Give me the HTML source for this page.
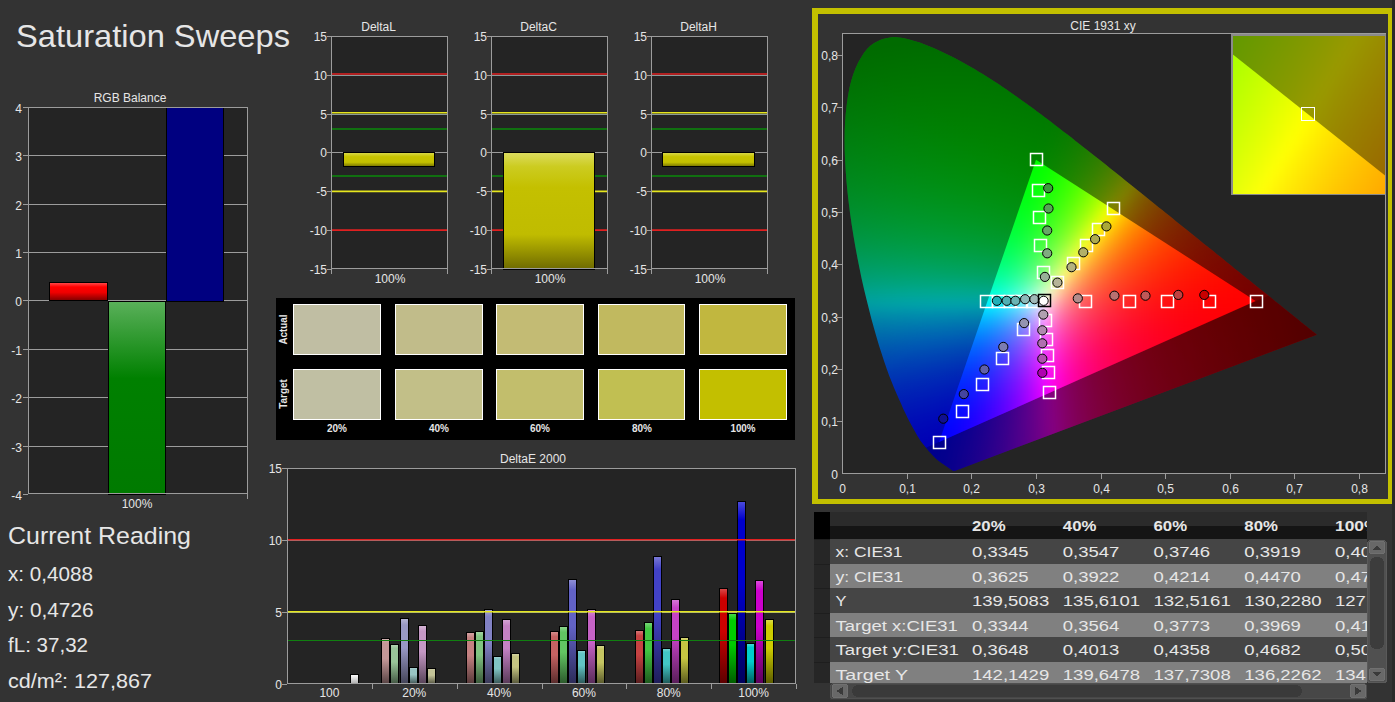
<!DOCTYPE html><html><head><meta charset="utf-8"><style>
html,body{margin:0;padding:0;background:#333333;overflow:hidden}
svg{display:block}
text{font-family:"Liberation Sans", sans-serif;fill:#e6e6e6}
</style></head><body>
<svg width="1395" height="702" viewBox="0 0 1395 702" shape-rendering="crispEdges">
<rect x="0" y="0" width="1395" height="702" fill="#333333"/>

<defs>
<linearGradient id="gRed" x1="0" y1="0" x2="0" y2="1">
<stop offset="0" stop-color="#ff5050"/><stop offset="0.25" stop-color="#ff0000"/><stop offset="0.55" stop-color="#f00000"/><stop offset="1" stop-color="#800000"/></linearGradient>
<linearGradient id="gGreen" x1="0" y1="0" x2="0" y2="1">
<stop offset="0" stop-color="#5ab05a"/><stop offset="0.4" stop-color="#008000"/><stop offset="1" stop-color="#007a00"/></linearGradient>
<linearGradient id="gYel" x1="0" y1="0" x2="0" y2="1">
<stop offset="0" stop-color="#dada50"/><stop offset="0.3" stop-color="#c8c400"/><stop offset="0.7" stop-color="#c4c000"/><stop offset="1" stop-color="#787400"/></linearGradient>
<linearGradient id="gYel2" x1="0" y1="0" x2="0" y2="1">
<stop offset="0" stop-color="#dcdc60"/><stop offset="0.12" stop-color="#cccc20"/><stop offset="0.3" stop-color="#c4c000"/><stop offset="0.7" stop-color="#c0bc00"/><stop offset="1" stop-color="#6e6a00"/></linearGradient>
</defs>
<text x="16" y="46.5" font-size="31.5" text-anchor="start" textLength="274" lengthAdjust="spacingAndGlyphs" fill="#f0f0f0">Saturation Sweeps</text>
<rect x="28" y="107" width="220" height="387" fill="#242424" />
<text x="130" y="102" font-size="12" text-anchor="middle" >RGB Balance</text>
<line x1="23" y1="107.5" x2="28" y2="107.5" stroke="#9c9c9c" stroke-width="1"/>
<text x="22" y="112.5" font-size="12" text-anchor="end" >4</text>
<line x1="28" y1="155.5" x2="248" y2="155.5" stroke="#9c9c9c" stroke-width="1"/>
<line x1="23" y1="155.5" x2="28" y2="155.5" stroke="#9c9c9c" stroke-width="1"/>
<text x="22" y="160.5" font-size="12" text-anchor="end" >3</text>
<line x1="28" y1="204.5" x2="248" y2="204.5" stroke="#9c9c9c" stroke-width="1"/>
<line x1="23" y1="204.5" x2="28" y2="204.5" stroke="#9c9c9c" stroke-width="1"/>
<text x="22" y="209.5" font-size="12" text-anchor="end" >2</text>
<line x1="28" y1="252.5" x2="248" y2="252.5" stroke="#9c9c9c" stroke-width="1"/>
<line x1="23" y1="252.5" x2="28" y2="252.5" stroke="#9c9c9c" stroke-width="1"/>
<text x="22" y="257.5" font-size="12" text-anchor="end" >1</text>
<line x1="28" y1="300.5" x2="248" y2="300.5" stroke="#9c9c9c" stroke-width="1"/>
<line x1="23" y1="300.5" x2="28" y2="300.5" stroke="#9c9c9c" stroke-width="1"/>
<text x="22" y="305.5" font-size="12" text-anchor="end" >0</text>
<line x1="28" y1="349.5" x2="248" y2="349.5" stroke="#9c9c9c" stroke-width="1"/>
<line x1="23" y1="349.5" x2="28" y2="349.5" stroke="#9c9c9c" stroke-width="1"/>
<text x="22" y="354.5" font-size="12" text-anchor="end" >-1</text>
<line x1="28" y1="397.5" x2="248" y2="397.5" stroke="#9c9c9c" stroke-width="1"/>
<line x1="23" y1="397.5" x2="28" y2="397.5" stroke="#9c9c9c" stroke-width="1"/>
<text x="22" y="402.5" font-size="12" text-anchor="end" >-2</text>
<line x1="28" y1="446.5" x2="248" y2="446.5" stroke="#9c9c9c" stroke-width="1"/>
<line x1="23" y1="446.5" x2="28" y2="446.5" stroke="#9c9c9c" stroke-width="1"/>
<text x="22" y="451.5" font-size="12" text-anchor="end" >-3</text>
<line x1="23" y1="494.5" x2="28" y2="494.5" stroke="#9c9c9c" stroke-width="1"/>
<text x="22" y="499.5" font-size="12" text-anchor="end" >-4</text>
<rect x="49.5" y="282.5" width="58" height="18" fill="url(#gRed)" stroke="#000" stroke-width="1" />
<rect x="108.5" y="301.5" width="57" height="192.5" fill="url(#gGreen)" stroke="#000" stroke-width="1" />
<rect x="166.5" y="107.5" width="57" height="194.0" fill="#000080" stroke="#000" stroke-width="1" />
<rect x="28.5" y="107.5" width="219" height="386" fill="none" stroke="#9c9c9c"/>
<line x1="247.5" y1="494" x2="247.5" y2="499" stroke="#9c9c9c" stroke-width="1"/>
<text x="137" y="508" font-size="12" text-anchor="middle" >100%</text>
<text x="8" y="543.5" font-size="24.5" text-anchor="start" textLength="183" lengthAdjust="spacingAndGlyphs" fill="#f0f0f0">Current Reading</text>
<text x="8" y="581" font-size="20" text-anchor="start" textLength="85" lengthAdjust="spacingAndGlyphs" fill="#f0f0f0">x: 0,4088</text>
<text x="8" y="617" font-size="20" text-anchor="start" textLength="85.5" lengthAdjust="spacingAndGlyphs" fill="#f0f0f0">y: 0,4726</text>
<text x="8" y="652.2" font-size="20" text-anchor="start" textLength="80" lengthAdjust="spacingAndGlyphs" fill="#f0f0f0">fL: 37,32</text>
<text x="8" y="688.4" font-size="20" text-anchor="start" textLength="144" lengthAdjust="spacingAndGlyphs" fill="#f0f0f0">cd/m²: 127,867</text>
<rect x="331" y="36" width="117" height="233" fill="#242424" />
<line x1="327" y1="36.5" x2="331" y2="36.5" stroke="#9c9c9c" stroke-width="1"/>
<text x="327" y="41.0" font-size="12" text-anchor="end" >15</text>
<line x1="331" y1="75.5" x2="448" y2="75.5" stroke="#9c9c9c" stroke-width="1"/>
<line x1="327" y1="75.5" x2="331" y2="75.5" stroke="#9c9c9c" stroke-width="1"/>
<text x="327" y="80.0" font-size="12" text-anchor="end" >10</text>
<line x1="331" y1="114.5" x2="448" y2="114.5" stroke="#9c9c9c" stroke-width="1"/>
<line x1="327" y1="114.5" x2="331" y2="114.5" stroke="#9c9c9c" stroke-width="1"/>
<text x="327" y="119.0" font-size="12" text-anchor="end" >5</text>
<line x1="331" y1="152.5" x2="448" y2="152.5" stroke="#9c9c9c" stroke-width="1"/>
<line x1="327" y1="152.5" x2="331" y2="152.5" stroke="#9c9c9c" stroke-width="1"/>
<text x="327" y="157.0" font-size="12" text-anchor="end" >0</text>
<line x1="331" y1="191.5" x2="448" y2="191.5" stroke="#9c9c9c" stroke-width="1"/>
<line x1="327" y1="191.5" x2="331" y2="191.5" stroke="#9c9c9c" stroke-width="1"/>
<text x="327" y="196.0" font-size="12" text-anchor="end" >-5</text>
<line x1="331" y1="230.5" x2="448" y2="230.5" stroke="#9c9c9c" stroke-width="1"/>
<line x1="327" y1="230.5" x2="331" y2="230.5" stroke="#9c9c9c" stroke-width="1"/>
<text x="327" y="235.0" font-size="12" text-anchor="end" >-10</text>
<line x1="327" y1="269.5" x2="331" y2="269.5" stroke="#9c9c9c" stroke-width="1"/>
<text x="327" y="274.0" font-size="12" text-anchor="end" >-15</text>
<line x1="331" y1="75.5" x2="448" y2="75.5" stroke="#8a9a9a" stroke-width="1"/>
<line x1="331" y1="73.93" x2="448" y2="73.93" stroke="#e02020" stroke-width="1.6" shape-rendering="geometricPrecision"/>
<line x1="331" y1="230.17" x2="448" y2="230.17" stroke="#e02020" stroke-width="1.6" shape-rendering="geometricPrecision"/>
<line x1="331" y1="114.5" x2="448" y2="114.5" stroke="#8a9a9a" stroke-width="1"/>
<line x1="331" y1="112.77" x2="448" y2="112.77" stroke="#e6e61e" stroke-width="1.6" shape-rendering="geometricPrecision"/>
<line x1="331" y1="191.33" x2="448" y2="191.33" stroke="#e6e61e" stroke-width="1.6" shape-rendering="geometricPrecision"/>
<line x1="331" y1="128.5" x2="448" y2="128.5" stroke="#107010" stroke-width="2"/>
<line x1="331" y1="175.5" x2="448" y2="175.5" stroke="#107010" stroke-width="2"/>
<rect x="343.5" y="152.5" width="91" height="14" fill="url(#gYel)" stroke="#000" stroke-width="1" />
<rect x="331.5" y="36.5" width="116" height="232" fill="none" stroke="#9c9c9c"/>
<line x1="331.5" y1="269" x2="331.5" y2="274" stroke="#9c9c9c" stroke-width="1"/>
<line x1="447.5" y1="269" x2="447.5" y2="274" stroke="#9c9c9c" stroke-width="1"/>
<text x="378.6" y="30.5" font-size="12" text-anchor="middle" >DeltaL</text>
<text x="390" y="283" font-size="12" text-anchor="middle" >100%</text>
<rect x="491" y="36" width="117" height="233" fill="#242424" />
<line x1="487" y1="36.5" x2="491" y2="36.5" stroke="#9c9c9c" stroke-width="1"/>
<text x="487" y="41.0" font-size="12" text-anchor="end" >15</text>
<line x1="491" y1="75.5" x2="608" y2="75.5" stroke="#9c9c9c" stroke-width="1"/>
<line x1="487" y1="75.5" x2="491" y2="75.5" stroke="#9c9c9c" stroke-width="1"/>
<text x="487" y="80.0" font-size="12" text-anchor="end" >10</text>
<line x1="491" y1="114.5" x2="608" y2="114.5" stroke="#9c9c9c" stroke-width="1"/>
<line x1="487" y1="114.5" x2="491" y2="114.5" stroke="#9c9c9c" stroke-width="1"/>
<text x="487" y="119.0" font-size="12" text-anchor="end" >5</text>
<line x1="491" y1="152.5" x2="608" y2="152.5" stroke="#9c9c9c" stroke-width="1"/>
<line x1="487" y1="152.5" x2="491" y2="152.5" stroke="#9c9c9c" stroke-width="1"/>
<text x="487" y="157.0" font-size="12" text-anchor="end" >0</text>
<line x1="491" y1="191.5" x2="608" y2="191.5" stroke="#9c9c9c" stroke-width="1"/>
<line x1="487" y1="191.5" x2="491" y2="191.5" stroke="#9c9c9c" stroke-width="1"/>
<text x="487" y="196.0" font-size="12" text-anchor="end" >-5</text>
<line x1="491" y1="230.5" x2="608" y2="230.5" stroke="#9c9c9c" stroke-width="1"/>
<line x1="487" y1="230.5" x2="491" y2="230.5" stroke="#9c9c9c" stroke-width="1"/>
<text x="487" y="235.0" font-size="12" text-anchor="end" >-10</text>
<line x1="487" y1="269.5" x2="491" y2="269.5" stroke="#9c9c9c" stroke-width="1"/>
<text x="487" y="274.0" font-size="12" text-anchor="end" >-15</text>
<line x1="491" y1="75.5" x2="608" y2="75.5" stroke="#8a9a9a" stroke-width="1"/>
<line x1="491" y1="73.93" x2="608" y2="73.93" stroke="#e02020" stroke-width="1.6" shape-rendering="geometricPrecision"/>
<line x1="491" y1="230.17" x2="608" y2="230.17" stroke="#e02020" stroke-width="1.6" shape-rendering="geometricPrecision"/>
<line x1="491" y1="114.5" x2="608" y2="114.5" stroke="#8a9a9a" stroke-width="1"/>
<line x1="491" y1="112.77" x2="608" y2="112.77" stroke="#e6e61e" stroke-width="1.6" shape-rendering="geometricPrecision"/>
<line x1="491" y1="191.33" x2="608" y2="191.33" stroke="#e6e61e" stroke-width="1.6" shape-rendering="geometricPrecision"/>
<line x1="491" y1="128.5" x2="608" y2="128.5" stroke="#107010" stroke-width="2"/>
<line x1="491" y1="175.5" x2="608" y2="175.5" stroke="#107010" stroke-width="2"/>
<rect x="503.5" y="152.5" width="91" height="117" fill="url(#gYel2)" stroke="#000" stroke-width="1" />
<rect x="491.5" y="36.5" width="116" height="232" fill="none" stroke="#9c9c9c"/>
<line x1="491.5" y1="269" x2="491.5" y2="274" stroke="#9c9c9c" stroke-width="1"/>
<line x1="607.5" y1="269" x2="607.5" y2="274" stroke="#9c9c9c" stroke-width="1"/>
<text x="538.6" y="30.5" font-size="12" text-anchor="middle" >DeltaC</text>
<text x="550" y="283" font-size="12" text-anchor="middle" >100%</text>
<rect x="651" y="36" width="117" height="233" fill="#242424" />
<line x1="647" y1="36.5" x2="651" y2="36.5" stroke="#9c9c9c" stroke-width="1"/>
<text x="647" y="41.0" font-size="12" text-anchor="end" >15</text>
<line x1="651" y1="75.5" x2="768" y2="75.5" stroke="#9c9c9c" stroke-width="1"/>
<line x1="647" y1="75.5" x2="651" y2="75.5" stroke="#9c9c9c" stroke-width="1"/>
<text x="647" y="80.0" font-size="12" text-anchor="end" >10</text>
<line x1="651" y1="114.5" x2="768" y2="114.5" stroke="#9c9c9c" stroke-width="1"/>
<line x1="647" y1="114.5" x2="651" y2="114.5" stroke="#9c9c9c" stroke-width="1"/>
<text x="647" y="119.0" font-size="12" text-anchor="end" >5</text>
<line x1="651" y1="152.5" x2="768" y2="152.5" stroke="#9c9c9c" stroke-width="1"/>
<line x1="647" y1="152.5" x2="651" y2="152.5" stroke="#9c9c9c" stroke-width="1"/>
<text x="647" y="157.0" font-size="12" text-anchor="end" >0</text>
<line x1="651" y1="191.5" x2="768" y2="191.5" stroke="#9c9c9c" stroke-width="1"/>
<line x1="647" y1="191.5" x2="651" y2="191.5" stroke="#9c9c9c" stroke-width="1"/>
<text x="647" y="196.0" font-size="12" text-anchor="end" >-5</text>
<line x1="651" y1="230.5" x2="768" y2="230.5" stroke="#9c9c9c" stroke-width="1"/>
<line x1="647" y1="230.5" x2="651" y2="230.5" stroke="#9c9c9c" stroke-width="1"/>
<text x="647" y="235.0" font-size="12" text-anchor="end" >-10</text>
<line x1="647" y1="269.5" x2="651" y2="269.5" stroke="#9c9c9c" stroke-width="1"/>
<text x="647" y="274.0" font-size="12" text-anchor="end" >-15</text>
<line x1="651" y1="75.5" x2="768" y2="75.5" stroke="#8a9a9a" stroke-width="1"/>
<line x1="651" y1="73.93" x2="768" y2="73.93" stroke="#e02020" stroke-width="1.6" shape-rendering="geometricPrecision"/>
<line x1="651" y1="230.17" x2="768" y2="230.17" stroke="#e02020" stroke-width="1.6" shape-rendering="geometricPrecision"/>
<line x1="651" y1="114.5" x2="768" y2="114.5" stroke="#8a9a9a" stroke-width="1"/>
<line x1="651" y1="112.77" x2="768" y2="112.77" stroke="#e6e61e" stroke-width="1.6" shape-rendering="geometricPrecision"/>
<line x1="651" y1="191.33" x2="768" y2="191.33" stroke="#e6e61e" stroke-width="1.6" shape-rendering="geometricPrecision"/>
<line x1="651" y1="128.5" x2="768" y2="128.5" stroke="#107010" stroke-width="2"/>
<line x1="651" y1="175.5" x2="768" y2="175.5" stroke="#107010" stroke-width="2"/>
<rect x="662.5" y="152.5" width="92" height="14" fill="url(#gYel)" stroke="#000" stroke-width="1" />
<rect x="651.5" y="36.5" width="116" height="232" fill="none" stroke="#9c9c9c"/>
<line x1="651.5" y1="269" x2="651.5" y2="274" stroke="#9c9c9c" stroke-width="1"/>
<line x1="767.5" y1="269" x2="767.5" y2="274" stroke="#9c9c9c" stroke-width="1"/>
<text x="698.6" y="30.5" font-size="12" text-anchor="middle" >DeltaH</text>
<text x="710" y="283" font-size="12" text-anchor="middle" >100%</text>
<rect x="276" y="298" width="519" height="142" fill="#000000" />
<rect x="293.5" y="304.5" width="87" height="50" fill="#c0bea3" stroke="#ffffff" stroke-width="1.2" />
<rect x="293.5" y="369.5" width="87" height="50" fill="#c0bfa3" stroke="#ffffff" stroke-width="1.2" />
<text x="337" y="431.8" font-size="11" text-anchor="middle" fill="#ffffff" font-weight="bold" textLength="20" lengthAdjust="spacingAndGlyphs">20%</text>
<rect x="395.5" y="304.5" width="87" height="50" fill="#c1bc8a" stroke="#ffffff" stroke-width="1.2" />
<rect x="395.5" y="369.5" width="87" height="50" fill="#c2bf88" stroke="#ffffff" stroke-width="1.2" />
<text x="439" y="431.8" font-size="11" text-anchor="middle" fill="#ffffff" font-weight="bold" textLength="20" lengthAdjust="spacingAndGlyphs">40%</text>
<rect x="496.5" y="304.5" width="87" height="50" fill="#c3bb74" stroke="#ffffff" stroke-width="1.2" />
<rect x="496.5" y="369.5" width="87" height="50" fill="#c2be6c" stroke="#ffffff" stroke-width="1.2" />
<text x="540" y="431.8" font-size="11" text-anchor="middle" fill="#ffffff" font-weight="bold" textLength="20" lengthAdjust="spacingAndGlyphs">60%</text>
<rect x="598.5" y="304.5" width="86" height="50" fill="#c1b95f" stroke="#ffffff" stroke-width="1.2" />
<rect x="598.5" y="369.5" width="86" height="50" fill="#c1bf52" stroke="#ffffff" stroke-width="1.2" />
<text x="642" y="431.8" font-size="11" text-anchor="middle" fill="#ffffff" font-weight="bold" textLength="20" lengthAdjust="spacingAndGlyphs">80%</text>
<rect x="699.5" y="304.5" width="87" height="50" fill="#c1b73f" stroke="#ffffff" stroke-width="1.2" />
<rect x="699.5" y="369.5" width="87" height="50" fill="#c3bf00" stroke="#ffffff" stroke-width="1.2" />
<text x="743" y="431.8" font-size="11" text-anchor="middle" fill="#ffffff" font-weight="bold" textLength="25" lengthAdjust="spacingAndGlyphs">100%</text>
<text x="0" y="0" font-size="10.5" text-anchor="middle" fill="#ffffff" font-weight="bold" textLength="30" lengthAdjust="spacingAndGlyphs" transform="translate(287.3,329.5) rotate(-90)">Actual</text>
<text x="0" y="0" font-size="10.5" text-anchor="middle" fill="#ffffff" font-weight="bold" textLength="29.5" lengthAdjust="spacingAndGlyphs" transform="translate(287.3,394) rotate(-90)">Target</text>
<rect x="287" y="468" width="509" height="216" fill="#242424" />
<text x="533" y="463" font-size="12" text-anchor="middle" >DeltaE 2000</text>
<line x1="282" y1="468.5" x2="287" y2="468.5" stroke="#9c9c9c" stroke-width="1"/>
<text x="282" y="473.0" font-size="12" text-anchor="end" >15</text>
<line x1="282" y1="540.5" x2="287" y2="540.5" stroke="#9c9c9c" stroke-width="1"/>
<text x="282" y="545.0" font-size="12" text-anchor="end" >10</text>
<line x1="282" y1="612.5" x2="287" y2="612.5" stroke="#9c9c9c" stroke-width="1"/>
<text x="282" y="617.0" font-size="12" text-anchor="end" >5</text>
<line x1="282" y1="684.5" x2="287" y2="684.5" stroke="#9c9c9c" stroke-width="1"/>
<text x="282" y="689.0" font-size="12" text-anchor="end" >0</text>
<line x1="287" y1="540.5" x2="796" y2="540.5" stroke="#8a9a9a" stroke-width="1"/>
<line x1="287" y1="612.5" x2="796" y2="612.5" stroke="#8a9a9a" stroke-width="1"/>
<line x1="372.5" y1="684" x2="372.5" y2="689" stroke="#9c9c9c" stroke-width="1"/>
<line x1="457.5" y1="684" x2="457.5" y2="689" stroke="#9c9c9c" stroke-width="1"/>
<line x1="542.5" y1="684" x2="542.5" y2="689" stroke="#9c9c9c" stroke-width="1"/>
<line x1="626.5" y1="684" x2="626.5" y2="689" stroke="#9c9c9c" stroke-width="1"/>
<line x1="711.5" y1="684" x2="711.5" y2="689" stroke="#9c9c9c" stroke-width="1"/>
<line x1="796.5" y1="684" x2="796.5" y2="689" stroke="#9c9c9c" stroke-width="1"/>
<text x="329.4166666666667" y="697" font-size="12" text-anchor="middle" >100</text>
<text x="414.25" y="697" font-size="12" text-anchor="middle" >20%</text>
<text x="499.0833333333333" y="697" font-size="12" text-anchor="middle" >40%</text>
<text x="583.9166666666666" y="697" font-size="12" text-anchor="middle" >60%</text>
<text x="668.75" y="697" font-size="12" text-anchor="middle" >80%</text>
<text x="753.5833333333333" y="697" font-size="12" text-anchor="middle" >100%</text>
<rect x="381.5" y="638.5" width="8" height="45.0" fill="url(#de1)" stroke="#000" stroke-width="1" />
<rect x="390.5" y="644.5" width="8" height="39.0" fill="url(#de2)" stroke="#000" stroke-width="1" />
<rect x="400.5" y="618.5" width="8" height="65.0" fill="url(#de3)" stroke="#000" stroke-width="1" />
<rect x="409.5" y="667.5" width="8" height="16.0" fill="url(#de4)" stroke="#000" stroke-width="1" />
<rect x="418.5" y="625.5" width="8" height="58.0" fill="url(#de5)" stroke="#000" stroke-width="1" />
<rect x="427.5" y="668.5" width="8" height="15.0" fill="url(#de6)" stroke="#000" stroke-width="1" />
<rect x="466.5" y="632.5" width="8" height="51.0" fill="url(#de7)" stroke="#000" stroke-width="1" />
<rect x="475.5" y="631.5" width="8" height="52.0" fill="url(#de8)" stroke="#000" stroke-width="1" />
<rect x="484.5" y="609.5" width="8" height="74.0" fill="url(#de9)" stroke="#000" stroke-width="1" />
<rect x="493.5" y="656.5" width="8" height="27.0" fill="url(#de10)" stroke="#000" stroke-width="1" />
<rect x="502.5" y="619.5" width="8" height="64.0" fill="url(#de11)" stroke="#000" stroke-width="1" />
<rect x="511.5" y="653.5" width="8" height="30.0" fill="url(#de12)" stroke="#000" stroke-width="1" />
<rect x="550.5" y="631.5" width="8" height="52.0" fill="url(#de13)" stroke="#000" stroke-width="1" />
<rect x="559.5" y="626.5" width="8" height="57.0" fill="url(#de14)" stroke="#000" stroke-width="1" />
<rect x="568.5" y="579.5" width="8" height="104.0" fill="url(#de15)" stroke="#000" stroke-width="1" />
<rect x="577.5" y="650.5" width="8" height="33.0" fill="url(#de16)" stroke="#000" stroke-width="1" />
<rect x="587.5" y="609.5" width="8" height="74.0" fill="url(#de17)" stroke="#000" stroke-width="1" />
<rect x="596.5" y="645.5" width="8" height="38.0" fill="url(#de18)" stroke="#000" stroke-width="1" />
<rect x="635.5" y="630.5" width="8" height="53.0" fill="url(#de19)" stroke="#000" stroke-width="1" />
<rect x="644.5" y="622.5" width="8" height="61.0" fill="url(#de20)" stroke="#000" stroke-width="1" />
<rect x="653.5" y="556.5" width="8" height="127.0" fill="url(#de21)" stroke="#000" stroke-width="1" />
<rect x="662.5" y="648.5" width="8" height="35.0" fill="url(#de22)" stroke="#000" stroke-width="1" />
<rect x="671.5" y="599.5" width="8" height="84.0" fill="url(#de23)" stroke="#000" stroke-width="1" />
<rect x="680.5" y="637.5" width="8" height="46.0" fill="url(#de24)" stroke="#000" stroke-width="1" />
<rect x="719.5" y="588.5" width="8" height="95.0" fill="url(#de25)" stroke="#000" stroke-width="1" />
<rect x="728.5" y="613.5" width="8" height="70.0" fill="url(#de26)" stroke="#000" stroke-width="1" />
<rect x="737.5" y="501.5" width="8" height="182.0" fill="url(#de27)" stroke="#000" stroke-width="1" />
<rect x="746.5" y="643.5" width="8" height="40.0" fill="url(#de28)" stroke="#000" stroke-width="1" />
<rect x="755.5" y="580.5" width="8" height="103.0" fill="url(#de29)" stroke="#000" stroke-width="1" />
<rect x="765.5" y="619.5" width="8" height="64.0" fill="url(#de30)" stroke="#000" stroke-width="1" />
<rect x="350.5" y="674.5" width="8" height="9" fill="url(#deW)" stroke="#000" stroke-width="1" />
<defs><linearGradient id="de1" x1="0" y1="0" x2="0" y2="1"><stop offset="0" stop-color="#d6b7b7"/><stop offset="0.1" stop-color="#c49898"/><stop offset="0.45" stop-color="#c49898"/><stop offset="1" stop-color="#584444"/></linearGradient><linearGradient id="de2" x1="0" y1="0" x2="0" y2="1"><stop offset="0" stop-color="#b7d6b7"/><stop offset="0.1" stop-color="#98c498"/><stop offset="0.45" stop-color="#98c498"/><stop offset="1" stop-color="#445844"/></linearGradient><linearGradient id="de3" x1="0" y1="0" x2="0" y2="1"><stop offset="0" stop-color="#b7b7d6"/><stop offset="0.1" stop-color="#9898c4"/><stop offset="0.45" stop-color="#9898c4"/><stop offset="1" stop-color="#444458"/></linearGradient><linearGradient id="de4" x1="0" y1="0" x2="0" y2="1"><stop offset="0" stop-color="#b7d6d6"/><stop offset="0.1" stop-color="#98c4c4"/><stop offset="0.45" stop-color="#98c4c4"/><stop offset="1" stop-color="#445858"/></linearGradient><linearGradient id="de5" x1="0" y1="0" x2="0" y2="1"><stop offset="0" stop-color="#d6b7d6"/><stop offset="0.1" stop-color="#c498c4"/><stop offset="0.45" stop-color="#c498c4"/><stop offset="1" stop-color="#584458"/></linearGradient><linearGradient id="de6" x1="0" y1="0" x2="0" y2="1"><stop offset="0" stop-color="#d6d6b7"/><stop offset="0.1" stop-color="#c4c498"/><stop offset="0.45" stop-color="#c4c498"/><stop offset="1" stop-color="#585844"/></linearGradient><linearGradient id="de7" x1="0" y1="0" x2="0" y2="1"><stop offset="0" stop-color="#d6a7a7"/><stop offset="0.1" stop-color="#c48181"/><stop offset="0.45" stop-color="#c48181"/><stop offset="1" stop-color="#583a3a"/></linearGradient><linearGradient id="de8" x1="0" y1="0" x2="0" y2="1"><stop offset="0" stop-color="#a7d6a7"/><stop offset="0.1" stop-color="#81c481"/><stop offset="0.45" stop-color="#81c481"/><stop offset="1" stop-color="#3a583a"/></linearGradient><linearGradient id="de9" x1="0" y1="0" x2="0" y2="1"><stop offset="0" stop-color="#a7a7d6"/><stop offset="0.1" stop-color="#8181c4"/><stop offset="0.45" stop-color="#8181c4"/><stop offset="1" stop-color="#3a3a58"/></linearGradient><linearGradient id="de10" x1="0" y1="0" x2="0" y2="1"><stop offset="0" stop-color="#a7d6d6"/><stop offset="0.1" stop-color="#81c4c4"/><stop offset="0.45" stop-color="#81c4c4"/><stop offset="1" stop-color="#3a5858"/></linearGradient><linearGradient id="de11" x1="0" y1="0" x2="0" y2="1"><stop offset="0" stop-color="#d6a7d6"/><stop offset="0.1" stop-color="#c481c4"/><stop offset="0.45" stop-color="#c481c4"/><stop offset="1" stop-color="#583a58"/></linearGradient><linearGradient id="de12" x1="0" y1="0" x2="0" y2="1"><stop offset="0" stop-color="#d6d6a7"/><stop offset="0.1" stop-color="#c4c481"/><stop offset="0.45" stop-color="#c4c481"/><stop offset="1" stop-color="#58583a"/></linearGradient><linearGradient id="de13" x1="0" y1="0" x2="0" y2="1"><stop offset="0" stop-color="#d69191"/><stop offset="0.1" stop-color="#c56262"/><stop offset="0.45" stop-color="#c56262"/><stop offset="1" stop-color="#592c2c"/></linearGradient><linearGradient id="de14" x1="0" y1="0" x2="0" y2="1"><stop offset="0" stop-color="#91d691"/><stop offset="0.1" stop-color="#62c562"/><stop offset="0.45" stop-color="#62c562"/><stop offset="1" stop-color="#2c592c"/></linearGradient><linearGradient id="de15" x1="0" y1="0" x2="0" y2="1"><stop offset="0" stop-color="#9191d6"/><stop offset="0.1" stop-color="#6262c5"/><stop offset="0.45" stop-color="#6262c5"/><stop offset="1" stop-color="#2c2c59"/></linearGradient><linearGradient id="de16" x1="0" y1="0" x2="0" y2="1"><stop offset="0" stop-color="#91d6d6"/><stop offset="0.1" stop-color="#62c5c5"/><stop offset="0.45" stop-color="#62c5c5"/><stop offset="1" stop-color="#2c5959"/></linearGradient><linearGradient id="de17" x1="0" y1="0" x2="0" y2="1"><stop offset="0" stop-color="#d691d6"/><stop offset="0.1" stop-color="#c562c5"/><stop offset="0.45" stop-color="#c562c5"/><stop offset="1" stop-color="#592c59"/></linearGradient><linearGradient id="de18" x1="0" y1="0" x2="0" y2="1"><stop offset="0" stop-color="#d6d691"/><stop offset="0.1" stop-color="#c5c562"/><stop offset="0.45" stop-color="#c5c562"/><stop offset="1" stop-color="#59592c"/></linearGradient><linearGradient id="de19" x1="0" y1="0" x2="0" y2="1"><stop offset="0" stop-color="#d77b7b"/><stop offset="0.1" stop-color="#c64242"/><stop offset="0.45" stop-color="#c64242"/><stop offset="1" stop-color="#591e1e"/></linearGradient><linearGradient id="de20" x1="0" y1="0" x2="0" y2="1"><stop offset="0" stop-color="#7bd77b"/><stop offset="0.1" stop-color="#42c642"/><stop offset="0.45" stop-color="#42c642"/><stop offset="1" stop-color="#1e591e"/></linearGradient><linearGradient id="de21" x1="0" y1="0" x2="0" y2="1"><stop offset="0" stop-color="#7b7bd7"/><stop offset="0.1" stop-color="#4242c6"/><stop offset="0.45" stop-color="#4242c6"/><stop offset="1" stop-color="#1e1e59"/></linearGradient><linearGradient id="de22" x1="0" y1="0" x2="0" y2="1"><stop offset="0" stop-color="#7bd7d7"/><stop offset="0.1" stop-color="#42c6c6"/><stop offset="0.45" stop-color="#42c6c6"/><stop offset="1" stop-color="#1e5959"/></linearGradient><linearGradient id="de23" x1="0" y1="0" x2="0" y2="1"><stop offset="0" stop-color="#d77bd7"/><stop offset="0.1" stop-color="#c642c6"/><stop offset="0.45" stop-color="#c642c6"/><stop offset="1" stop-color="#591e59"/></linearGradient><linearGradient id="de24" x1="0" y1="0" x2="0" y2="1"><stop offset="0" stop-color="#d7d77b"/><stop offset="0.1" stop-color="#c6c642"/><stop offset="0.45" stop-color="#c6c642"/><stop offset="1" stop-color="#59591e"/></linearGradient><linearGradient id="de25" x1="0" y1="0" x2="0" y2="1"><stop offset="0" stop-color="#db4c4c"/><stop offset="0.1" stop-color="#cc0000"/><stop offset="0.45" stop-color="#cc0000"/><stop offset="1" stop-color="#5c0000"/></linearGradient><linearGradient id="de26" x1="0" y1="0" x2="0" y2="1"><stop offset="0" stop-color="#4cdb4c"/><stop offset="0.1" stop-color="#00cc00"/><stop offset="0.45" stop-color="#00cc00"/><stop offset="1" stop-color="#005c00"/></linearGradient><linearGradient id="de27" x1="0" y1="0" x2="0" y2="1"><stop offset="0" stop-color="#4c4cdb"/><stop offset="0.1" stop-color="#0000cc"/><stop offset="0.45" stop-color="#0000cc"/><stop offset="1" stop-color="#00005c"/></linearGradient><linearGradient id="de28" x1="0" y1="0" x2="0" y2="1"><stop offset="0" stop-color="#4cdbdb"/><stop offset="0.1" stop-color="#00cccc"/><stop offset="0.45" stop-color="#00cccc"/><stop offset="1" stop-color="#005c5c"/></linearGradient><linearGradient id="de29" x1="0" y1="0" x2="0" y2="1"><stop offset="0" stop-color="#db4cdb"/><stop offset="0.1" stop-color="#cc00cc"/><stop offset="0.45" stop-color="#cc00cc"/><stop offset="1" stop-color="#5c005c"/></linearGradient><linearGradient id="de30" x1="0" y1="0" x2="0" y2="1"><stop offset="0" stop-color="#dbdb4c"/><stop offset="0.1" stop-color="#cccc00"/><stop offset="0.45" stop-color="#cccc00"/><stop offset="1" stop-color="#5c5c00"/></linearGradient><linearGradient id="deW" x1="0" y1="0" x2="0" y2="1"><stop offset="0" stop-color="#ffffff"/><stop offset="1" stop-color="#b0b0b0"/></linearGradient></defs>
<line x1="287" y1="539.70" x2="796" y2="539.70" stroke="#e02020" stroke-width="1.5" shape-rendering="geometricPrecision"/>
<line x1="287" y1="611.70" x2="796" y2="611.70" stroke="#e6e61e" stroke-width="1.5" shape-rendering="geometricPrecision"/>
<line x1="287" y1="640.5" x2="796" y2="640.5" stroke="#108010" stroke-width="1.3"/>
<rect x="287.5" y="468.5" width="508" height="215" fill="none" stroke="#9c9c9c"/>
<rect x="812" y="8" width="580" height="496" fill="#c3c000" />
<rect x="818" y="14" width="570" height="484.5" fill="#333333" />
<rect x="842" y="33" width="544" height="441" fill="#242424" />
<text x="1103" y="30" font-size="12" text-anchor="middle" >CIE 1931 xy</text>
<defs>
<clipPath id="clLocus"><path d="M954.7,470.9 L954.6,470.9 L954.6,470.9 L954.6,470.9 L954.6,470.9 L954.5,470.9 L954.5,470.9 L954.4,470.9 L954.4,471.0 L954.3,471.0 L954.3,471.0 L954.2,471.0 L954.2,471.0 L954.1,471.0 L954.0,471.0 L954.0,471.0 L953.9,471.0 L953.8,471.0 L953.7,471.0 L953.6,471.0 L953.5,471.0 L953.4,471.0 L953.3,470.9 L953.1,470.9 L952.9,470.8 L952.7,470.7 L952.5,470.6 L952.3,470.5 L952.0,470.3 L951.7,470.1 L951.3,469.9 L950.9,469.6 L950.5,469.3 L950.1,469.0 L949.6,468.6 L949.0,468.2 L948.4,467.8 L947.7,467.3 L947.0,466.8 L946.2,466.3 L945.4,465.7 L944.4,465.0 L943.4,464.2 L942.2,463.5 L941.1,462.7 L939.8,461.8 L938.4,460.8 L936.9,459.5 L935.2,458.0 L933.3,456.0 L931.2,453.7 L928.9,451.2 L926.6,448.5 L924.4,445.8 L922.4,443.3 L920.6,440.9 L919.1,438.6 L917.6,436.3 L916.2,433.8 L914.7,431.1 L913.0,428.1 L911.2,424.7 L909.3,421.2 L907.4,417.4 L905.4,413.3 L903.3,408.9 L901.2,404.1 L898.9,399.0 L896.5,393.6 L894.1,387.9 L891.6,381.8 L889.1,375.4 L886.6,368.5 L884.1,361.3 L881.6,353.6 L879.0,345.5 L876.5,337.1 L874.0,328.3 L871.5,319.2 L869.1,309.7 L866.6,299.8 L864.1,289.5 L861.7,278.9 L859.5,268.3 L857.4,257.7 L855.4,246.9 L853.5,235.9 L851.7,224.7 L850.1,213.6 L848.7,202.6 L847.5,191.9 L846.5,181.4 L845.7,170.9 L845.1,160.5 L844.7,150.3 L844.6,140.5 L844.7,131.0 L845.1,121.9 L845.8,112.9 L846.8,104.3 L848.0,96.1 L849.4,88.3 L851.2,81.1 L853.2,74.5 L855.6,68.3 L858.2,62.6 L861.1,57.4 L864.1,52.8 L867.3,48.8 L870.7,45.5 L874.3,42.9 L878.2,40.9 L882.1,39.3 L886.1,38.2 L890.2,37.4 L894.3,37.1 L898.6,37.4 L902.9,38.0 L907.2,39.0 L911.6,40.2 L916.0,41.4 L920.3,42.8 L924.7,44.4 L929.1,46.2 L933.5,48.1 L937.9,50.0 L942.1,52.0 L946.3,54.0 L950.5,56.0 L954.6,58.1 L958.7,60.3 L962.8,62.5 L966.8,64.7 L970.8,67.0 L974.8,69.3 L978.7,71.7 L982.7,74.1 L986.6,76.5 L990.5,79.0 L994.4,81.5 L998.4,84.1 L1002.3,86.7 L1006.1,89.3 L1010.0,92.0 L1013.9,94.7 L1017.8,97.4 L1021.6,100.2 L1025.5,102.9 L1029.3,105.8 L1033.2,108.6 L1037.0,111.4 L1040.9,114.3 L1044.7,117.2 L1048.6,120.1 L1052.4,123.0 L1056.2,125.9 L1060.1,128.9 L1063.9,131.9 L1067.8,134.8 L1071.7,137.8 L1075.5,140.9 L1079.4,143.9 L1083.2,146.9 L1087.1,149.9 L1090.9,153.0 L1094.7,156.0 L1098.6,159.0 L1102.4,162.1 L1106.2,165.1 L1110.0,168.2 L1113.9,171.2 L1117.7,174.3 L1121.5,177.3 L1125.3,180.4 L1129.1,183.4 L1132.9,186.4 L1136.6,189.4 L1140.4,192.5 L1144.1,195.5 L1147.8,198.5 L1151.5,201.4 L1155.2,204.4 L1158.8,207.4 L1162.5,210.3 L1166.1,213.2 L1169.7,216.1 L1173.3,219.0 L1176.8,221.9 L1180.3,224.7 L1183.8,227.5 L1187.3,230.3 L1190.7,233.1 L1194.1,235.8 L1197.5,238.6 L1200.8,241.2 L1204.1,243.9 L1207.4,246.5 L1210.6,249.1 L1213.8,251.6 L1216.9,254.2 L1220.0,256.6 L1223.0,259.1 L1225.9,261.5 L1228.8,263.8 L1231.7,266.1 L1234.4,268.4 L1237.1,270.5 L1239.7,272.6 L1242.3,274.7 L1244.8,276.7 L1247.2,278.7 L1249.7,280.6 L1252.0,282.5 L1254.4,284.4 L1256.6,286.2 L1258.8,288.0 L1260.9,289.7 L1262.9,291.3 L1264.7,292.7 L1266.4,294.1 L1268.2,295.5 L1270.1,297.1 L1272.3,298.8 L1274.8,300.9 L1277.7,303.2 L1280.7,305.6 L1283.6,308.0 L1286.4,310.3 L1288.9,312.3 L1291.1,314.0 L1293.0,315.6 L1294.8,317.0 L1296.4,318.3 L1298.0,319.6 L1299.5,320.8 L1300.9,321.9 L1302.2,323.0 L1303.5,324.0 L1304.6,324.9 L1305.7,325.8 L1306.7,326.6 L1307.6,327.3 L1308.4,328.0 L1309.2,328.6 L1309.9,329.2 L1310.6,329.7 L1311.2,330.2 L1311.7,330.6 L1312.2,331.0 L1312.6,331.4 L1313.0,331.7 L1313.4,332.0 L1313.8,332.3 L1314.2,332.6 L1314.6,332.9 L1315.0,333.3 L1315.4,333.6 L1315.7,333.8 L1316.0,334.1 L1316.2,334.3 L1316.4,334.4 L1316.5,334.5 L1316.6,334.6 L1316.7,334.7 L1316.8,334.7 Z"/></clipPath>
<clipPath id="clTri"><path d="M1255.6,300.9 L1036.0,159.7 L939.1,442.1 Z"/></clipPath>
<filter id="fBlur" x="-5%" y="-5%" width="110%" height="110%" color-interpolation-filters="sRGB"><feGaussianBlur stdDeviation="5"/></filter>
<filter id="fDim" x="-5%" y="-5%" width="110%" height="110%" color-interpolation-filters="sRGB"><feGaussianBlur stdDeviation="5"/><feColorMatrix type="matrix" values="0.72 0 0 0 0  0 0.72 0 0 0  0 0 0.72 0 0  0 0 0 1 0"/></filter>
<g id="cieGrid" shape-rendering="crispEdges"><rect x="830" y="20" width="10" height="10" fill="#00ff00"/><rect x="840" y="20" width="10" height="10" fill="#00ff00"/><rect x="850" y="20" width="10" height="10" fill="#00ff00"/><rect x="860" y="20" width="10" height="10" fill="#00ff00"/><rect x="870" y="20" width="10" height="10" fill="#00ff00"/><rect x="880" y="20" width="10" height="10" fill="#00ff00"/><rect x="890" y="20" width="10" height="10" fill="#00ff00"/><rect x="900" y="20" width="10" height="10" fill="#00ff00"/><rect x="910" y="20" width="10" height="10" fill="#00ff00"/><rect x="920" y="20" width="10" height="10" fill="#00ff00"/><rect x="930" y="20" width="10" height="10" fill="#00ff00"/><rect x="940" y="20" width="10" height="10" fill="#00ff00"/><rect x="950" y="20" width="10" height="10" fill="#00ff00"/><rect x="960" y="20" width="10" height="10" fill="#00ff00"/><rect x="970" y="20" width="10" height="10" fill="#00ff00"/><rect x="980" y="20" width="10" height="10" fill="#00ff00"/><rect x="990" y="20" width="10" height="10" fill="#00ff00"/><rect x="1000" y="20" width="10" height="10" fill="#00ff00"/><rect x="1010" y="20" width="10" height="10" fill="#00ff00"/><rect x="1020" y="20" width="10" height="10" fill="#00ff00"/><rect x="1030" y="20" width="10" height="10" fill="#00ff00"/><rect x="1040" y="20" width="10" height="10" fill="#00ff00"/><rect x="1050" y="20" width="10" height="10" fill="#00ff00"/><rect x="1060" y="20" width="10" height="10" fill="#00ff00"/><rect x="1070" y="20" width="10" height="10" fill="#00ff00"/><rect x="1080" y="20" width="10" height="10" fill="#01ff00"/><rect x="1090" y="20" width="10" height="10" fill="#06ff00"/><rect x="1100" y="20" width="10" height="10" fill="#0dff00"/><rect x="1110" y="20" width="10" height="10" fill="#15ff00"/><rect x="1120" y="20" width="10" height="10" fill="#1fff00"/><rect x="1130" y="20" width="10" height="10" fill="#2aff00"/><rect x="1140" y="20" width="10" height="10" fill="#36ff00"/><rect x="1150" y="20" width="10" height="10" fill="#44ff00"/><rect x="1160" y="20" width="10" height="10" fill="#52ff00"/><rect x="1170" y="20" width="10" height="10" fill="#62ff00"/><rect x="1180" y="20" width="10" height="10" fill="#72ff00"/><rect x="1190" y="20" width="10" height="10" fill="#84ff00"/><rect x="1200" y="20" width="10" height="10" fill="#97ff00"/><rect x="1210" y="20" width="10" height="10" fill="#abff00"/><rect x="1220" y="20" width="10" height="10" fill="#c1ff00"/><rect x="1230" y="20" width="10" height="10" fill="#d8ff00"/><rect x="1240" y="20" width="10" height="10" fill="#f0ff00"/><rect x="1250" y="20" width="10" height="10" fill="#fff400"/><rect x="1260" y="20" width="10" height="10" fill="#ffde00"/><rect x="1270" y="20" width="10" height="10" fill="#ffca00"/><rect x="1280" y="20" width="10" height="10" fill="#ffb800"/><rect x="1290" y="20" width="10" height="10" fill="#ffa900"/><rect x="1300" y="20" width="10" height="10" fill="#ff9b00"/><rect x="1310" y="20" width="10" height="10" fill="#ff8e00"/><rect x="1320" y="20" width="10" height="10" fill="#ff8300"/><rect x="1330" y="20" width="10" height="10" fill="#ff7900"/><rect x="830" y="30" width="10" height="10" fill="#00ff00"/><rect x="840" y="30" width="10" height="10" fill="#00ff00"/><rect x="850" y="30" width="10" height="10" fill="#00ff00"/><rect x="860" y="30" width="10" height="10" fill="#00ff00"/><rect x="870" y="30" width="10" height="10" fill="#00ff00"/><rect x="880" y="30" width="10" height="10" fill="#00ff00"/><rect x="890" y="30" width="10" height="10" fill="#00ff00"/><rect x="900" y="30" width="10" height="10" fill="#00ff00"/><rect x="910" y="30" width="10" height="10" fill="#00ff00"/><rect x="920" y="30" width="10" height="10" fill="#00ff00"/><rect x="930" y="30" width="10" height="10" fill="#00ff00"/><rect x="940" y="30" width="10" height="10" fill="#00ff00"/><rect x="950" y="30" width="10" height="10" fill="#00ff00"/><rect x="960" y="30" width="10" height="10" fill="#00ff00"/><rect x="970" y="30" width="10" height="10" fill="#00ff00"/><rect x="980" y="30" width="10" height="10" fill="#00ff00"/><rect x="990" y="30" width="10" height="10" fill="#00ff00"/><rect x="1000" y="30" width="10" height="10" fill="#00ff00"/><rect x="1010" y="30" width="10" height="10" fill="#00ff00"/><rect x="1020" y="30" width="10" height="10" fill="#00ff00"/><rect x="1030" y="30" width="10" height="10" fill="#00ff00"/><rect x="1040" y="30" width="10" height="10" fill="#00ff00"/><rect x="1050" y="30" width="10" height="10" fill="#00ff00"/><rect x="1060" y="30" width="10" height="10" fill="#00ff00"/><rect x="1070" y="30" width="10" height="10" fill="#00ff00"/><rect x="1080" y="30" width="10" height="10" fill="#02ff00"/><rect x="1090" y="30" width="10" height="10" fill="#08ff00"/><rect x="1100" y="30" width="10" height="10" fill="#10ff00"/><rect x="1110" y="30" width="10" height="10" fill="#1aff00"/><rect x="1120" y="30" width="10" height="10" fill="#24ff00"/><rect x="1130" y="30" width="10" height="10" fill="#30ff00"/><rect x="1140" y="30" width="10" height="10" fill="#3dff00"/><rect x="1150" y="30" width="10" height="10" fill="#4bff00"/><rect x="1160" y="30" width="10" height="10" fill="#5bff00"/><rect x="1170" y="30" width="10" height="10" fill="#6bff00"/><rect x="1180" y="30" width="10" height="10" fill="#7dff00"/><rect x="1190" y="30" width="10" height="10" fill="#90ff00"/><rect x="1200" y="30" width="10" height="10" fill="#a4ff00"/><rect x="1210" y="30" width="10" height="10" fill="#baff00"/><rect x="1220" y="30" width="10" height="10" fill="#d1ff00"/><rect x="1230" y="30" width="10" height="10" fill="#eaff00"/><rect x="1240" y="30" width="10" height="10" fill="#fffa00"/><rect x="1250" y="30" width="10" height="10" fill="#ffe200"/><rect x="1260" y="30" width="10" height="10" fill="#ffcd00"/><rect x="1270" y="30" width="10" height="10" fill="#ffbb00"/><rect x="1280" y="30" width="10" height="10" fill="#ffab00"/><rect x="1290" y="30" width="10" height="10" fill="#ff9c00"/><rect x="1300" y="30" width="10" height="10" fill="#ff9000"/><rect x="1310" y="30" width="10" height="10" fill="#ff8400"/><rect x="1320" y="30" width="10" height="10" fill="#ff7a00"/><rect x="1330" y="30" width="10" height="10" fill="#ff7000"/><rect x="830" y="40" width="10" height="10" fill="#00ff02"/><rect x="840" y="40" width="10" height="10" fill="#00ff01"/><rect x="850" y="40" width="10" height="10" fill="#00ff00"/><rect x="860" y="40" width="10" height="10" fill="#00ff00"/><rect x="870" y="40" width="10" height="10" fill="#00ff00"/><rect x="880" y="40" width="10" height="10" fill="#00ff00"/><rect x="890" y="40" width="10" height="10" fill="#00ff00"/><rect x="900" y="40" width="10" height="10" fill="#00ff00"/><rect x="910" y="40" width="10" height="10" fill="#00ff00"/><rect x="920" y="40" width="10" height="10" fill="#00ff00"/><rect x="930" y="40" width="10" height="10" fill="#00ff00"/><rect x="940" y="40" width="10" height="10" fill="#00ff00"/><rect x="950" y="40" width="10" height="10" fill="#00ff00"/><rect x="960" y="40" width="10" height="10" fill="#00ff00"/><rect x="970" y="40" width="10" height="10" fill="#00ff00"/><rect x="980" y="40" width="10" height="10" fill="#00ff00"/><rect x="990" y="40" width="10" height="10" fill="#00ff00"/><rect x="1000" y="40" width="10" height="10" fill="#00ff00"/><rect x="1010" y="40" width="10" height="10" fill="#00ff00"/><rect x="1020" y="40" width="10" height="10" fill="#00ff00"/><rect x="1030" y="40" width="10" height="10" fill="#00ff00"/><rect x="1040" y="40" width="10" height="10" fill="#00ff00"/><rect x="1050" y="40" width="10" height="10" fill="#00ff00"/><rect x="1060" y="40" width="10" height="10" fill="#00ff00"/><rect x="1070" y="40" width="10" height="10" fill="#00ff00"/><rect x="1080" y="40" width="10" height="10" fill="#04ff00"/><rect x="1090" y="40" width="10" height="10" fill="#0bff00"/><rect x="1100" y="40" width="10" height="10" fill="#14ff00"/><rect x="1110" y="40" width="10" height="10" fill="#1eff00"/><rect x="1120" y="40" width="10" height="10" fill="#2aff00"/><rect x="1130" y="40" width="10" height="10" fill="#36ff00"/><rect x="1140" y="40" width="10" height="10" fill="#44ff00"/><rect x="1150" y="40" width="10" height="10" fill="#53ff00"/><rect x="1160" y="40" width="10" height="10" fill="#64ff00"/><rect x="1170" y="40" width="10" height="10" fill="#76ff00"/><rect x="1180" y="40" width="10" height="10" fill="#89ff00"/><rect x="1190" y="40" width="10" height="10" fill="#9dff00"/><rect x="1200" y="40" width="10" height="10" fill="#b3ff00"/><rect x="1210" y="40" width="10" height="10" fill="#caff00"/><rect x="1220" y="40" width="10" height="10" fill="#e3ff00"/><rect x="1230" y="40" width="10" height="10" fill="#fdff00"/><rect x="1240" y="40" width="10" height="10" fill="#ffe800"/><rect x="1250" y="40" width="10" height="10" fill="#ffd100"/><rect x="1260" y="40" width="10" height="10" fill="#ffbe00"/><rect x="1270" y="40" width="10" height="10" fill="#ffad00"/><rect x="1280" y="40" width="10" height="10" fill="#ff9e00"/><rect x="1290" y="40" width="10" height="10" fill="#ff9100"/><rect x="1300" y="40" width="10" height="10" fill="#ff8500"/><rect x="1310" y="40" width="10" height="10" fill="#ff7a00"/><rect x="1320" y="40" width="10" height="10" fill="#ff7100"/><rect x="1330" y="40" width="10" height="10" fill="#ff6800"/><rect x="830" y="50" width="10" height="10" fill="#00ff03"/><rect x="840" y="50" width="10" height="10" fill="#00ff02"/><rect x="850" y="50" width="10" height="10" fill="#00ff01"/><rect x="860" y="50" width="10" height="10" fill="#00ff00"/><rect x="870" y="50" width="10" height="10" fill="#00ff00"/><rect x="880" y="50" width="10" height="10" fill="#00ff00"/><rect x="890" y="50" width="10" height="10" fill="#00ff00"/><rect x="900" y="50" width="10" height="10" fill="#00ff00"/><rect x="910" y="50" width="10" height="10" fill="#00ff00"/><rect x="920" y="50" width="10" height="10" fill="#00ff00"/><rect x="930" y="50" width="10" height="10" fill="#00ff00"/><rect x="940" y="50" width="10" height="10" fill="#00ff00"/><rect x="950" y="50" width="10" height="10" fill="#00ff00"/><rect x="960" y="50" width="10" height="10" fill="#00ff00"/><rect x="970" y="50" width="10" height="10" fill="#00ff00"/><rect x="980" y="50" width="10" height="10" fill="#00ff00"/><rect x="990" y="50" width="10" height="10" fill="#00ff00"/><rect x="1000" y="50" width="10" height="10" fill="#00ff00"/><rect x="1010" y="50" width="10" height="10" fill="#00ff00"/><rect x="1020" y="50" width="10" height="10" fill="#00ff00"/><rect x="1030" y="50" width="10" height="10" fill="#00ff00"/><rect x="1040" y="50" width="10" height="10" fill="#00ff00"/><rect x="1050" y="50" width="10" height="10" fill="#00ff00"/><rect x="1060" y="50" width="10" height="10" fill="#00ff00"/><rect x="1070" y="50" width="10" height="10" fill="#01ff00"/><rect x="1080" y="50" width="10" height="10" fill="#07ff00"/><rect x="1090" y="50" width="10" height="10" fill="#0fff00"/><rect x="1100" y="50" width="10" height="10" fill="#18ff00"/><rect x="1110" y="50" width="10" height="10" fill="#23ff00"/><rect x="1120" y="50" width="10" height="10" fill="#2fff00"/><rect x="1130" y="50" width="10" height="10" fill="#3dff00"/><rect x="1140" y="50" width="10" height="10" fill="#4cff00"/><rect x="1150" y="50" width="10" height="10" fill="#5cff00"/><rect x="1160" y="50" width="10" height="10" fill="#6eff00"/><rect x="1170" y="50" width="10" height="10" fill="#81ff00"/><rect x="1180" y="50" width="10" height="10" fill="#95ff00"/><rect x="1190" y="50" width="10" height="10" fill="#abff00"/><rect x="1200" y="50" width="10" height="10" fill="#c2ff00"/><rect x="1210" y="50" width="10" height="10" fill="#dbff00"/><rect x="1220" y="50" width="10" height="10" fill="#f6ff00"/><rect x="1230" y="50" width="10" height="10" fill="#ffed00"/><rect x="1240" y="50" width="10" height="10" fill="#ffd600"/><rect x="1250" y="50" width="10" height="10" fill="#ffc100"/><rect x="1260" y="50" width="10" height="10" fill="#ffb000"/><rect x="1270" y="50" width="10" height="10" fill="#ffa000"/><rect x="1280" y="50" width="10" height="10" fill="#ff9200"/><rect x="1290" y="50" width="10" height="10" fill="#ff8600"/><rect x="1300" y="50" width="10" height="10" fill="#ff7b00"/><rect x="1310" y="50" width="10" height="10" fill="#ff7100"/><rect x="1320" y="50" width="10" height="10" fill="#ff6800"/><rect x="1330" y="50" width="10" height="10" fill="#ff6000"/><rect x="830" y="60" width="10" height="10" fill="#00ff05"/><rect x="840" y="60" width="10" height="10" fill="#00ff04"/><rect x="850" y="60" width="10" height="10" fill="#00ff03"/><rect x="860" y="60" width="10" height="10" fill="#00ff02"/><rect x="870" y="60" width="10" height="10" fill="#00ff01"/><rect x="880" y="60" width="10" height="10" fill="#00ff00"/><rect x="890" y="60" width="10" height="10" fill="#00ff00"/><rect x="900" y="60" width="10" height="10" fill="#00ff00"/><rect x="910" y="60" width="10" height="10" fill="#00ff00"/><rect x="920" y="60" width="10" height="10" fill="#00ff00"/><rect x="930" y="60" width="10" height="10" fill="#00ff00"/><rect x="940" y="60" width="10" height="10" fill="#00ff00"/><rect x="950" y="60" width="10" height="10" fill="#00ff00"/><rect x="960" y="60" width="10" height="10" fill="#00ff00"/><rect x="970" y="60" width="10" height="10" fill="#00ff00"/><rect x="980" y="60" width="10" height="10" fill="#00ff00"/><rect x="990" y="60" width="10" height="10" fill="#00ff00"/><rect x="1000" y="60" width="10" height="10" fill="#00ff00"/><rect x="1010" y="60" width="10" height="10" fill="#00ff00"/><rect x="1020" y="60" width="10" height="10" fill="#00ff00"/><rect x="1030" y="60" width="10" height="10" fill="#00ff00"/><rect x="1040" y="60" width="10" height="10" fill="#00ff00"/><rect x="1050" y="60" width="10" height="10" fill="#00ff00"/><rect x="1060" y="60" width="10" height="10" fill="#00ff00"/><rect x="1070" y="60" width="10" height="10" fill="#03ff00"/><rect x="1080" y="60" width="10" height="10" fill="#09ff00"/><rect x="1090" y="60" width="10" height="10" fill="#12ff00"/><rect x="1100" y="60" width="10" height="10" fill="#1dff00"/><rect x="1110" y="60" width="10" height="10" fill="#29ff00"/><rect x="1120" y="60" width="10" height="10" fill="#36ff00"/><rect x="1130" y="60" width="10" height="10" fill="#45ff00"/><rect x="1140" y="60" width="10" height="10" fill="#55ff00"/><rect x="1150" y="60" width="10" height="10" fill="#66ff00"/><rect x="1160" y="60" width="10" height="10" fill="#79ff00"/><rect x="1170" y="60" width="10" height="10" fill="#8dff00"/><rect x="1180" y="60" width="10" height="10" fill="#a3ff00"/><rect x="1190" y="60" width="10" height="10" fill="#bbff00"/><rect x="1200" y="60" width="10" height="10" fill="#d4ff00"/><rect x="1210" y="60" width="10" height="10" fill="#eeff00"/><rect x="1220" y="60" width="10" height="10" fill="#fff400"/><rect x="1230" y="60" width="10" height="10" fill="#ffdb00"/><rect x="1240" y="60" width="10" height="10" fill="#ffc500"/><rect x="1250" y="60" width="10" height="10" fill="#ffb200"/><rect x="1260" y="60" width="10" height="10" fill="#ffa200"/><rect x="1270" y="60" width="10" height="10" fill="#ff9400"/><rect x="1280" y="60" width="10" height="10" fill="#ff8700"/><rect x="1290" y="60" width="10" height="10" fill="#ff7b00"/><rect x="1300" y="60" width="10" height="10" fill="#ff7100"/><rect x="1310" y="60" width="10" height="10" fill="#ff6800"/><rect x="1320" y="60" width="10" height="10" fill="#ff6000"/><rect x="1330" y="60" width="10" height="10" fill="#ff5800"/><rect x="830" y="70" width="10" height="10" fill="#00ff08"/><rect x="840" y="70" width="10" height="10" fill="#00ff06"/><rect x="850" y="70" width="10" height="10" fill="#00ff05"/><rect x="860" y="70" width="10" height="10" fill="#00ff04"/><rect x="870" y="70" width="10" height="10" fill="#00ff03"/><rect x="880" y="70" width="10" height="10" fill="#00ff01"/><rect x="890" y="70" width="10" height="10" fill="#00ff01"/><rect x="900" y="70" width="10" height="10" fill="#00ff00"/><rect x="910" y="70" width="10" height="10" fill="#00ff00"/><rect x="920" y="70" width="10" height="10" fill="#00ff00"/><rect x="930" y="70" width="10" height="10" fill="#00ff00"/><rect x="940" y="70" width="10" height="10" fill="#00ff00"/><rect x="950" y="70" width="10" height="10" fill="#00ff00"/><rect x="960" y="70" width="10" height="10" fill="#00ff00"/><rect x="970" y="70" width="10" height="10" fill="#00ff00"/><rect x="980" y="70" width="10" height="10" fill="#00ff00"/><rect x="990" y="70" width="10" height="10" fill="#00ff00"/><rect x="1000" y="70" width="10" height="10" fill="#00ff00"/><rect x="1010" y="70" width="10" height="10" fill="#00ff00"/><rect x="1020" y="70" width="10" height="10" fill="#00ff00"/><rect x="1030" y="70" width="10" height="10" fill="#00ff00"/><rect x="1040" y="70" width="10" height="10" fill="#00ff00"/><rect x="1050" y="70" width="10" height="10" fill="#00ff00"/><rect x="1060" y="70" width="10" height="10" fill="#00ff00"/><rect x="1070" y="70" width="10" height="10" fill="#05ff00"/><rect x="1080" y="70" width="10" height="10" fill="#0dff00"/><rect x="1090" y="70" width="10" height="10" fill="#17ff00"/><rect x="1100" y="70" width="10" height="10" fill="#22ff00"/><rect x="1110" y="70" width="10" height="10" fill="#2fff00"/><rect x="1120" y="70" width="10" height="10" fill="#3dff00"/><rect x="1130" y="70" width="10" height="10" fill="#4dff00"/><rect x="1140" y="70" width="10" height="10" fill="#5eff00"/><rect x="1150" y="70" width="10" height="10" fill="#71ff00"/><rect x="1160" y="70" width="10" height="10" fill="#86ff00"/><rect x="1170" y="70" width="10" height="10" fill="#9bff00"/><rect x="1180" y="70" width="10" height="10" fill="#b3ff00"/><rect x="1190" y="70" width="10" height="10" fill="#ccff00"/><rect x="1200" y="70" width="10" height="10" fill="#e7ff00"/><rect x="1210" y="70" width="10" height="10" fill="#fffa00"/><rect x="1220" y="70" width="10" height="10" fill="#ffe000"/><rect x="1230" y="70" width="10" height="10" fill="#ffc900"/><rect x="1240" y="70" width="10" height="10" fill="#ffb500"/><rect x="1250" y="70" width="10" height="10" fill="#ffa400"/><rect x="1260" y="70" width="10" height="10" fill="#ff9500"/><rect x="1270" y="70" width="10" height="10" fill="#ff8800"/><rect x="1280" y="70" width="10" height="10" fill="#ff7c00"/><rect x="1290" y="70" width="10" height="10" fill="#ff7200"/><rect x="1300" y="70" width="10" height="10" fill="#ff6800"/><rect x="1310" y="70" width="10" height="10" fill="#ff6000"/><rect x="1320" y="70" width="10" height="10" fill="#ff5800"/><rect x="1330" y="70" width="10" height="10" fill="#ff5100"/><rect x="830" y="80" width="10" height="10" fill="#00ff0a"/><rect x="840" y="80" width="10" height="10" fill="#00ff09"/><rect x="850" y="80" width="10" height="10" fill="#00ff07"/><rect x="860" y="80" width="10" height="10" fill="#00ff06"/><rect x="870" y="80" width="10" height="10" fill="#00ff05"/><rect x="880" y="80" width="10" height="10" fill="#00ff03"/><rect x="890" y="80" width="10" height="10" fill="#00ff02"/><rect x="900" y="80" width="10" height="10" fill="#00ff01"/><rect x="910" y="80" width="10" height="10" fill="#00ff00"/><rect x="920" y="80" width="10" height="10" fill="#00ff00"/><rect x="930" y="80" width="10" height="10" fill="#00ff00"/><rect x="940" y="80" width="10" height="10" fill="#00ff00"/><rect x="950" y="80" width="10" height="10" fill="#00ff00"/><rect x="960" y="80" width="10" height="10" fill="#00ff00"/><rect x="970" y="80" width="10" height="10" fill="#00ff00"/><rect x="980" y="80" width="10" height="10" fill="#00ff00"/><rect x="990" y="80" width="10" height="10" fill="#00ff00"/><rect x="1000" y="80" width="10" height="10" fill="#00ff00"/><rect x="1010" y="80" width="10" height="10" fill="#00ff00"/><rect x="1020" y="80" width="10" height="10" fill="#00ff00"/><rect x="1030" y="80" width="10" height="10" fill="#00ff00"/><rect x="1040" y="80" width="10" height="10" fill="#00ff00"/><rect x="1050" y="80" width="10" height="10" fill="#00ff00"/><rect x="1060" y="80" width="10" height="10" fill="#01ff00"/><rect x="1070" y="80" width="10" height="10" fill="#08ff00"/><rect x="1080" y="80" width="10" height="10" fill="#11ff00"/><rect x="1090" y="80" width="10" height="10" fill="#1bff00"/><rect x="1100" y="80" width="10" height="10" fill="#28ff00"/><rect x="1110" y="80" width="10" height="10" fill="#36ff00"/><rect x="1120" y="80" width="10" height="10" fill="#45ff00"/><rect x="1130" y="80" width="10" height="10" fill="#56ff00"/><rect x="1140" y="80" width="10" height="10" fill="#69ff00"/><rect x="1150" y="80" width="10" height="10" fill="#7dff00"/><rect x="1160" y="80" width="10" height="10" fill="#93ff00"/><rect x="1170" y="80" width="10" height="10" fill="#abff00"/><rect x="1180" y="80" width="10" height="10" fill="#c4ff00"/><rect x="1190" y="80" width="10" height="10" fill="#dfff00"/><rect x="1200" y="80" width="10" height="10" fill="#fcff00"/><rect x="1210" y="80" width="10" height="10" fill="#ffe500"/><rect x="1220" y="80" width="10" height="10" fill="#ffcd00"/><rect x="1230" y="80" width="10" height="10" fill="#ffb900"/><rect x="1240" y="80" width="10" height="10" fill="#ffa700"/><rect x="1250" y="80" width="10" height="10" fill="#ff9700"/><rect x="1260" y="80" width="10" height="10" fill="#ff8900"/><rect x="1270" y="80" width="10" height="10" fill="#ff7d00"/><rect x="1280" y="80" width="10" height="10" fill="#ff7200"/><rect x="1290" y="80" width="10" height="10" fill="#ff6800"/><rect x="1300" y="80" width="10" height="10" fill="#ff5f00"/><rect x="1310" y="80" width="10" height="10" fill="#ff5800"/><rect x="1320" y="80" width="10" height="10" fill="#ff5100"/><rect x="1330" y="80" width="10" height="10" fill="#ff4a00"/><rect x="830" y="90" width="10" height="10" fill="#00ff0d"/><rect x="840" y="90" width="10" height="10" fill="#00ff0c"/><rect x="850" y="90" width="10" height="10" fill="#00ff0a"/><rect x="860" y="90" width="10" height="10" fill="#00ff09"/><rect x="870" y="90" width="10" height="10" fill="#00ff07"/><rect x="880" y="90" width="10" height="10" fill="#00ff06"/><rect x="890" y="90" width="10" height="10" fill="#00ff04"/><rect x="900" y="90" width="10" height="10" fill="#00ff03"/><rect x="910" y="90" width="10" height="10" fill="#00ff02"/><rect x="920" y="90" width="10" height="10" fill="#00ff01"/><rect x="930" y="90" width="10" height="10" fill="#00ff00"/><rect x="940" y="90" width="10" height="10" fill="#00ff00"/><rect x="950" y="90" width="10" height="10" fill="#00ff00"/><rect x="960" y="90" width="10" height="10" fill="#00ff00"/><rect x="970" y="90" width="10" height="10" fill="#00ff00"/><rect x="980" y="90" width="10" height="10" fill="#00ff00"/><rect x="990" y="90" width="10" height="10" fill="#00ff00"/><rect x="1000" y="90" width="10" height="10" fill="#00ff00"/><rect x="1010" y="90" width="10" height="10" fill="#00ff00"/><rect x="1020" y="90" width="10" height="10" fill="#00ff00"/><rect x="1030" y="90" width="10" height="10" fill="#00ff00"/><rect x="1040" y="90" width="10" height="10" fill="#00ff00"/><rect x="1050" y="90" width="10" height="10" fill="#00ff00"/><rect x="1060" y="90" width="10" height="10" fill="#03ff00"/><rect x="1070" y="90" width="10" height="10" fill="#0bff00"/><rect x="1080" y="90" width="10" height="10" fill="#15ff00"/><rect x="1090" y="90" width="10" height="10" fill="#21ff00"/><rect x="1100" y="90" width="10" height="10" fill="#2eff00"/><rect x="1110" y="90" width="10" height="10" fill="#3eff00"/><rect x="1120" y="90" width="10" height="10" fill="#4eff00"/><rect x="1130" y="90" width="10" height="10" fill="#61ff00"/><rect x="1140" y="90" width="10" height="10" fill="#75ff00"/><rect x="1150" y="90" width="10" height="10" fill="#8bff00"/><rect x="1160" y="90" width="10" height="10" fill="#a2ff00"/><rect x="1170" y="90" width="10" height="10" fill="#bcff00"/><rect x="1180" y="90" width="10" height="10" fill="#d7ff00"/><rect x="1190" y="90" width="10" height="10" fill="#f4ff00"/><rect x="1200" y="90" width="10" height="10" fill="#ffec00"/><rect x="1210" y="90" width="10" height="10" fill="#ffd200"/><rect x="1220" y="90" width="10" height="10" fill="#ffbc00"/><rect x="1230" y="90" width="10" height="10" fill="#ffa900"/><rect x="1240" y="90" width="10" height="10" fill="#ff9900"/><rect x="1250" y="90" width="10" height="10" fill="#ff8a00"/><rect x="1260" y="90" width="10" height="10" fill="#ff7d00"/><rect x="1270" y="90" width="10" height="10" fill="#ff7200"/><rect x="1280" y="90" width="10" height="10" fill="#ff6800"/><rect x="1290" y="90" width="10" height="10" fill="#ff5f00"/><rect x="1300" y="90" width="10" height="10" fill="#ff5700"/><rect x="1310" y="90" width="10" height="10" fill="#ff5000"/><rect x="1320" y="90" width="10" height="10" fill="#ff4900"/><rect x="1330" y="90" width="10" height="10" fill="#ff4300"/><rect x="830" y="100" width="10" height="10" fill="#00ff11"/><rect x="840" y="100" width="10" height="10" fill="#00ff0f"/><rect x="850" y="100" width="10" height="10" fill="#00ff0d"/><rect x="860" y="100" width="10" height="10" fill="#00ff0c"/><rect x="870" y="100" width="10" height="10" fill="#00ff0a"/><rect x="880" y="100" width="10" height="10" fill="#00ff09"/><rect x="890" y="100" width="10" height="10" fill="#00ff07"/><rect x="900" y="100" width="10" height="10" fill="#00ff05"/><rect x="910" y="100" width="10" height="10" fill="#00ff04"/><rect x="920" y="100" width="10" height="10" fill="#00ff03"/><rect x="930" y="100" width="10" height="10" fill="#00ff01"/><rect x="940" y="100" width="10" height="10" fill="#00ff00"/><rect x="950" y="100" width="10" height="10" fill="#00ff00"/><rect x="960" y="100" width="10" height="10" fill="#00ff00"/><rect x="970" y="100" width="10" height="10" fill="#00ff00"/><rect x="980" y="100" width="10" height="10" fill="#00ff00"/><rect x="990" y="100" width="10" height="10" fill="#00ff00"/><rect x="1000" y="100" width="10" height="10" fill="#00ff00"/><rect x="1010" y="100" width="10" height="10" fill="#00ff00"/><rect x="1020" y="100" width="10" height="10" fill="#00ff00"/><rect x="1030" y="100" width="10" height="10" fill="#00ff00"/><rect x="1040" y="100" width="10" height="10" fill="#00ff00"/><rect x="1050" y="100" width="10" height="10" fill="#00ff00"/><rect x="1060" y="100" width="10" height="10" fill="#06ff00"/><rect x="1070" y="100" width="10" height="10" fill="#0fff00"/><rect x="1080" y="100" width="10" height="10" fill="#1aff00"/><rect x="1090" y="100" width="10" height="10" fill="#27ff00"/><rect x="1100" y="100" width="10" height="10" fill="#36ff00"/><rect x="1110" y="100" width="10" height="10" fill="#46ff00"/><rect x="1120" y="100" width="10" height="10" fill="#58ff00"/><rect x="1130" y="100" width="10" height="10" fill="#6cff00"/><rect x="1140" y="100" width="10" height="10" fill="#82ff00"/><rect x="1150" y="100" width="10" height="10" fill="#9aff00"/><rect x="1160" y="100" width="10" height="10" fill="#b3ff00"/><rect x="1170" y="100" width="10" height="10" fill="#cfff00"/><rect x="1180" y="100" width="10" height="10" fill="#ecff00"/><rect x="1190" y="100" width="10" height="10" fill="#fff300"/><rect x="1200" y="100" width="10" height="10" fill="#ffd700"/><rect x="1210" y="100" width="10" height="10" fill="#ffc000"/><rect x="1220" y="100" width="10" height="10" fill="#ffac00"/><rect x="1230" y="100" width="10" height="10" fill="#ff9a00"/><rect x="1240" y="100" width="10" height="10" fill="#ff8b00"/><rect x="1250" y="100" width="10" height="10" fill="#ff7e00"/><rect x="1260" y="100" width="10" height="10" fill="#ff7300"/><rect x="1270" y="100" width="10" height="10" fill="#ff6800"/><rect x="1280" y="100" width="10" height="10" fill="#ff5f00"/><rect x="1290" y="100" width="10" height="10" fill="#ff5700"/><rect x="1300" y="100" width="10" height="10" fill="#ff4f00"/><rect x="1310" y="100" width="10" height="10" fill="#ff4900"/><rect x="1320" y="100" width="10" height="10" fill="#ff4300"/><rect x="1330" y="100" width="10" height="10" fill="#ff3d00"/><rect x="830" y="110" width="10" height="10" fill="#00ff15"/><rect x="840" y="110" width="10" height="10" fill="#00ff13"/><rect x="850" y="110" width="10" height="10" fill="#00ff11"/><rect x="860" y="110" width="10" height="10" fill="#00ff0f"/><rect x="870" y="110" width="10" height="10" fill="#00ff0e"/><rect x="880" y="110" width="10" height="10" fill="#00ff0c"/><rect x="890" y="110" width="10" height="10" fill="#00ff0a"/><rect x="900" y="110" width="10" height="10" fill="#00ff08"/><rect x="910" y="110" width="10" height="10" fill="#00ff07"/><rect x="920" y="110" width="10" height="10" fill="#00ff05"/><rect x="930" y="110" width="10" height="10" fill="#00ff04"/><rect x="940" y="110" width="10" height="10" fill="#00ff02"/><rect x="950" y="110" width="10" height="10" fill="#00ff01"/><rect x="960" y="110" width="10" height="10" fill="#00ff00"/><rect x="970" y="110" width="10" height="10" fill="#00ff00"/><rect x="980" y="110" width="10" height="10" fill="#00ff00"/><rect x="990" y="110" width="10" height="10" fill="#00ff00"/><rect x="1000" y="110" width="10" height="10" fill="#00ff00"/><rect x="1010" y="110" width="10" height="10" fill="#00ff00"/><rect x="1020" y="110" width="10" height="10" fill="#00ff00"/><rect x="1030" y="110" width="10" height="10" fill="#00ff00"/><rect x="1040" y="110" width="10" height="10" fill="#00ff00"/><rect x="1050" y="110" width="10" height="10" fill="#01ff00"/><rect x="1060" y="110" width="10" height="10" fill="#09ff00"/><rect x="1070" y="110" width="10" height="10" fill="#13ff00"/><rect x="1080" y="110" width="10" height="10" fill="#1fff00"/><rect x="1090" y="110" width="10" height="10" fill="#2eff00"/><rect x="1100" y="110" width="10" height="10" fill="#3eff00"/><rect x="1110" y="110" width="10" height="10" fill="#50ff00"/><rect x="1120" y="110" width="10" height="10" fill="#63ff00"/><rect x="1130" y="110" width="10" height="10" fill="#79ff00"/><rect x="1140" y="110" width="10" height="10" fill="#91ff00"/><rect x="1150" y="110" width="10" height="10" fill="#aaff00"/><rect x="1160" y="110" width="10" height="10" fill="#c6ff00"/><rect x="1170" y="110" width="10" height="10" fill="#e4ff00"/><rect x="1180" y="110" width="10" height="10" fill="#fffa00"/><rect x="1190" y="110" width="10" height="10" fill="#ffdd00"/><rect x="1200" y="110" width="10" height="10" fill="#ffc400"/><rect x="1210" y="110" width="10" height="10" fill="#ffaf00"/><rect x="1220" y="110" width="10" height="10" fill="#ff9c00"/><rect x="1230" y="110" width="10" height="10" fill="#ff8d00"/><rect x="1240" y="110" width="10" height="10" fill="#ff7f00"/><rect x="1250" y="110" width="10" height="10" fill="#ff7300"/><rect x="1260" y="110" width="10" height="10" fill="#ff6800"/><rect x="1270" y="110" width="10" height="10" fill="#ff5f00"/><rect x="1280" y="110" width="10" height="10" fill="#ff5600"/><rect x="1290" y="110" width="10" height="10" fill="#ff4f00"/><rect x="1300" y="110" width="10" height="10" fill="#ff4800"/><rect x="1310" y="110" width="10" height="10" fill="#ff4200"/><rect x="1320" y="110" width="10" height="10" fill="#ff3c00"/><rect x="1330" y="110" width="10" height="10" fill="#ff3700"/><rect x="830" y="120" width="10" height="10" fill="#00ff19"/><rect x="840" y="120" width="10" height="10" fill="#00ff17"/><rect x="850" y="120" width="10" height="10" fill="#00ff15"/><rect x="860" y="120" width="10" height="10" fill="#00ff13"/><rect x="870" y="120" width="10" height="10" fill="#00ff11"/><rect x="880" y="120" width="10" height="10" fill="#00ff10"/><rect x="890" y="120" width="10" height="10" fill="#00ff0e"/><rect x="900" y="120" width="10" height="10" fill="#00ff0c"/><rect x="910" y="120" width="10" height="10" fill="#00ff0a"/><rect x="920" y="120" width="10" height="10" fill="#00ff08"/><rect x="930" y="120" width="10" height="10" fill="#00ff06"/><rect x="940" y="120" width="10" height="10" fill="#00ff05"/><rect x="950" y="120" width="10" height="10" fill="#00ff03"/><rect x="960" y="120" width="10" height="10" fill="#00ff02"/><rect x="970" y="120" width="10" height="10" fill="#00ff01"/><rect x="980" y="120" width="10" height="10" fill="#00ff00"/><rect x="990" y="120" width="10" height="10" fill="#00ff00"/><rect x="1000" y="120" width="10" height="10" fill="#00ff00"/><rect x="1010" y="120" width="10" height="10" fill="#00ff00"/><rect x="1020" y="120" width="10" height="10" fill="#00ff00"/><rect x="1030" y="120" width="10" height="10" fill="#00ff00"/><rect x="1040" y="120" width="10" height="10" fill="#00ff00"/><rect x="1050" y="120" width="10" height="10" fill="#04ff00"/><rect x="1060" y="120" width="10" height="10" fill="#0dff00"/><rect x="1070" y="120" width="10" height="10" fill="#18ff00"/><rect x="1080" y="120" width="10" height="10" fill="#26ff00"/><rect x="1090" y="120" width="10" height="10" fill="#35ff00"/><rect x="1100" y="120" width="10" height="10" fill="#47ff00"/><rect x="1110" y="120" width="10" height="10" fill="#5aff00"/><rect x="1120" y="120" width="10" height="10" fill="#70ff00"/><rect x="1130" y="120" width="10" height="10" fill="#87ff00"/><rect x="1140" y="120" width="10" height="10" fill="#a1ff00"/><rect x="1150" y="120" width="10" height="10" fill="#bdff00"/><rect x="1160" y="120" width="10" height="10" fill="#dbff00"/><rect x="1170" y="120" width="10" height="10" fill="#fbff00"/><rect x="1180" y="120" width="10" height="10" fill="#ffe300"/><rect x="1190" y="120" width="10" height="10" fill="#ffc800"/><rect x="1200" y="120" width="10" height="10" fill="#ffb200"/><rect x="1210" y="120" width="10" height="10" fill="#ff9f00"/><rect x="1220" y="120" width="10" height="10" fill="#ff8e00"/><rect x="1230" y="120" width="10" height="10" fill="#ff8000"/><rect x="1240" y="120" width="10" height="10" fill="#ff7300"/><rect x="1250" y="120" width="10" height="10" fill="#ff6800"/><rect x="1260" y="120" width="10" height="10" fill="#ff5f00"/><rect x="1270" y="120" width="10" height="10" fill="#ff5600"/><rect x="1280" y="120" width="10" height="10" fill="#ff4e00"/><rect x="1290" y="120" width="10" height="10" fill="#ff4700"/><rect x="1300" y="120" width="10" height="10" fill="#ff4100"/><rect x="1310" y="120" width="10" height="10" fill="#ff3b00"/><rect x="1320" y="120" width="10" height="10" fill="#ff3600"/><rect x="1330" y="120" width="10" height="10" fill="#ff3100"/><rect x="830" y="130" width="10" height="10" fill="#00ff1e"/><rect x="840" y="130" width="10" height="10" fill="#00ff1c"/><rect x="850" y="130" width="10" height="10" fill="#00ff1a"/><rect x="860" y="130" width="10" height="10" fill="#00ff18"/><rect x="870" y="130" width="10" height="10" fill="#00ff16"/><rect x="880" y="130" width="10" height="10" fill="#00ff14"/><rect x="890" y="130" width="10" height="10" fill="#00ff12"/><rect x="900" y="130" width="10" height="10" fill="#00ff10"/><rect x="910" y="130" width="10" height="10" fill="#00ff0e"/><rect x="920" y="130" width="10" height="10" fill="#00ff0c"/><rect x="930" y="130" width="10" height="10" fill="#00ff0a"/><rect x="940" y="130" width="10" height="10" fill="#00ff08"/><rect x="950" y="130" width="10" height="10" fill="#00ff06"/><rect x="960" y="130" width="10" height="10" fill="#00ff04"/><rect x="970" y="130" width="10" height="10" fill="#00ff03"/><rect x="980" y="130" width="10" height="10" fill="#00ff01"/><rect x="990" y="130" width="10" height="10" fill="#00ff00"/><rect x="1000" y="130" width="10" height="10" fill="#00ff00"/><rect x="1010" y="130" width="10" height="10" fill="#00ff00"/><rect x="1020" y="130" width="10" height="10" fill="#00ff00"/><rect x="1030" y="130" width="10" height="10" fill="#00ff00"/><rect x="1040" y="130" width="10" height="10" fill="#00ff00"/><rect x="1050" y="130" width="10" height="10" fill="#07ff00"/><rect x="1060" y="130" width="10" height="10" fill="#11ff00"/><rect x="1070" y="130" width="10" height="10" fill="#1eff00"/><rect x="1080" y="130" width="10" height="10" fill="#2dff00"/><rect x="1090" y="130" width="10" height="10" fill="#3eff00"/><rect x="1100" y="130" width="10" height="10" fill="#51ff00"/><rect x="1110" y="130" width="10" height="10" fill="#66ff00"/><rect x="1120" y="130" width="10" height="10" fill="#7eff00"/><rect x="1130" y="130" width="10" height="10" fill="#97ff00"/><rect x="1140" y="130" width="10" height="10" fill="#b3ff00"/><rect x="1150" y="130" width="10" height="10" fill="#d2ff00"/><rect x="1160" y="130" width="10" height="10" fill="#f3ff00"/><rect x="1170" y="130" width="10" height="10" fill="#ffea00"/><rect x="1180" y="130" width="10" height="10" fill="#ffcd00"/><rect x="1190" y="130" width="10" height="10" fill="#ffb500"/><rect x="1200" y="130" width="10" height="10" fill="#ffa100"/><rect x="1210" y="130" width="10" height="10" fill="#ff9000"/><rect x="1220" y="130" width="10" height="10" fill="#ff8100"/><rect x="1230" y="130" width="10" height="10" fill="#ff7400"/><rect x="1240" y="130" width="10" height="10" fill="#ff6800"/><rect x="1250" y="130" width="10" height="10" fill="#ff5e00"/><rect x="1260" y="130" width="10" height="10" fill="#ff5500"/><rect x="1270" y="130" width="10" height="10" fill="#ff4d00"/><rect x="1280" y="130" width="10" height="10" fill="#ff4600"/><rect x="1290" y="130" width="10" height="10" fill="#ff4000"/><rect x="1300" y="130" width="10" height="10" fill="#ff3a00"/><rect x="1310" y="130" width="10" height="10" fill="#ff3500"/><rect x="1320" y="130" width="10" height="10" fill="#ff3000"/><rect x="1330" y="130" width="10" height="10" fill="#ff2c00"/><rect x="830" y="140" width="10" height="10" fill="#00ff23"/><rect x="840" y="140" width="10" height="10" fill="#00ff21"/><rect x="850" y="140" width="10" height="10" fill="#00ff1f"/><rect x="860" y="140" width="10" height="10" fill="#00ff1d"/><rect x="870" y="140" width="10" height="10" fill="#00ff1b"/><rect x="880" y="140" width="10" height="10" fill="#00ff18"/><rect x="890" y="140" width="10" height="10" fill="#00ff16"/><rect x="900" y="140" width="10" height="10" fill="#00ff14"/><rect x="910" y="140" width="10" height="10" fill="#00ff12"/><rect x="920" y="140" width="10" height="10" fill="#00ff10"/><rect x="930" y="140" width="10" height="10" fill="#00ff0e"/><rect x="940" y="140" width="10" height="10" fill="#00ff0c"/><rect x="950" y="140" width="10" height="10" fill="#00ff0a"/><rect x="960" y="140" width="10" height="10" fill="#00ff08"/><rect x="970" y="140" width="10" height="10" fill="#00ff06"/><rect x="980" y="140" width="10" height="10" fill="#00ff04"/><rect x="990" y="140" width="10" height="10" fill="#00ff02"/><rect x="1000" y="140" width="10" height="10" fill="#00ff01"/><rect x="1010" y="140" width="10" height="10" fill="#00ff00"/><rect x="1020" y="140" width="10" height="10" fill="#00ff00"/><rect x="1030" y="140" width="10" height="10" fill="#00ff00"/><rect x="1040" y="140" width="10" height="10" fill="#02ff00"/><rect x="1050" y="140" width="10" height="10" fill="#0aff00"/><rect x="1060" y="140" width="10" height="10" fill="#16ff00"/><rect x="1070" y="140" width="10" height="10" fill="#25ff00"/><rect x="1080" y="140" width="10" height="10" fill="#35ff00"/><rect x="1090" y="140" width="10" height="10" fill="#48ff00"/><rect x="1100" y="140" width="10" height="10" fill="#5dff00"/><rect x="1110" y="140" width="10" height="10" fill="#74ff00"/><rect x="1120" y="140" width="10" height="10" fill="#8eff00"/><rect x="1130" y="140" width="10" height="10" fill="#aaff00"/><rect x="1140" y="140" width="10" height="10" fill="#c8ff00"/><rect x="1150" y="140" width="10" height="10" fill="#e9ff00"/><rect x="1160" y="140" width="10" height="10" fill="#fff100"/><rect x="1170" y="140" width="10" height="10" fill="#ffd300"/><rect x="1180" y="140" width="10" height="10" fill="#ffb900"/><rect x="1190" y="140" width="10" height="10" fill="#ffa400"/><rect x="1200" y="140" width="10" height="10" fill="#ff9100"/><rect x="1210" y="140" width="10" height="10" fill="#ff8200"/><rect x="1220" y="140" width="10" height="10" fill="#ff7400"/><rect x="1230" y="140" width="10" height="10" fill="#ff6800"/><rect x="1240" y="140" width="10" height="10" fill="#ff5e00"/><rect x="1250" y="140" width="10" height="10" fill="#ff5500"/><rect x="1260" y="140" width="10" height="10" fill="#ff4d00"/><rect x="1270" y="140" width="10" height="10" fill="#ff4500"/><rect x="1280" y="140" width="10" height="10" fill="#ff3f00"/><rect x="1290" y="140" width="10" height="10" fill="#ff3900"/><rect x="1300" y="140" width="10" height="10" fill="#ff3400"/><rect x="1310" y="140" width="10" height="10" fill="#ff2f00"/><rect x="1320" y="140" width="10" height="10" fill="#ff2b00"/><rect x="1330" y="140" width="10" height="10" fill="#ff2700"/><rect x="830" y="150" width="10" height="10" fill="#00ff29"/><rect x="840" y="150" width="10" height="10" fill="#00ff27"/><rect x="850" y="150" width="10" height="10" fill="#00ff24"/><rect x="860" y="150" width="10" height="10" fill="#00ff22"/><rect x="870" y="150" width="10" height="10" fill="#00ff20"/><rect x="880" y="150" width="10" height="10" fill="#00ff1e"/><rect x="890" y="150" width="10" height="10" fill="#00ff1c"/><rect x="900" y="150" width="10" height="10" fill="#00ff19"/><rect x="910" y="150" width="10" height="10" fill="#00ff17"/><rect x="920" y="150" width="10" height="10" fill="#00ff15"/><rect x="930" y="150" width="10" height="10" fill="#00ff13"/><rect x="940" y="150" width="10" height="10" fill="#00ff10"/><rect x="950" y="150" width="10" height="10" fill="#00ff0e"/><rect x="960" y="150" width="10" height="10" fill="#00ff0c"/><rect x="970" y="150" width="10" height="10" fill="#00ff0a"/><rect x="980" y="150" width="10" height="10" fill="#00ff07"/><rect x="990" y="150" width="10" height="10" fill="#00ff05"/><rect x="1000" y="150" width="10" height="10" fill="#00ff03"/><rect x="1010" y="150" width="10" height="10" fill="#00ff02"/><rect x="1020" y="150" width="10" height="10" fill="#00ff00"/><rect x="1030" y="150" width="10" height="10" fill="#00ff00"/><rect x="1040" y="150" width="10" height="10" fill="#05ff00"/><rect x="1050" y="150" width="10" height="10" fill="#0fff00"/><rect x="1060" y="150" width="10" height="10" fill="#1cff00"/><rect x="1070" y="150" width="10" height="10" fill="#2cff00"/><rect x="1080" y="150" width="10" height="10" fill="#3eff00"/><rect x="1090" y="150" width="10" height="10" fill="#53ff00"/><rect x="1100" y="150" width="10" height="10" fill="#6aff00"/><rect x="1110" y="150" width="10" height="10" fill="#83ff00"/><rect x="1120" y="150" width="10" height="10" fill="#9fff00"/><rect x="1130" y="150" width="10" height="10" fill="#beff00"/><rect x="1140" y="150" width="10" height="10" fill="#e0ff00"/><rect x="1150" y="150" width="10" height="10" fill="#fffa00"/><rect x="1160" y="150" width="10" height="10" fill="#ffd900"/><rect x="1170" y="150" width="10" height="10" fill="#ffbd00"/><rect x="1180" y="150" width="10" height="10" fill="#ffa700"/><rect x="1190" y="150" width="10" height="10" fill="#ff9300"/><rect x="1200" y="150" width="10" height="10" fill="#ff8300"/><rect x="1210" y="150" width="10" height="10" fill="#ff7500"/><rect x="1220" y="150" width="10" height="10" fill="#ff6800"/><rect x="1230" y="150" width="10" height="10" fill="#ff5e00"/><rect x="1240" y="150" width="10" height="10" fill="#ff5400"/><rect x="1250" y="150" width="10" height="10" fill="#ff4c00"/><rect x="1260" y="150" width="10" height="10" fill="#ff4500"/><rect x="1270" y="150" width="10" height="10" fill="#ff3e00"/><rect x="1280" y="150" width="10" height="10" fill="#ff3800"/><rect x="1290" y="150" width="10" height="10" fill="#ff3300"/><rect x="1300" y="150" width="10" height="10" fill="#ff2e00"/><rect x="1310" y="150" width="10" height="10" fill="#ff2a00"/><rect x="1320" y="150" width="10" height="10" fill="#ff2600"/><rect x="1330" y="150" width="10" height="10" fill="#ff2200"/><rect x="830" y="160" width="10" height="10" fill="#00ff2f"/><rect x="840" y="160" width="10" height="10" fill="#00ff2d"/><rect x="850" y="160" width="10" height="10" fill="#00ff2b"/><rect x="860" y="160" width="10" height="10" fill="#00ff28"/><rect x="870" y="160" width="10" height="10" fill="#00ff26"/><rect x="880" y="160" width="10" height="10" fill="#00ff24"/><rect x="890" y="160" width="10" height="10" fill="#00ff21"/><rect x="900" y="160" width="10" height="10" fill="#00ff1f"/><rect x="910" y="160" width="10" height="10" fill="#00ff1d"/><rect x="920" y="160" width="10" height="10" fill="#00ff1a"/><rect x="930" y="160" width="10" height="10" fill="#00ff18"/><rect x="940" y="160" width="10" height="10" fill="#00ff15"/><rect x="950" y="160" width="10" height="10" fill="#00ff13"/><rect x="960" y="160" width="10" height="10" fill="#00ff11"/><rect x="970" y="160" width="10" height="10" fill="#00ff0e"/><rect x="980" y="160" width="10" height="10" fill="#00ff0c"/><rect x="990" y="160" width="10" height="10" fill="#00ff09"/><rect x="1000" y="160" width="10" height="10" fill="#00ff07"/><rect x="1010" y="160" width="10" height="10" fill="#00ff05"/><rect x="1020" y="160" width="10" height="10" fill="#00ff03"/><rect x="1030" y="160" width="10" height="10" fill="#00ff01"/><rect x="1040" y="160" width="10" height="10" fill="#08ff00"/><rect x="1050" y="160" width="10" height="10" fill="#14ff00"/><rect x="1060" y="160" width="10" height="10" fill="#23ff00"/><rect x="1070" y="160" width="10" height="10" fill="#35ff00"/><rect x="1080" y="160" width="10" height="10" fill="#49ff00"/><rect x="1090" y="160" width="10" height="10" fill="#60ff00"/><rect x="1100" y="160" width="10" height="10" fill="#79ff00"/><rect x="1110" y="160" width="10" height="10" fill="#95ff00"/><rect x="1120" y="160" width="10" height="10" fill="#b4ff00"/><rect x="1130" y="160" width="10" height="10" fill="#d6ff00"/><rect x="1140" y="160" width="10" height="10" fill="#fbff00"/><rect x="1150" y="160" width="10" height="10" fill="#ffdf00"/><rect x="1160" y="160" width="10" height="10" fill="#ffc200"/><rect x="1170" y="160" width="10" height="10" fill="#ffaa00"/><rect x="1180" y="160" width="10" height="10" fill="#ff9500"/><rect x="1190" y="160" width="10" height="10" fill="#ff8400"/><rect x="1200" y="160" width="10" height="10" fill="#ff7500"/><rect x="1210" y="160" width="10" height="10" fill="#ff6800"/><rect x="1220" y="160" width="10" height="10" fill="#ff5d00"/><rect x="1230" y="160" width="10" height="10" fill="#ff5400"/><rect x="1240" y="160" width="10" height="10" fill="#ff4b00"/><rect x="1250" y="160" width="10" height="10" fill="#ff4400"/><rect x="1260" y="160" width="10" height="10" fill="#ff3d00"/><rect x="1270" y="160" width="10" height="10" fill="#ff3700"/><rect x="1280" y="160" width="10" height="10" fill="#ff3100"/><rect x="1290" y="160" width="10" height="10" fill="#ff2d00"/><rect x="1300" y="160" width="10" height="10" fill="#ff2800"/><rect x="1310" y="160" width="10" height="10" fill="#ff2400"/><rect x="1320" y="160" width="10" height="10" fill="#ff2100"/><rect x="1330" y="160" width="10" height="10" fill="#ff1e00"/><rect x="830" y="170" width="10" height="10" fill="#00ff36"/><rect x="840" y="170" width="10" height="10" fill="#00ff34"/><rect x="850" y="170" width="10" height="10" fill="#00ff32"/><rect x="860" y="170" width="10" height="10" fill="#00ff2f"/><rect x="870" y="170" width="10" height="10" fill="#00ff2d"/><rect x="880" y="170" width="10" height="10" fill="#00ff2b"/><rect x="890" y="170" width="10" height="10" fill="#00ff28"/><rect x="900" y="170" width="10" height="10" fill="#00ff26"/><rect x="910" y="170" width="10" height="10" fill="#00ff23"/><rect x="920" y="170" width="10" height="10" fill="#00ff21"/><rect x="930" y="170" width="10" height="10" fill="#00ff1e"/><rect x="940" y="170" width="10" height="10" fill="#00ff1b"/><rect x="950" y="170" width="10" height="10" fill="#00ff19"/><rect x="960" y="170" width="10" height="10" fill="#00ff16"/><rect x="970" y="170" width="10" height="10" fill="#00ff14"/><rect x="980" y="170" width="10" height="10" fill="#00ff11"/><rect x="990" y="170" width="10" height="10" fill="#00ff0e"/><rect x="1000" y="170" width="10" height="10" fill="#00ff0c"/><rect x="1010" y="170" width="10" height="10" fill="#00ff09"/><rect x="1020" y="170" width="10" height="10" fill="#00ff07"/><rect x="1030" y="170" width="10" height="10" fill="#02ff04"/><rect x="1040" y="170" width="10" height="10" fill="#0cff02"/><rect x="1050" y="170" width="10" height="10" fill="#1aff00"/><rect x="1060" y="170" width="10" height="10" fill="#2bff00"/><rect x="1070" y="170" width="10" height="10" fill="#3fff00"/><rect x="1080" y="170" width="10" height="10" fill="#55ff00"/><rect x="1090" y="170" width="10" height="10" fill="#6eff00"/><rect x="1100" y="170" width="10" height="10" fill="#8aff00"/><rect x="1110" y="170" width="10" height="10" fill="#a9ff00"/><rect x="1120" y="170" width="10" height="10" fill="#cbff00"/><rect x="1130" y="170" width="10" height="10" fill="#f0ff00"/><rect x="1140" y="170" width="10" height="10" fill="#ffe700"/><rect x="1150" y="170" width="10" height="10" fill="#ffc700"/><rect x="1160" y="170" width="10" height="10" fill="#ffad00"/><rect x="1170" y="170" width="10" height="10" fill="#ff9800"/><rect x="1180" y="170" width="10" height="10" fill="#ff8500"/><rect x="1190" y="170" width="10" height="10" fill="#ff7600"/><rect x="1200" y="170" width="10" height="10" fill="#ff6900"/><rect x="1210" y="170" width="10" height="10" fill="#ff5d00"/><rect x="1220" y="170" width="10" height="10" fill="#ff5300"/><rect x="1230" y="170" width="10" height="10" fill="#ff4a00"/><rect x="1240" y="170" width="10" height="10" fill="#ff4300"/><rect x="1250" y="170" width="10" height="10" fill="#ff3c00"/><rect x="1260" y="170" width="10" height="10" fill="#ff3600"/><rect x="1270" y="170" width="10" height="10" fill="#ff3000"/><rect x="1280" y="170" width="10" height="10" fill="#ff2b00"/><rect x="1290" y="170" width="10" height="10" fill="#ff2700"/><rect x="1300" y="170" width="10" height="10" fill="#ff2300"/><rect x="1310" y="170" width="10" height="10" fill="#ff1f00"/><rect x="1320" y="170" width="10" height="10" fill="#ff1c00"/><rect x="1330" y="170" width="10" height="10" fill="#ff1900"/><rect x="830" y="180" width="10" height="10" fill="#00ff3e"/><rect x="840" y="180" width="10" height="10" fill="#00ff3c"/><rect x="850" y="180" width="10" height="10" fill="#00ff39"/><rect x="860" y="180" width="10" height="10" fill="#00ff37"/><rect x="870" y="180" width="10" height="10" fill="#00ff34"/><rect x="880" y="180" width="10" height="10" fill="#00ff32"/><rect x="890" y="180" width="10" height="10" fill="#00ff2f"/><rect x="900" y="180" width="10" height="10" fill="#00ff2d"/><rect x="910" y="180" width="10" height="10" fill="#00ff2a"/><rect x="920" y="180" width="10" height="10" fill="#00ff28"/><rect x="930" y="180" width="10" height="10" fill="#00ff25"/><rect x="940" y="180" width="10" height="10" fill="#00ff22"/><rect x="950" y="180" width="10" height="10" fill="#00ff20"/><rect x="960" y="180" width="10" height="10" fill="#00ff1d"/><rect x="970" y="180" width="10" height="10" fill="#00ff1a"/><rect x="980" y="180" width="10" height="10" fill="#00ff17"/><rect x="990" y="180" width="10" height="10" fill="#00ff14"/><rect x="1000" y="180" width="10" height="10" fill="#00ff11"/><rect x="1010" y="180" width="10" height="10" fill="#00ff0e"/><rect x="1020" y="180" width="10" height="10" fill="#00ff0c"/><rect x="1030" y="180" width="10" height="10" fill="#06ff09"/><rect x="1040" y="180" width="10" height="10" fill="#12ff06"/><rect x="1050" y="180" width="10" height="10" fill="#22ff04"/><rect x="1060" y="180" width="10" height="10" fill="#34ff02"/><rect x="1070" y="180" width="10" height="10" fill="#4aff00"/><rect x="1080" y="180" width="10" height="10" fill="#63ff00"/><rect x="1090" y="180" width="10" height="10" fill="#7fff00"/><rect x="1100" y="180" width="10" height="10" fill="#9eff00"/><rect x="1110" y="180" width="10" height="10" fill="#c0ff00"/><rect x="1120" y="180" width="10" height="10" fill="#e6ff00"/><rect x="1130" y="180" width="10" height="10" fill="#fff000"/><rect x="1140" y="180" width="10" height="10" fill="#ffcd00"/><rect x="1150" y="180" width="10" height="10" fill="#ffb100"/><rect x="1160" y="180" width="10" height="10" fill="#ff9a00"/><rect x="1170" y="180" width="10" height="10" fill="#ff8700"/><rect x="1180" y="180" width="10" height="10" fill="#ff7600"/><rect x="1190" y="180" width="10" height="10" fill="#ff6900"/><rect x="1200" y="180" width="10" height="10" fill="#ff5d00"/><rect x="1210" y="180" width="10" height="10" fill="#ff5200"/><rect x="1220" y="180" width="10" height="10" fill="#ff4900"/><rect x="1230" y="180" width="10" height="10" fill="#ff4100"/><rect x="1240" y="180" width="10" height="10" fill="#ff3a00"/><rect x="1250" y="180" width="10" height="10" fill="#ff3400"/><rect x="1260" y="180" width="10" height="10" fill="#ff2f00"/><rect x="1270" y="180" width="10" height="10" fill="#ff2a00"/><rect x="1280" y="180" width="10" height="10" fill="#ff2600"/><rect x="1290" y="180" width="10" height="10" fill="#ff2200"/><rect x="1300" y="180" width="10" height="10" fill="#ff1e00"/><rect x="1310" y="180" width="10" height="10" fill="#ff1b00"/><rect x="1320" y="180" width="10" height="10" fill="#ff1800"/><rect x="1330" y="180" width="10" height="10" fill="#ff1500"/><rect x="830" y="190" width="10" height="10" fill="#00ff46"/><rect x="840" y="190" width="10" height="10" fill="#00ff44"/><rect x="850" y="190" width="10" height="10" fill="#00ff42"/><rect x="860" y="190" width="10" height="10" fill="#00ff3f"/><rect x="870" y="190" width="10" height="10" fill="#00ff3d"/><rect x="880" y="190" width="10" height="10" fill="#00ff3a"/><rect x="890" y="190" width="10" height="10" fill="#00ff38"/><rect x="900" y="190" width="10" height="10" fill="#00ff35"/><rect x="910" y="190" width="10" height="10" fill="#00ff33"/><rect x="920" y="190" width="10" height="10" fill="#00ff30"/><rect x="930" y="190" width="10" height="10" fill="#00ff2d"/><rect x="940" y="190" width="10" height="10" fill="#00ff2a"/><rect x="950" y="190" width="10" height="10" fill="#00ff27"/><rect x="960" y="190" width="10" height="10" fill="#00ff24"/><rect x="970" y="190" width="10" height="10" fill="#00ff21"/><rect x="980" y="190" width="10" height="10" fill="#00ff1e"/><rect x="990" y="190" width="10" height="10" fill="#00ff1b"/><rect x="1000" y="190" width="10" height="10" fill="#00ff18"/><rect x="1010" y="190" width="10" height="10" fill="#00ff15"/><rect x="1020" y="190" width="10" height="10" fill="#00ff12"/><rect x="1030" y="190" width="10" height="10" fill="#0aff0f"/><rect x="1040" y="190" width="10" height="10" fill="#18ff0c"/><rect x="1050" y="190" width="10" height="10" fill="#2aff09"/><rect x="1060" y="190" width="10" height="10" fill="#3fff06"/><rect x="1070" y="190" width="10" height="10" fill="#57ff03"/><rect x="1080" y="190" width="10" height="10" fill="#73ff01"/><rect x="1090" y="190" width="10" height="10" fill="#92ff00"/><rect x="1100" y="190" width="10" height="10" fill="#b4ff00"/><rect x="1110" y="190" width="10" height="10" fill="#daff00"/><rect x="1120" y="190" width="10" height="10" fill="#fffa00"/><rect x="1130" y="190" width="10" height="10" fill="#ffd400"/><rect x="1140" y="190" width="10" height="10" fill="#ffb500"/><rect x="1150" y="190" width="10" height="10" fill="#ff9d00"/><rect x="1160" y="190" width="10" height="10" fill="#ff8800"/><rect x="1170" y="190" width="10" height="10" fill="#ff7700"/><rect x="1180" y="190" width="10" height="10" fill="#ff6900"/><rect x="1190" y="190" width="10" height="10" fill="#ff5c00"/><rect x="1200" y="190" width="10" height="10" fill="#ff5200"/><rect x="1210" y="190" width="10" height="10" fill="#ff4800"/><rect x="1220" y="190" width="10" height="10" fill="#ff4000"/><rect x="1230" y="190" width="10" height="10" fill="#ff3900"/><rect x="1240" y="190" width="10" height="10" fill="#ff3300"/><rect x="1250" y="190" width="10" height="10" fill="#ff2d00"/><rect x="1260" y="190" width="10" height="10" fill="#ff2800"/><rect x="1270" y="190" width="10" height="10" fill="#ff2400"/><rect x="1280" y="190" width="10" height="10" fill="#ff2000"/><rect x="1290" y="190" width="10" height="10" fill="#ff1d00"/><rect x="1300" y="190" width="10" height="10" fill="#ff1900"/><rect x="1310" y="190" width="10" height="10" fill="#ff1600"/><rect x="1320" y="190" width="10" height="10" fill="#ff1400"/><rect x="1330" y="190" width="10" height="10" fill="#ff1100"/><rect x="830" y="200" width="10" height="10" fill="#00ff50"/><rect x="840" y="200" width="10" height="10" fill="#00ff4e"/><rect x="850" y="200" width="10" height="10" fill="#00ff4b"/><rect x="860" y="200" width="10" height="10" fill="#00ff49"/><rect x="870" y="200" width="10" height="10" fill="#00ff46"/><rect x="880" y="200" width="10" height="10" fill="#00ff44"/><rect x="890" y="200" width="10" height="10" fill="#00ff41"/><rect x="900" y="200" width="10" height="10" fill="#00ff3e"/><rect x="910" y="200" width="10" height="10" fill="#00ff3c"/><rect x="920" y="200" width="10" height="10" fill="#00ff39"/><rect x="930" y="200" width="10" height="10" fill="#00ff36"/><rect x="940" y="200" width="10" height="10" fill="#00ff33"/><rect x="950" y="200" width="10" height="10" fill="#00ff30"/><rect x="960" y="200" width="10" height="10" fill="#00ff2d"/><rect x="970" y="200" width="10" height="10" fill="#00ff2a"/><rect x="980" y="200" width="10" height="10" fill="#00ff27"/><rect x="990" y="200" width="10" height="10" fill="#00ff24"/><rect x="1000" y="200" width="10" height="10" fill="#00ff20"/><rect x="1010" y="200" width="10" height="10" fill="#00ff1d"/><rect x="1020" y="200" width="10" height="10" fill="#03ff19"/><rect x="1030" y="200" width="10" height="10" fill="#0fff16"/><rect x="1040" y="200" width="10" height="10" fill="#20ff12"/><rect x="1050" y="200" width="10" height="10" fill="#34ff0f"/><rect x="1060" y="200" width="10" height="10" fill="#4cff0c"/><rect x="1070" y="200" width="10" height="10" fill="#67ff08"/><rect x="1080" y="200" width="10" height="10" fill="#85ff05"/><rect x="1090" y="200" width="10" height="10" fill="#a8ff02"/><rect x="1100" y="200" width="10" height="10" fill="#ceff00"/><rect x="1110" y="200" width="10" height="10" fill="#f9ff00"/><rect x="1120" y="200" width="10" height="10" fill="#ffdb00"/><rect x="1130" y="200" width="10" height="10" fill="#ffba00"/><rect x="1140" y="200" width="10" height="10" fill="#ffa000"/><rect x="1150" y="200" width="10" height="10" fill="#ff8a00"/><rect x="1160" y="200" width="10" height="10" fill="#ff7800"/><rect x="1170" y="200" width="10" height="10" fill="#ff6900"/><rect x="1180" y="200" width="10" height="10" fill="#ff5c00"/><rect x="1190" y="200" width="10" height="10" fill="#ff5100"/><rect x="1200" y="200" width="10" height="10" fill="#ff4700"/><rect x="1210" y="200" width="10" height="10" fill="#ff3f00"/><rect x="1220" y="200" width="10" height="10" fill="#ff3800"/><rect x="1230" y="200" width="10" height="10" fill="#ff3200"/><rect x="1240" y="200" width="10" height="10" fill="#ff2c00"/><rect x="1250" y="200" width="10" height="10" fill="#ff2700"/><rect x="1260" y="200" width="10" height="10" fill="#ff2300"/><rect x="1270" y="200" width="10" height="10" fill="#ff1f00"/><rect x="1280" y="200" width="10" height="10" fill="#ff1b00"/><rect x="1290" y="200" width="10" height="10" fill="#ff1800"/><rect x="1300" y="200" width="10" height="10" fill="#ff1500"/><rect x="1310" y="200" width="10" height="10" fill="#ff1200"/><rect x="1320" y="200" width="10" height="10" fill="#ff1000"/><rect x="1330" y="200" width="10" height="10" fill="#ff0e00"/><rect x="830" y="210" width="10" height="10" fill="#00ff5a"/><rect x="840" y="210" width="10" height="10" fill="#00ff58"/><rect x="850" y="210" width="10" height="10" fill="#00ff56"/><rect x="860" y="210" width="10" height="10" fill="#00ff53"/><rect x="870" y="210" width="10" height="10" fill="#00ff51"/><rect x="880" y="210" width="10" height="10" fill="#00ff4e"/><rect x="890" y="210" width="10" height="10" fill="#00ff4c"/><rect x="900" y="210" width="10" height="10" fill="#00ff49"/><rect x="910" y="210" width="10" height="10" fill="#00ff46"/><rect x="920" y="210" width="10" height="10" fill="#00ff43"/><rect x="930" y="210" width="10" height="10" fill="#00ff40"/><rect x="940" y="210" width="10" height="10" fill="#00ff3d"/><rect x="950" y="210" width="10" height="10" fill="#00ff3a"/><rect x="960" y="210" width="10" height="10" fill="#00ff37"/><rect x="970" y="210" width="10" height="10" fill="#00ff34"/><rect x="980" y="210" width="10" height="10" fill="#00ff31"/><rect x="990" y="210" width="10" height="10" fill="#00ff2d"/><rect x="1000" y="210" width="10" height="10" fill="#00ff2a"/><rect x="1010" y="210" width="10" height="10" fill="#00ff26"/><rect x="1020" y="210" width="10" height="10" fill="#07ff22"/><rect x="1030" y="210" width="10" height="10" fill="#16ff1f"/><rect x="1040" y="210" width="10" height="10" fill="#29ff1b"/><rect x="1050" y="210" width="10" height="10" fill="#40ff17"/><rect x="1060" y="210" width="10" height="10" fill="#5aff13"/><rect x="1070" y="210" width="10" height="10" fill="#79ff0f"/><rect x="1080" y="210" width="10" height="10" fill="#9bff0c"/><rect x="1090" y="210" width="10" height="10" fill="#c2ff08"/><rect x="1100" y="210" width="10" height="10" fill="#edff04"/><rect x="1110" y="210" width="10" height="10" fill="#ffe401"/><rect x="1120" y="210" width="10" height="10" fill="#ffc000"/><rect x="1130" y="210" width="10" height="10" fill="#ffa300"/><rect x="1140" y="210" width="10" height="10" fill="#ff8c00"/><rect x="1150" y="210" width="10" height="10" fill="#ff7900"/><rect x="1160" y="210" width="10" height="10" fill="#ff6900"/><rect x="1170" y="210" width="10" height="10" fill="#ff5b00"/><rect x="1180" y="210" width="10" height="10" fill="#ff5000"/><rect x="1190" y="210" width="10" height="10" fill="#ff4600"/><rect x="1200" y="210" width="10" height="10" fill="#ff3e00"/><rect x="1210" y="210" width="10" height="10" fill="#ff3600"/><rect x="1220" y="210" width="10" height="10" fill="#ff3000"/><rect x="1230" y="210" width="10" height="10" fill="#ff2a00"/><rect x="1240" y="210" width="10" height="10" fill="#ff2500"/><rect x="1250" y="210" width="10" height="10" fill="#ff2100"/><rect x="1260" y="210" width="10" height="10" fill="#ff1d00"/><rect x="1270" y="210" width="10" height="10" fill="#ff1900"/><rect x="1280" y="210" width="10" height="10" fill="#ff1600"/><rect x="1290" y="210" width="10" height="10" fill="#ff1400"/><rect x="1300" y="210" width="10" height="10" fill="#ff1100"/><rect x="1310" y="210" width="10" height="10" fill="#ff0f00"/><rect x="1320" y="210" width="10" height="10" fill="#ff0d00"/><rect x="1330" y="210" width="10" height="10" fill="#ff0b00"/><rect x="830" y="220" width="10" height="10" fill="#00ff66"/><rect x="840" y="220" width="10" height="10" fill="#00ff64"/><rect x="850" y="220" width="10" height="10" fill="#00ff61"/><rect x="860" y="220" width="10" height="10" fill="#00ff5f"/><rect x="870" y="220" width="10" height="10" fill="#00ff5d"/><rect x="880" y="220" width="10" height="10" fill="#00ff5a"/><rect x="890" y="220" width="10" height="10" fill="#00ff57"/><rect x="900" y="220" width="10" height="10" fill="#00ff55"/><rect x="910" y="220" width="10" height="10" fill="#00ff52"/><rect x="920" y="220" width="10" height="10" fill="#00ff4f"/><rect x="930" y="220" width="10" height="10" fill="#00ff4c"/><rect x="940" y="220" width="10" height="10" fill="#00ff49"/><rect x="950" y="220" width="10" height="10" fill="#00ff46"/><rect x="960" y="220" width="10" height="10" fill="#00ff43"/><rect x="970" y="220" width="10" height="10" fill="#00ff40"/><rect x="980" y="220" width="10" height="10" fill="#00ff3c"/><rect x="990" y="220" width="10" height="10" fill="#00ff39"/><rect x="1000" y="220" width="10" height="10" fill="#00ff35"/><rect x="1010" y="220" width="10" height="10" fill="#01ff31"/><rect x="1020" y="220" width="10" height="10" fill="#0cff2d"/><rect x="1030" y="220" width="10" height="10" fill="#1eff29"/><rect x="1040" y="220" width="10" height="10" fill="#33ff25"/><rect x="1050" y="220" width="10" height="10" fill="#4dff21"/><rect x="1060" y="220" width="10" height="10" fill="#6bff1d"/><rect x="1070" y="220" width="10" height="10" fill="#8eff19"/><rect x="1080" y="220" width="10" height="10" fill="#b5ff14"/><rect x="1090" y="220" width="10" height="10" fill="#e1ff10"/><rect x="1100" y="220" width="10" height="10" fill="#ffee0b"/><rect x="1110" y="220" width="10" height="10" fill="#ffc606"/><rect x="1120" y="220" width="10" height="10" fill="#ffa702"/><rect x="1130" y="220" width="10" height="10" fill="#ff8e00"/><rect x="1140" y="220" width="10" height="10" fill="#ff7a00"/><rect x="1150" y="220" width="10" height="10" fill="#ff6900"/><rect x="1160" y="220" width="10" height="10" fill="#ff5b00"/><rect x="1170" y="220" width="10" height="10" fill="#ff4f00"/><rect x="1180" y="220" width="10" height="10" fill="#ff4500"/><rect x="1190" y="220" width="10" height="10" fill="#ff3c00"/><rect x="1200" y="220" width="10" height="10" fill="#ff3500"/><rect x="1210" y="220" width="10" height="10" fill="#ff2e00"/><rect x="1220" y="220" width="10" height="10" fill="#ff2900"/><rect x="1230" y="220" width="10" height="10" fill="#ff2400"/><rect x="1240" y="220" width="10" height="10" fill="#ff1f00"/><rect x="1250" y="220" width="10" height="10" fill="#ff1b00"/><rect x="1260" y="220" width="10" height="10" fill="#ff1800"/><rect x="1270" y="220" width="10" height="10" fill="#ff1500"/><rect x="1280" y="220" width="10" height="10" fill="#ff1200"/><rect x="1290" y="220" width="10" height="10" fill="#ff1000"/><rect x="1300" y="220" width="10" height="10" fill="#ff0d00"/><rect x="1310" y="220" width="10" height="10" fill="#ff0b00"/><rect x="1320" y="220" width="10" height="10" fill="#ff0a00"/><rect x="1330" y="220" width="10" height="10" fill="#ff0800"/><rect x="830" y="230" width="10" height="10" fill="#00ff73"/><rect x="840" y="230" width="10" height="10" fill="#00ff71"/><rect x="850" y="230" width="10" height="10" fill="#00ff6f"/><rect x="860" y="230" width="10" height="10" fill="#00ff6c"/><rect x="870" y="230" width="10" height="10" fill="#00ff6a"/><rect x="880" y="230" width="10" height="10" fill="#00ff67"/><rect x="890" y="230" width="10" height="10" fill="#00ff65"/><rect x="900" y="230" width="10" height="10" fill="#00ff62"/><rect x="910" y="230" width="10" height="10" fill="#00ff5f"/><rect x="920" y="230" width="10" height="10" fill="#00ff5d"/><rect x="930" y="230" width="10" height="10" fill="#00ff5a"/><rect x="940" y="230" width="10" height="10" fill="#00ff57"/><rect x="950" y="230" width="10" height="10" fill="#00ff54"/><rect x="960" y="230" width="10" height="10" fill="#00ff50"/><rect x="970" y="230" width="10" height="10" fill="#00ff4d"/><rect x="980" y="230" width="10" height="10" fill="#00ff4a"/><rect x="990" y="230" width="10" height="10" fill="#00ff46"/><rect x="1000" y="230" width="10" height="10" fill="#00ff42"/><rect x="1010" y="230" width="10" height="10" fill="#04ff3e"/><rect x="1020" y="230" width="10" height="10" fill="#13ff3a"/><rect x="1030" y="230" width="10" height="10" fill="#27ff36"/><rect x="1040" y="230" width="10" height="10" fill="#40ff32"/><rect x="1050" y="230" width="10" height="10" fill="#5eff2e"/><rect x="1060" y="230" width="10" height="10" fill="#80ff29"/><rect x="1070" y="230" width="10" height="10" fill="#a7ff24"/><rect x="1080" y="230" width="10" height="10" fill="#d3ff1f"/><rect x="1090" y="230" width="10" height="10" fill="#fff91a"/><rect x="1100" y="230" width="10" height="10" fill="#ffcd11"/><rect x="1110" y="230" width="10" height="10" fill="#ffab0b"/><rect x="1120" y="230" width="10" height="10" fill="#ff9006"/><rect x="1130" y="230" width="10" height="10" fill="#ff7b03"/><rect x="1140" y="230" width="10" height="10" fill="#ff6901"/><rect x="1150" y="230" width="10" height="10" fill="#ff5a00"/><rect x="1160" y="230" width="10" height="10" fill="#ff4e00"/><rect x="1170" y="230" width="10" height="10" fill="#ff4400"/><rect x="1180" y="230" width="10" height="10" fill="#ff3b00"/><rect x="1190" y="230" width="10" height="10" fill="#ff3300"/><rect x="1200" y="230" width="10" height="10" fill="#ff2d00"/><rect x="1210" y="230" width="10" height="10" fill="#ff2700"/><rect x="1220" y="230" width="10" height="10" fill="#ff2200"/><rect x="1230" y="230" width="10" height="10" fill="#ff1e00"/><rect x="1240" y="230" width="10" height="10" fill="#ff1a00"/><rect x="1250" y="230" width="10" height="10" fill="#ff1600"/><rect x="1260" y="230" width="10" height="10" fill="#ff1300"/><rect x="1270" y="230" width="10" height="10" fill="#ff1000"/><rect x="1280" y="230" width="10" height="10" fill="#ff0e00"/><rect x="1290" y="230" width="10" height="10" fill="#ff0c00"/><rect x="1300" y="230" width="10" height="10" fill="#ff0a00"/><rect x="1310" y="230" width="10" height="10" fill="#ff0800"/><rect x="1320" y="230" width="10" height="10" fill="#ff0700"/><rect x="1330" y="230" width="10" height="10" fill="#ff0500"/><rect x="830" y="240" width="10" height="10" fill="#00ff82"/><rect x="840" y="240" width="10" height="10" fill="#00ff7f"/><rect x="850" y="240" width="10" height="10" fill="#00ff7d"/><rect x="860" y="240" width="10" height="10" fill="#00ff7b"/><rect x="870" y="240" width="10" height="10" fill="#00ff79"/><rect x="880" y="240" width="10" height="10" fill="#00ff76"/><rect x="890" y="240" width="10" height="10" fill="#00ff74"/><rect x="900" y="240" width="10" height="10" fill="#00ff71"/><rect x="910" y="240" width="10" height="10" fill="#00ff6f"/><rect x="920" y="240" width="10" height="10" fill="#00ff6c"/><rect x="930" y="240" width="10" height="10" fill="#00ff69"/><rect x="940" y="240" width="10" height="10" fill="#00ff66"/><rect x="950" y="240" width="10" height="10" fill="#00ff63"/><rect x="960" y="240" width="10" height="10" fill="#00ff60"/><rect x="970" y="240" width="10" height="10" fill="#00ff5d"/><rect x="980" y="240" width="10" height="10" fill="#00ff59"/><rect x="990" y="240" width="10" height="10" fill="#00ff56"/><rect x="1000" y="240" width="10" height="10" fill="#00ff52"/><rect x="1010" y="240" width="10" height="10" fill="#09ff4e"/><rect x="1020" y="240" width="10" height="10" fill="#1bff4a"/><rect x="1030" y="240" width="10" height="10" fill="#33ff46"/><rect x="1040" y="240" width="10" height="10" fill="#4fff41"/><rect x="1050" y="240" width="10" height="10" fill="#71ff3d"/><rect x="1060" y="240" width="10" height="10" fill="#98ff38"/><rect x="1070" y="240" width="10" height="10" fill="#c5ff33"/><rect x="1080" y="240" width="10" height="10" fill="#f7ff2e"/><rect x="1090" y="240" width="10" height="10" fill="#ffd522"/><rect x="1100" y="240" width="10" height="10" fill="#ffb018"/><rect x="1110" y="240" width="10" height="10" fill="#ff9311"/><rect x="1120" y="240" width="10" height="10" fill="#ff7c0b"/><rect x="1130" y="240" width="10" height="10" fill="#ff6907"/><rect x="1140" y="240" width="10" height="10" fill="#ff5a04"/><rect x="1150" y="240" width="10" height="10" fill="#ff4d02"/><rect x="1160" y="240" width="10" height="10" fill="#ff4200"/><rect x="1170" y="240" width="10" height="10" fill="#ff3900"/><rect x="1180" y="240" width="10" height="10" fill="#ff3200"/><rect x="1190" y="240" width="10" height="10" fill="#ff2b00"/><rect x="1200" y="240" width="10" height="10" fill="#ff2500"/><rect x="1210" y="240" width="10" height="10" fill="#ff2000"/><rect x="1220" y="240" width="10" height="10" fill="#ff1c00"/><rect x="1230" y="240" width="10" height="10" fill="#ff1800"/><rect x="1240" y="240" width="10" height="10" fill="#ff1400"/><rect x="1250" y="240" width="10" height="10" fill="#ff1100"/><rect x="1260" y="240" width="10" height="10" fill="#ff0f00"/><rect x="1270" y="240" width="10" height="10" fill="#ff0c00"/><rect x="1280" y="240" width="10" height="10" fill="#ff0a00"/><rect x="1290" y="240" width="10" height="10" fill="#ff0900"/><rect x="1300" y="240" width="10" height="10" fill="#ff0700"/><rect x="1310" y="240" width="10" height="10" fill="#ff0500"/><rect x="1320" y="240" width="10" height="10" fill="#ff0400"/><rect x="1330" y="240" width="10" height="10" fill="#ff0300"/><rect x="830" y="250" width="10" height="10" fill="#00ff92"/><rect x="840" y="250" width="10" height="10" fill="#00ff90"/><rect x="850" y="250" width="10" height="10" fill="#00ff8e"/><rect x="860" y="250" width="10" height="10" fill="#00ff8c"/><rect x="870" y="250" width="10" height="10" fill="#00ff8a"/><rect x="880" y="250" width="10" height="10" fill="#00ff88"/><rect x="890" y="250" width="10" height="10" fill="#00ff85"/><rect x="900" y="250" width="10" height="10" fill="#00ff83"/><rect x="910" y="250" width="10" height="10" fill="#00ff80"/><rect x="920" y="250" width="10" height="10" fill="#00ff7e"/><rect x="930" y="250" width="10" height="10" fill="#00ff7b"/><rect x="940" y="250" width="10" height="10" fill="#00ff78"/><rect x="950" y="250" width="10" height="10" fill="#00ff75"/><rect x="960" y="250" width="10" height="10" fill="#00ff72"/><rect x="970" y="250" width="10" height="10" fill="#00ff6f"/><rect x="980" y="250" width="10" height="10" fill="#00ff6c"/><rect x="990" y="250" width="10" height="10" fill="#00ff68"/><rect x="1000" y="250" width="10" height="10" fill="#01ff65"/><rect x="1010" y="250" width="10" height="10" fill="#10ff61"/><rect x="1020" y="250" width="10" height="10" fill="#25ff5d"/><rect x="1030" y="250" width="10" height="10" fill="#41ff59"/><rect x="1040" y="250" width="10" height="10" fill="#62ff54"/><rect x="1050" y="250" width="10" height="10" fill="#89ff50"/><rect x="1060" y="250" width="10" height="10" fill="#b6ff4b"/><rect x="1070" y="250" width="10" height="10" fill="#e9ff45"/><rect x="1080" y="250" width="10" height="10" fill="#ffdf38"/><rect x="1090" y="250" width="10" height="10" fill="#ffb52a"/><rect x="1100" y="250" width="10" height="10" fill="#ff961f"/><rect x="1110" y="250" width="10" height="10" fill="#ff7d17"/><rect x="1120" y="250" width="10" height="10" fill="#ff6910"/><rect x="1130" y="250" width="10" height="10" fill="#ff590b"/><rect x="1140" y="250" width="10" height="10" fill="#ff4c08"/><rect x="1150" y="250" width="10" height="10" fill="#ff4105"/><rect x="1160" y="250" width="10" height="10" fill="#ff3802"/><rect x="1170" y="250" width="10" height="10" fill="#ff3001"/><rect x="1180" y="250" width="10" height="10" fill="#ff2900"/><rect x="1190" y="250" width="10" height="10" fill="#ff2300"/><rect x="1200" y="250" width="10" height="10" fill="#ff1e00"/><rect x="1210" y="250" width="10" height="10" fill="#ff1a00"/><rect x="1220" y="250" width="10" height="10" fill="#ff1600"/><rect x="1230" y="250" width="10" height="10" fill="#ff1300"/><rect x="1240" y="250" width="10" height="10" fill="#ff1000"/><rect x="1250" y="250" width="10" height="10" fill="#ff0d00"/><rect x="1260" y="250" width="10" height="10" fill="#ff0b00"/><rect x="1270" y="250" width="10" height="10" fill="#ff0900"/><rect x="1280" y="250" width="10" height="10" fill="#ff0700"/><rect x="1290" y="250" width="10" height="10" fill="#ff0600"/><rect x="1300" y="250" width="10" height="10" fill="#ff0400"/><rect x="1310" y="250" width="10" height="10" fill="#ff0300"/><rect x="1320" y="250" width="10" height="10" fill="#ff0200"/><rect x="1330" y="250" width="10" height="10" fill="#ff0100"/><rect x="830" y="260" width="10" height="10" fill="#00ffa4"/><rect x="840" y="260" width="10" height="10" fill="#00ffa2"/><rect x="850" y="260" width="10" height="10" fill="#00ffa1"/><rect x="860" y="260" width="10" height="10" fill="#00ff9f"/><rect x="870" y="260" width="10" height="10" fill="#00ff9d"/><rect x="880" y="260" width="10" height="10" fill="#00ff9b"/><rect x="890" y="260" width="10" height="10" fill="#00ff99"/><rect x="900" y="260" width="10" height="10" fill="#00ff97"/><rect x="910" y="260" width="10" height="10" fill="#00ff94"/><rect x="920" y="260" width="10" height="10" fill="#00ff92"/><rect x="930" y="260" width="10" height="10" fill="#00ff90"/><rect x="940" y="260" width="10" height="10" fill="#00ff8d"/><rect x="950" y="260" width="10" height="10" fill="#00ff8b"/><rect x="960" y="260" width="10" height="10" fill="#00ff88"/><rect x="970" y="260" width="10" height="10" fill="#00ff85"/><rect x="980" y="260" width="10" height="10" fill="#00ff82"/><rect x="990" y="260" width="10" height="10" fill="#00ff7e"/><rect x="1000" y="260" width="10" height="10" fill="#05ff7b"/><rect x="1010" y="260" width="10" height="10" fill="#18ff77"/><rect x="1020" y="260" width="10" height="10" fill="#32ff74"/><rect x="1030" y="260" width="10" height="10" fill="#52ff70"/><rect x="1040" y="260" width="10" height="10" fill="#78ff6b"/><rect x="1050" y="260" width="10" height="10" fill="#a5ff67"/><rect x="1060" y="260" width="10" height="10" fill="#d9ff62"/><rect x="1070" y="260" width="10" height="10" fill="#ffea55"/><rect x="1080" y="260" width="10" height="10" fill="#ffbc40"/><rect x="1090" y="260" width="10" height="10" fill="#ff9931"/><rect x="1100" y="260" width="10" height="10" fill="#ff7e25"/><rect x="1110" y="260" width="10" height="10" fill="#ff691c"/><rect x="1120" y="260" width="10" height="10" fill="#ff5815"/><rect x="1130" y="260" width="10" height="10" fill="#ff4b10"/><rect x="1140" y="260" width="10" height="10" fill="#ff3f0c"/><rect x="1150" y="260" width="10" height="10" fill="#ff3608"/><rect x="1160" y="260" width="10" height="10" fill="#ff2e05"/><rect x="1170" y="260" width="10" height="10" fill="#ff2703"/><rect x="1180" y="260" width="10" height="10" fill="#ff2101"/><rect x="1190" y="260" width="10" height="10" fill="#ff1c00"/><rect x="1200" y="260" width="10" height="10" fill="#ff1800"/><rect x="1210" y="260" width="10" height="10" fill="#ff1400"/><rect x="1220" y="260" width="10" height="10" fill="#ff1100"/><rect x="1230" y="260" width="10" height="10" fill="#ff0e00"/><rect x="1240" y="260" width="10" height="10" fill="#ff0b00"/><rect x="1250" y="260" width="10" height="10" fill="#ff0900"/><rect x="1260" y="260" width="10" height="10" fill="#ff0700"/><rect x="1270" y="260" width="10" height="10" fill="#ff0600"/><rect x="1280" y="260" width="10" height="10" fill="#ff0400"/><rect x="1290" y="260" width="10" height="10" fill="#ff0300"/><rect x="1300" y="260" width="10" height="10" fill="#ff0200"/><rect x="1310" y="260" width="10" height="10" fill="#ff0100"/><rect x="1320" y="260" width="10" height="10" fill="#ff0000"/><rect x="1330" y="260" width="10" height="10" fill="#ff0000"/><rect x="830" y="270" width="10" height="10" fill="#00ffb9"/><rect x="840" y="270" width="10" height="10" fill="#00ffb7"/><rect x="850" y="270" width="10" height="10" fill="#00ffb6"/><rect x="860" y="270" width="10" height="10" fill="#00ffb4"/><rect x="870" y="270" width="10" height="10" fill="#00ffb3"/><rect x="880" y="270" width="10" height="10" fill="#00ffb1"/><rect x="890" y="270" width="10" height="10" fill="#00ffaf"/><rect x="900" y="270" width="10" height="10" fill="#00ffae"/><rect x="910" y="270" width="10" height="10" fill="#00ffac"/><rect x="920" y="270" width="10" height="10" fill="#00ffaa"/><rect x="930" y="270" width="10" height="10" fill="#00ffa8"/><rect x="940" y="270" width="10" height="10" fill="#00ffa6"/><rect x="950" y="270" width="10" height="10" fill="#00ffa3"/><rect x="960" y="270" width="10" height="10" fill="#00ffa1"/><rect x="970" y="270" width="10" height="10" fill="#00ff9e"/><rect x="980" y="270" width="10" height="10" fill="#00ff9c"/><rect x="990" y="270" width="10" height="10" fill="#00ff99"/><rect x="1000" y="270" width="10" height="10" fill="#0cff96"/><rect x="1010" y="270" width="10" height="10" fill="#23ff93"/><rect x="1020" y="270" width="10" height="10" fill="#42ff8f"/><rect x="1030" y="270" width="10" height="10" fill="#67ff8c"/><rect x="1040" y="270" width="10" height="10" fill="#94ff88"/><rect x="1050" y="270" width="10" height="10" fill="#c9ff84"/><rect x="1060" y="270" width="10" height="10" fill="#fff87c"/><rect x="1070" y="270" width="10" height="10" fill="#ffc45e"/><rect x="1080" y="270" width="10" height="10" fill="#ff9d49"/><rect x="1090" y="270" width="10" height="10" fill="#ff8038"/><rect x="1100" y="270" width="10" height="10" fill="#ff692c"/><rect x="1110" y="270" width="10" height="10" fill="#ff5822"/><rect x="1120" y="270" width="10" height="10" fill="#ff491b"/><rect x="1130" y="270" width="10" height="10" fill="#ff3e15"/><rect x="1140" y="270" width="10" height="10" fill="#ff3410"/><rect x="1150" y="270" width="10" height="10" fill="#ff2c0c"/><rect x="1160" y="270" width="10" height="10" fill="#ff2508"/><rect x="1170" y="270" width="10" height="10" fill="#ff1f06"/><rect x="1180" y="270" width="10" height="10" fill="#ff1a04"/><rect x="1190" y="270" width="10" height="10" fill="#ff1602"/><rect x="1200" y="270" width="10" height="10" fill="#ff1201"/><rect x="1210" y="270" width="10" height="10" fill="#ff0f00"/><rect x="1220" y="270" width="10" height="10" fill="#ff0c00"/><rect x="1230" y="270" width="10" height="10" fill="#ff0a00"/><rect x="1240" y="270" width="10" height="10" fill="#ff0800"/><rect x="1250" y="270" width="10" height="10" fill="#ff0600"/><rect x="1260" y="270" width="10" height="10" fill="#ff0400"/><rect x="1270" y="270" width="10" height="10" fill="#ff0300"/><rect x="1280" y="270" width="10" height="10" fill="#ff0200"/><rect x="1290" y="270" width="10" height="10" fill="#ff0100"/><rect x="1300" y="270" width="10" height="10" fill="#ff0000"/><rect x="1310" y="270" width="10" height="10" fill="#ff0000"/><rect x="1320" y="270" width="10" height="10" fill="#ff0000"/><rect x="1330" y="270" width="10" height="10" fill="#ff0000"/><rect x="830" y="280" width="10" height="10" fill="#00ffd0"/><rect x="840" y="280" width="10" height="10" fill="#00ffcf"/><rect x="850" y="280" width="10" height="10" fill="#00ffce"/><rect x="860" y="280" width="10" height="10" fill="#00ffcd"/><rect x="870" y="280" width="10" height="10" fill="#00ffcc"/><rect x="880" y="280" width="10" height="10" fill="#00ffcb"/><rect x="890" y="280" width="10" height="10" fill="#00ffc9"/><rect x="900" y="280" width="10" height="10" fill="#00ffc8"/><rect x="910" y="280" width="10" height="10" fill="#00ffc7"/><rect x="920" y="280" width="10" height="10" fill="#00ffc5"/><rect x="930" y="280" width="10" height="10" fill="#00ffc4"/><rect x="940" y="280" width="10" height="10" fill="#00ffc2"/><rect x="950" y="280" width="10" height="10" fill="#00ffc1"/><rect x="960" y="280" width="10" height="10" fill="#00ffbf"/><rect x="970" y="280" width="10" height="10" fill="#00ffbd"/><rect x="980" y="280" width="10" height="10" fill="#00ffbb"/><rect x="990" y="280" width="10" height="10" fill="#02ffb9"/><rect x="1000" y="280" width="10" height="10" fill="#15ffb7"/><rect x="1010" y="280" width="10" height="10" fill="#31ffb4"/><rect x="1020" y="280" width="10" height="10" fill="#55ffb2"/><rect x="1030" y="280" width="10" height="10" fill="#82ffaf"/><rect x="1040" y="280" width="10" height="10" fill="#b7ffac"/><rect x="1050" y="280" width="10" height="10" fill="#f5ffa9"/><rect x="1060" y="280" width="10" height="10" fill="#ffcd85"/><rect x="1070" y="280" width="10" height="10" fill="#ffa267"/><rect x="1080" y="280" width="10" height="10" fill="#ff8250"/><rect x="1090" y="280" width="10" height="10" fill="#ff6a3f"/><rect x="1100" y="280" width="10" height="10" fill="#ff5732"/><rect x="1110" y="280" width="10" height="10" fill="#ff4828"/><rect x="1120" y="280" width="10" height="10" fill="#ff3c20"/><rect x="1130" y="280" width="10" height="10" fill="#ff3219"/><rect x="1140" y="280" width="10" height="10" fill="#ff2914"/><rect x="1150" y="280" width="10" height="10" fill="#ff230f"/><rect x="1160" y="280" width="10" height="10" fill="#ff1d0c"/><rect x="1170" y="280" width="10" height="10" fill="#ff1809"/><rect x="1180" y="280" width="10" height="10" fill="#ff1406"/><rect x="1190" y="280" width="10" height="10" fill="#ff1004"/><rect x="1200" y="280" width="10" height="10" fill="#ff0d03"/><rect x="1210" y="280" width="10" height="10" fill="#ff0a01"/><rect x="1220" y="280" width="10" height="10" fill="#ff0800"/><rect x="1230" y="280" width="10" height="10" fill="#ff0600"/><rect x="1240" y="280" width="10" height="10" fill="#ff0400"/><rect x="1250" y="280" width="10" height="10" fill="#ff0300"/><rect x="1260" y="280" width="10" height="10" fill="#ff0200"/><rect x="1270" y="280" width="10" height="10" fill="#ff0100"/><rect x="1280" y="280" width="10" height="10" fill="#ff0000"/><rect x="1290" y="280" width="10" height="10" fill="#ff0000"/><rect x="1300" y="280" width="10" height="10" fill="#ff0000"/><rect x="1310" y="280" width="10" height="10" fill="#ff0000"/><rect x="1320" y="280" width="10" height="10" fill="#ff0000"/><rect x="1330" y="280" width="10" height="10" fill="#ff0000"/><rect x="830" y="290" width="10" height="10" fill="#00ffea"/><rect x="840" y="290" width="10" height="10" fill="#00ffea"/><rect x="850" y="290" width="10" height="10" fill="#00ffea"/><rect x="860" y="290" width="10" height="10" fill="#00ffe9"/><rect x="870" y="290" width="10" height="10" fill="#00ffe9"/><rect x="880" y="290" width="10" height="10" fill="#00ffe8"/><rect x="890" y="290" width="10" height="10" fill="#00ffe8"/><rect x="900" y="290" width="10" height="10" fill="#00ffe7"/><rect x="910" y="290" width="10" height="10" fill="#00ffe7"/><rect x="920" y="290" width="10" height="10" fill="#00ffe6"/><rect x="930" y="290" width="10" height="10" fill="#00ffe5"/><rect x="940" y="290" width="10" height="10" fill="#00ffe5"/><rect x="950" y="290" width="10" height="10" fill="#00ffe4"/><rect x="960" y="290" width="10" height="10" fill="#00ffe3"/><rect x="970" y="290" width="10" height="10" fill="#00ffe2"/><rect x="980" y="290" width="10" height="10" fill="#00ffe1"/><rect x="990" y="290" width="10" height="10" fill="#07ffe0"/><rect x="1000" y="290" width="10" height="10" fill="#20ffdf"/><rect x="1010" y="290" width="10" height="10" fill="#43ffde"/><rect x="1020" y="290" width="10" height="10" fill="#6effdd"/><rect x="1030" y="290" width="10" height="10" fill="#a3ffdc"/><rect x="1040" y="290" width="10" height="10" fill="#e2ffda"/><rect x="1050" y="290" width="10" height="10" fill="#ffd8b8"/><rect x="1060" y="290" width="10" height="10" fill="#ffa78d"/><rect x="1070" y="290" width="10" height="10" fill="#ff846e"/><rect x="1080" y="290" width="10" height="10" fill="#ff6a58"/><rect x="1090" y="290" width="10" height="10" fill="#ff5646"/><rect x="1100" y="290" width="10" height="10" fill="#ff4639"/><rect x="1110" y="290" width="10" height="10" fill="#ff3a2e"/><rect x="1120" y="290" width="10" height="10" fill="#ff2f25"/><rect x="1130" y="290" width="10" height="10" fill="#ff271e"/><rect x="1140" y="290" width="10" height="10" fill="#ff2018"/><rect x="1150" y="290" width="10" height="10" fill="#ff1a13"/><rect x="1160" y="290" width="10" height="10" fill="#ff160f"/><rect x="1170" y="290" width="10" height="10" fill="#ff110c"/><rect x="1180" y="290" width="10" height="10" fill="#ff0e09"/><rect x="1190" y="290" width="10" height="10" fill="#ff0b07"/><rect x="1200" y="290" width="10" height="10" fill="#ff0805"/><rect x="1210" y="290" width="10" height="10" fill="#ff0603"/><rect x="1220" y="290" width="10" height="10" fill="#ff0502"/><rect x="1230" y="290" width="10" height="10" fill="#ff0301"/><rect x="1240" y="290" width="10" height="10" fill="#ff0200"/><rect x="1250" y="290" width="10" height="10" fill="#ff0100"/><rect x="1260" y="290" width="10" height="10" fill="#ff0000"/><rect x="1270" y="290" width="10" height="10" fill="#ff0000"/><rect x="1280" y="290" width="10" height="10" fill="#ff0000"/><rect x="1290" y="290" width="10" height="10" fill="#ff0000"/><rect x="1300" y="290" width="10" height="10" fill="#ff0000"/><rect x="1310" y="290" width="10" height="10" fill="#ff0000"/><rect x="1320" y="290" width="10" height="10" fill="#ff0000"/><rect x="1330" y="290" width="10" height="10" fill="#ff0000"/><rect x="830" y="300" width="10" height="10" fill="#00f6ff"/><rect x="840" y="300" width="10" height="10" fill="#00f5ff"/><rect x="850" y="300" width="10" height="10" fill="#00f5ff"/><rect x="860" y="300" width="10" height="10" fill="#00f5ff"/><rect x="870" y="300" width="10" height="10" fill="#00f4ff"/><rect x="880" y="300" width="10" height="10" fill="#00f4ff"/><rect x="890" y="300" width="10" height="10" fill="#00f4ff"/><rect x="900" y="300" width="10" height="10" fill="#00f3ff"/><rect x="910" y="300" width="10" height="10" fill="#00f3ff"/><rect x="920" y="300" width="10" height="10" fill="#00f2ff"/><rect x="930" y="300" width="10" height="10" fill="#00f2ff"/><rect x="940" y="300" width="10" height="10" fill="#00f1ff"/><rect x="950" y="300" width="10" height="10" fill="#00f1ff"/><rect x="960" y="300" width="10" height="10" fill="#00f0ff"/><rect x="970" y="300" width="10" height="10" fill="#00f0ff"/><rect x="980" y="300" width="10" height="10" fill="#00efff"/><rect x="990" y="300" width="10" height="10" fill="#0feeff"/><rect x="1000" y="300" width="10" height="10" fill="#2cedff"/><rect x="1010" y="300" width="10" height="10" fill="#53edff"/><rect x="1020" y="300" width="10" height="10" fill="#83ecff"/><rect x="1030" y="300" width="10" height="10" fill="#beebff"/><rect x="1040" y="300" width="10" height="10" fill="#ffe6fb"/><rect x="1050" y="300" width="10" height="10" fill="#ffaebe"/><rect x="1060" y="300" width="10" height="10" fill="#ff8694"/><rect x="1070" y="300" width="10" height="10" fill="#ff6a76"/><rect x="1080" y="300" width="10" height="10" fill="#ff555f"/><rect x="1090" y="300" width="10" height="10" fill="#ff444d"/><rect x="1100" y="300" width="10" height="10" fill="#ff373f"/><rect x="1110" y="300" width="10" height="10" fill="#ff2d33"/><rect x="1120" y="300" width="10" height="10" fill="#ff242a"/><rect x="1130" y="300" width="10" height="10" fill="#ff1e23"/><rect x="1140" y="300" width="10" height="10" fill="#ff181d"/><rect x="1150" y="300" width="10" height="10" fill="#ff1317"/><rect x="1160" y="300" width="10" height="10" fill="#ff0f13"/><rect x="1170" y="300" width="10" height="10" fill="#ff0c0f"/><rect x="1180" y="300" width="10" height="10" fill="#ff090c"/><rect x="1190" y="300" width="10" height="10" fill="#ff0709"/><rect x="1200" y="300" width="10" height="10" fill="#ff0507"/><rect x="1210" y="300" width="10" height="10" fill="#ff0305"/><rect x="1220" y="300" width="10" height="10" fill="#ff0203"/><rect x="1230" y="300" width="10" height="10" fill="#ff0102"/><rect x="1240" y="300" width="10" height="10" fill="#ff0001"/><rect x="1250" y="300" width="10" height="10" fill="#ff0000"/><rect x="1260" y="300" width="10" height="10" fill="#ff0000"/><rect x="1270" y="300" width="10" height="10" fill="#ff0000"/><rect x="1280" y="300" width="10" height="10" fill="#ff0000"/><rect x="1290" y="300" width="10" height="10" fill="#ff0000"/><rect x="1300" y="300" width="10" height="10" fill="#ff0000"/><rect x="1310" y="300" width="10" height="10" fill="#ff0000"/><rect x="1320" y="300" width="10" height="10" fill="#ff0000"/><rect x="1330" y="300" width="10" height="10" fill="#ff0000"/><rect x="830" y="310" width="10" height="10" fill="#00d9ff"/><rect x="840" y="310" width="10" height="10" fill="#00d8ff"/><rect x="850" y="310" width="10" height="10" fill="#00d7ff"/><rect x="860" y="310" width="10" height="10" fill="#00d6ff"/><rect x="870" y="310" width="10" height="10" fill="#00d5ff"/><rect x="880" y="310" width="10" height="10" fill="#00d4ff"/><rect x="890" y="310" width="10" height="10" fill="#00d3ff"/><rect x="900" y="310" width="10" height="10" fill="#00d1ff"/><rect x="910" y="310" width="10" height="10" fill="#00d0ff"/><rect x="920" y="310" width="10" height="10" fill="#00cfff"/><rect x="930" y="310" width="10" height="10" fill="#00cdff"/><rect x="940" y="310" width="10" height="10" fill="#00ccff"/><rect x="950" y="310" width="10" height="10" fill="#00caff"/><rect x="960" y="310" width="10" height="10" fill="#00c8ff"/><rect x="970" y="310" width="10" height="10" fill="#00c7ff"/><rect x="980" y="310" width="10" height="10" fill="#02c5ff"/><rect x="990" y="310" width="10" height="10" fill="#16c3ff"/><rect x="1000" y="310" width="10" height="10" fill="#33c0ff"/><rect x="1010" y="310" width="10" height="10" fill="#59beff"/><rect x="1020" y="310" width="10" height="10" fill="#87bbff"/><rect x="1030" y="310" width="10" height="10" fill="#beb8ff"/><rect x="1040" y="310" width="10" height="10" fill="#ffb5ff"/><rect x="1050" y="310" width="10" height="10" fill="#ff89c5"/><rect x="1060" y="310" width="10" height="10" fill="#ff6a9b"/><rect x="1070" y="310" width="10" height="10" fill="#ff537c"/><rect x="1080" y="310" width="10" height="10" fill="#ff4265"/><rect x="1090" y="310" width="10" height="10" fill="#ff3553"/><rect x="1100" y="310" width="10" height="10" fill="#ff2a45"/><rect x="1110" y="310" width="10" height="10" fill="#ff2239"/><rect x="1120" y="310" width="10" height="10" fill="#ff1b2f"/><rect x="1130" y="310" width="10" height="10" fill="#ff1527"/><rect x="1140" y="310" width="10" height="10" fill="#ff1121"/><rect x="1150" y="310" width="10" height="10" fill="#ff0d1b"/><rect x="1160" y="310" width="10" height="10" fill="#ff0a16"/><rect x="1170" y="310" width="10" height="10" fill="#ff0712"/><rect x="1180" y="310" width="10" height="10" fill="#ff050f"/><rect x="1190" y="310" width="10" height="10" fill="#ff030c"/><rect x="1200" y="310" width="10" height="10" fill="#ff020a"/><rect x="1210" y="310" width="10" height="10" fill="#ff0107"/><rect x="1220" y="310" width="10" height="10" fill="#ff0005"/><rect x="1230" y="310" width="10" height="10" fill="#ff0004"/><rect x="1240" y="310" width="10" height="10" fill="#ff0003"/><rect x="1250" y="310" width="10" height="10" fill="#ff0001"/><rect x="1260" y="310" width="10" height="10" fill="#ff0001"/><rect x="1270" y="310" width="10" height="10" fill="#ff0000"/><rect x="1280" y="310" width="10" height="10" fill="#ff0000"/><rect x="1290" y="310" width="10" height="10" fill="#ff0000"/><rect x="1300" y="310" width="10" height="10" fill="#ff0000"/><rect x="1310" y="310" width="10" height="10" fill="#ff0000"/><rect x="1320" y="310" width="10" height="10" fill="#ff0000"/><rect x="1330" y="310" width="10" height="10" fill="#ff0000"/><rect x="830" y="320" width="10" height="10" fill="#00bfff"/><rect x="840" y="320" width="10" height="10" fill="#00beff"/><rect x="850" y="320" width="10" height="10" fill="#00bcff"/><rect x="860" y="320" width="10" height="10" fill="#00bbff"/><rect x="870" y="320" width="10" height="10" fill="#00b9ff"/><rect x="880" y="320" width="10" height="10" fill="#00b7ff"/><rect x="890" y="320" width="10" height="10" fill="#00b6ff"/><rect x="900" y="320" width="10" height="10" fill="#00b4ff"/><rect x="910" y="320" width="10" height="10" fill="#00b2ff"/><rect x="920" y="320" width="10" height="10" fill="#00b0ff"/><rect x="930" y="320" width="10" height="10" fill="#00adff"/><rect x="940" y="320" width="10" height="10" fill="#00abff"/><rect x="950" y="320" width="10" height="10" fill="#00a9ff"/><rect x="960" y="320" width="10" height="10" fill="#00a6ff"/><rect x="970" y="320" width="10" height="10" fill="#00a3ff"/><rect x="980" y="320" width="10" height="10" fill="#07a1ff"/><rect x="990" y="320" width="10" height="10" fill="#1c9dff"/><rect x="1000" y="320" width="10" height="10" fill="#3a9aff"/><rect x="1010" y="320" width="10" height="10" fill="#5f97ff"/><rect x="1020" y="320" width="10" height="10" fill="#8b93ff"/><rect x="1030" y="320" width="10" height="10" fill="#bf8fff"/><rect x="1040" y="320" width="10" height="10" fill="#fb8bff"/><rect x="1050" y="320" width="10" height="10" fill="#ff6aca"/><rect x="1060" y="320" width="10" height="10" fill="#ff52a1"/><rect x="1070" y="320" width="10" height="10" fill="#ff4083"/><rect x="1080" y="320" width="10" height="10" fill="#ff326b"/><rect x="1090" y="320" width="10" height="10" fill="#ff2759"/><rect x="1100" y="320" width="10" height="10" fill="#ff1f4a"/><rect x="1110" y="320" width="10" height="10" fill="#ff183e"/><rect x="1120" y="320" width="10" height="10" fill="#ff1234"/><rect x="1130" y="320" width="10" height="10" fill="#ff0e2c"/><rect x="1140" y="320" width="10" height="10" fill="#ff0a25"/><rect x="1150" y="320" width="10" height="10" fill="#ff071f"/><rect x="1160" y="320" width="10" height="10" fill="#ff051a"/><rect x="1170" y="320" width="10" height="10" fill="#ff0316"/><rect x="1180" y="320" width="10" height="10" fill="#ff0112"/><rect x="1190" y="320" width="10" height="10" fill="#ff000f"/><rect x="1200" y="320" width="10" height="10" fill="#ff000c"/><rect x="1210" y="320" width="10" height="10" fill="#ff000a"/><rect x="1220" y="320" width="10" height="10" fill="#ff0008"/><rect x="1230" y="320" width="10" height="10" fill="#ff0006"/><rect x="1240" y="320" width="10" height="10" fill="#ff0004"/><rect x="1250" y="320" width="10" height="10" fill="#ff0003"/><rect x="1260" y="320" width="10" height="10" fill="#ff0002"/><rect x="1270" y="320" width="10" height="10" fill="#ff0001"/><rect x="1280" y="320" width="10" height="10" fill="#ff0000"/><rect x="1290" y="320" width="10" height="10" fill="#ff0000"/><rect x="1300" y="320" width="10" height="10" fill="#ff0000"/><rect x="1310" y="320" width="10" height="10" fill="#ff0000"/><rect x="1320" y="320" width="10" height="10" fill="#ff0000"/><rect x="1330" y="320" width="10" height="10" fill="#ff0000"/><rect x="830" y="330" width="10" height="10" fill="#00a8ff"/><rect x="840" y="330" width="10" height="10" fill="#00a6ff"/><rect x="850" y="330" width="10" height="10" fill="#00a4ff"/><rect x="860" y="330" width="10" height="10" fill="#00a2ff"/><rect x="870" y="330" width="10" height="10" fill="#00a0ff"/><rect x="880" y="330" width="10" height="10" fill="#009eff"/><rect x="890" y="330" width="10" height="10" fill="#009cff"/><rect x="900" y="330" width="10" height="10" fill="#0099ff"/><rect x="910" y="330" width="10" height="10" fill="#0097ff"/><rect x="920" y="330" width="10" height="10" fill="#0094ff"/><rect x="930" y="330" width="10" height="10" fill="#0091ff"/><rect x="940" y="330" width="10" height="10" fill="#008fff"/><rect x="950" y="330" width="10" height="10" fill="#008cff"/><rect x="960" y="330" width="10" height="10" fill="#0088ff"/><rect x="970" y="330" width="10" height="10" fill="#0085ff"/><rect x="980" y="330" width="10" height="10" fill="#0c82ff"/><rect x="990" y="330" width="10" height="10" fill="#237eff"/><rect x="1000" y="330" width="10" height="10" fill="#407aff"/><rect x="1010" y="330" width="10" height="10" fill="#6376ff"/><rect x="1020" y="330" width="10" height="10" fill="#8e71ff"/><rect x="1030" y="330" width="10" height="10" fill="#bf6dff"/><rect x="1040" y="330" width="10" height="10" fill="#f868ff"/><rect x="1050" y="330" width="10" height="10" fill="#ff50cf"/><rect x="1060" y="330" width="10" height="10" fill="#ff3da7"/><rect x="1070" y="330" width="10" height="10" fill="#ff2f89"/><rect x="1080" y="330" width="10" height="10" fill="#ff2471"/><rect x="1090" y="330" width="10" height="10" fill="#ff1b5f"/><rect x="1100" y="330" width="10" height="10" fill="#ff1550"/><rect x="1110" y="330" width="10" height="10" fill="#ff0f43"/><rect x="1120" y="330" width="10" height="10" fill="#ff0b39"/><rect x="1130" y="330" width="10" height="10" fill="#ff0830"/><rect x="1140" y="330" width="10" height="10" fill="#ff0529"/><rect x="1150" y="330" width="10" height="10" fill="#ff0323"/><rect x="1160" y="330" width="10" height="10" fill="#ff011e"/><rect x="1170" y="330" width="10" height="10" fill="#ff0019"/><rect x="1180" y="330" width="10" height="10" fill="#ff0015"/><rect x="1190" y="330" width="10" height="10" fill="#ff0012"/><rect x="1200" y="330" width="10" height="10" fill="#ff000f"/><rect x="1210" y="330" width="10" height="10" fill="#ff000c"/><rect x="1220" y="330" width="10" height="10" fill="#ff000a"/><rect x="1230" y="330" width="10" height="10" fill="#ff0008"/><rect x="1240" y="330" width="10" height="10" fill="#ff0006"/><rect x="1250" y="330" width="10" height="10" fill="#ff0005"/><rect x="1260" y="330" width="10" height="10" fill="#ff0003"/><rect x="1270" y="330" width="10" height="10" fill="#ff0002"/><rect x="1280" y="330" width="10" height="10" fill="#ff0001"/><rect x="1290" y="330" width="10" height="10" fill="#ff0001"/><rect x="1300" y="330" width="10" height="10" fill="#ff0000"/><rect x="1310" y="330" width="10" height="10" fill="#ff0000"/><rect x="1320" y="330" width="10" height="10" fill="#ff0000"/><rect x="1330" y="330" width="10" height="10" fill="#ff0000"/><rect x="830" y="340" width="10" height="10" fill="#0093ff"/><rect x="840" y="340" width="10" height="10" fill="#0091ff"/><rect x="850" y="340" width="10" height="10" fill="#008eff"/><rect x="860" y="340" width="10" height="10" fill="#008cff"/><rect x="870" y="340" width="10" height="10" fill="#008aff"/><rect x="880" y="340" width="10" height="10" fill="#0087ff"/><rect x="890" y="340" width="10" height="10" fill="#0084ff"/><rect x="900" y="340" width="10" height="10" fill="#0082ff"/><rect x="910" y="340" width="10" height="10" fill="#007fff"/><rect x="920" y="340" width="10" height="10" fill="#007cff"/><rect x="930" y="340" width="10" height="10" fill="#0079ff"/><rect x="940" y="340" width="10" height="10" fill="#0076ff"/><rect x="950" y="340" width="10" height="10" fill="#0072ff"/><rect x="960" y="340" width="10" height="10" fill="#006fff"/><rect x="970" y="340" width="10" height="10" fill="#026bff"/><rect x="980" y="340" width="10" height="10" fill="#1267ff"/><rect x="990" y="340" width="10" height="10" fill="#2963ff"/><rect x="1000" y="340" width="10" height="10" fill="#455fff"/><rect x="1010" y="340" width="10" height="10" fill="#685aff"/><rect x="1020" y="340" width="10" height="10" fill="#9055ff"/><rect x="1030" y="340" width="10" height="10" fill="#bf50ff"/><rect x="1040" y="340" width="10" height="10" fill="#f54bff"/><rect x="1050" y="340" width="10" height="10" fill="#ff3ad4"/><rect x="1060" y="340" width="10" height="10" fill="#ff2bad"/><rect x="1070" y="340" width="10" height="10" fill="#ff208f"/><rect x="1080" y="340" width="10" height="10" fill="#ff1877"/><rect x="1090" y="340" width="10" height="10" fill="#ff1164"/><rect x="1100" y="340" width="10" height="10" fill="#ff0c55"/><rect x="1110" y="340" width="10" height="10" fill="#ff0848"/><rect x="1120" y="340" width="10" height="10" fill="#ff053e"/><rect x="1130" y="340" width="10" height="10" fill="#ff0335"/><rect x="1140" y="340" width="10" height="10" fill="#ff012d"/><rect x="1150" y="340" width="10" height="10" fill="#ff0027"/><rect x="1160" y="340" width="10" height="10" fill="#ff0021"/><rect x="1170" y="340" width="10" height="10" fill="#ff001d"/><rect x="1180" y="340" width="10" height="10" fill="#ff0018"/><rect x="1190" y="340" width="10" height="10" fill="#ff0015"/><rect x="1200" y="340" width="10" height="10" fill="#ff0011"/><rect x="1210" y="340" width="10" height="10" fill="#ff000f"/><rect x="1220" y="340" width="10" height="10" fill="#ff000c"/><rect x="1230" y="340" width="10" height="10" fill="#ff000a"/><rect x="1240" y="340" width="10" height="10" fill="#ff0008"/><rect x="1250" y="340" width="10" height="10" fill="#ff0006"/><rect x="1260" y="340" width="10" height="10" fill="#ff0005"/><rect x="1270" y="340" width="10" height="10" fill="#ff0004"/><rect x="1280" y="340" width="10" height="10" fill="#ff0003"/><rect x="1290" y="340" width="10" height="10" fill="#ff0002"/><rect x="1300" y="340" width="10" height="10" fill="#ff0001"/><rect x="1310" y="340" width="10" height="10" fill="#ff0000"/><rect x="1320" y="340" width="10" height="10" fill="#ff0000"/><rect x="1330" y="340" width="10" height="10" fill="#ff0000"/><rect x="830" y="350" width="10" height="10" fill="#0080ff"/><rect x="840" y="350" width="10" height="10" fill="#007dff"/><rect x="850" y="350" width="10" height="10" fill="#007bff"/><rect x="860" y="350" width="10" height="10" fill="#0078ff"/><rect x="870" y="350" width="10" height="10" fill="#0075ff"/><rect x="880" y="350" width="10" height="10" fill="#0073ff"/><rect x="890" y="350" width="10" height="10" fill="#0070ff"/><rect x="900" y="350" width="10" height="10" fill="#006dff"/><rect x="910" y="350" width="10" height="10" fill="#006aff"/><rect x="920" y="350" width="10" height="10" fill="#0067ff"/><rect x="930" y="350" width="10" height="10" fill="#0063ff"/><rect x="940" y="350" width="10" height="10" fill="#0060ff"/><rect x="950" y="350" width="10" height="10" fill="#005cff"/><rect x="960" y="350" width="10" height="10" fill="#0058ff"/><rect x="970" y="350" width="10" height="10" fill="#0654ff"/><rect x="980" y="350" width="10" height="10" fill="#1750ff"/><rect x="990" y="350" width="10" height="10" fill="#2e4cff"/><rect x="1000" y="350" width="10" height="10" fill="#4a48ff"/><rect x="1010" y="350" width="10" height="10" fill="#6c43ff"/><rect x="1020" y="350" width="10" height="10" fill="#933eff"/><rect x="1030" y="350" width="10" height="10" fill="#bf39ff"/><rect x="1040" y="350" width="10" height="10" fill="#f234ff"/><rect x="1050" y="350" width="10" height="10" fill="#ff27d9"/><rect x="1060" y="350" width="10" height="10" fill="#ff1cb2"/><rect x="1070" y="350" width="10" height="10" fill="#ff1494"/><rect x="1080" y="350" width="10" height="10" fill="#ff0e7d"/><rect x="1090" y="350" width="10" height="10" fill="#ff096a"/><rect x="1100" y="350" width="10" height="10" fill="#ff065a"/><rect x="1110" y="350" width="10" height="10" fill="#ff034d"/><rect x="1120" y="350" width="10" height="10" fill="#ff0142"/><rect x="1130" y="350" width="10" height="10" fill="#ff0039"/><rect x="1140" y="350" width="10" height="10" fill="#ff0031"/><rect x="1150" y="350" width="10" height="10" fill="#ff002b"/><rect x="1160" y="350" width="10" height="10" fill="#ff0025"/><rect x="1170" y="350" width="10" height="10" fill="#ff0020"/><rect x="1180" y="350" width="10" height="10" fill="#ff001b"/><rect x="1190" y="350" width="10" height="10" fill="#ff0018"/><rect x="1200" y="350" width="10" height="10" fill="#ff0014"/><rect x="1210" y="350" width="10" height="10" fill="#ff0011"/><rect x="1220" y="350" width="10" height="10" fill="#ff000f"/><rect x="1230" y="350" width="10" height="10" fill="#ff000c"/><rect x="1240" y="350" width="10" height="10" fill="#ff000a"/><rect x="1250" y="350" width="10" height="10" fill="#ff0008"/><rect x="1260" y="350" width="10" height="10" fill="#ff0007"/><rect x="1270" y="350" width="10" height="10" fill="#ff0005"/><rect x="1280" y="350" width="10" height="10" fill="#ff0004"/><rect x="1290" y="350" width="10" height="10" fill="#ff0003"/><rect x="1300" y="350" width="10" height="10" fill="#ff0002"/><rect x="1310" y="350" width="10" height="10" fill="#ff0001"/><rect x="1320" y="350" width="10" height="10" fill="#ff0001"/><rect x="1330" y="350" width="10" height="10" fill="#ff0000"/><rect x="830" y="360" width="10" height="10" fill="#006eff"/><rect x="840" y="360" width="10" height="10" fill="#006cff"/><rect x="850" y="360" width="10" height="10" fill="#0069ff"/><rect x="860" y="360" width="10" height="10" fill="#0066ff"/><rect x="870" y="360" width="10" height="10" fill="#0063ff"/><rect x="880" y="360" width="10" height="10" fill="#0061ff"/><rect x="890" y="360" width="10" height="10" fill="#005eff"/><rect x="900" y="360" width="10" height="10" fill="#005aff"/><rect x="910" y="360" width="10" height="10" fill="#0057ff"/><rect x="920" y="360" width="10" height="10" fill="#0054ff"/><rect x="930" y="360" width="10" height="10" fill="#0050ff"/><rect x="940" y="360" width="10" height="10" fill="#004dff"/><rect x="950" y="360" width="10" height="10" fill="#0049ff"/><rect x="960" y="360" width="10" height="10" fill="#0045ff"/><rect x="970" y="360" width="10" height="10" fill="#0a41ff"/><rect x="980" y="360" width="10" height="10" fill="#1c3dff"/><rect x="990" y="360" width="10" height="10" fill="#3339ff"/><rect x="1000" y="360" width="10" height="10" fill="#4f34ff"/><rect x="1010" y="360" width="10" height="10" fill="#702fff"/><rect x="1020" y="360" width="10" height="10" fill="#952bff"/><rect x="1030" y="360" width="10" height="10" fill="#c026ff"/><rect x="1040" y="360" width="10" height="10" fill="#f021ff"/><rect x="1050" y="360" width="10" height="10" fill="#ff18dd"/><rect x="1060" y="360" width="10" height="10" fill="#ff10b7"/><rect x="1070" y="360" width="10" height="10" fill="#ff0a99"/><rect x="1080" y="360" width="10" height="10" fill="#ff0682"/><rect x="1090" y="360" width="10" height="10" fill="#ff036f"/><rect x="1100" y="360" width="10" height="10" fill="#ff015f"/><rect x="1110" y="360" width="10" height="10" fill="#ff0052"/><rect x="1120" y="360" width="10" height="10" fill="#ff0047"/><rect x="1130" y="360" width="10" height="10" fill="#ff003d"/><rect x="1140" y="360" width="10" height="10" fill="#ff0035"/><rect x="1150" y="360" width="10" height="10" fill="#ff002e"/><rect x="1160" y="360" width="10" height="10" fill="#ff0028"/><rect x="1170" y="360" width="10" height="10" fill="#ff0023"/><rect x="1180" y="360" width="10" height="10" fill="#ff001f"/><rect x="1190" y="360" width="10" height="10" fill="#ff001b"/><rect x="1200" y="360" width="10" height="10" fill="#ff0017"/><rect x="1210" y="360" width="10" height="10" fill="#ff0014"/><rect x="1220" y="360" width="10" height="10" fill="#ff0011"/><rect x="1230" y="360" width="10" height="10" fill="#ff000f"/><rect x="1240" y="360" width="10" height="10" fill="#ff000c"/><rect x="1250" y="360" width="10" height="10" fill="#ff000a"/><rect x="1260" y="360" width="10" height="10" fill="#ff0009"/><rect x="1270" y="360" width="10" height="10" fill="#ff0007"/><rect x="1280" y="360" width="10" height="10" fill="#ff0006"/><rect x="1290" y="360" width="10" height="10" fill="#ff0004"/><rect x="1300" y="360" width="10" height="10" fill="#ff0003"/><rect x="1310" y="360" width="10" height="10" fill="#ff0002"/><rect x="1320" y="360" width="10" height="10" fill="#ff0002"/><rect x="1330" y="360" width="10" height="10" fill="#ff0001"/><rect x="830" y="370" width="10" height="10" fill="#005fff"/><rect x="840" y="370" width="10" height="10" fill="#005cff"/><rect x="850" y="370" width="10" height="10" fill="#0059ff"/><rect x="860" y="370" width="10" height="10" fill="#0056ff"/><rect x="870" y="370" width="10" height="10" fill="#0053ff"/><rect x="880" y="370" width="10" height="10" fill="#0050ff"/><rect x="890" y="370" width="10" height="10" fill="#004dff"/><rect x="900" y="370" width="10" height="10" fill="#004aff"/><rect x="910" y="370" width="10" height="10" fill="#0047ff"/><rect x="920" y="370" width="10" height="10" fill="#0043ff"/><rect x="930" y="370" width="10" height="10" fill="#0040ff"/><rect x="940" y="370" width="10" height="10" fill="#003cff"/><rect x="950" y="370" width="10" height="10" fill="#0038ff"/><rect x="960" y="370" width="10" height="10" fill="#0234ff"/><rect x="970" y="370" width="10" height="10" fill="#0f30ff"/><rect x="980" y="370" width="10" height="10" fill="#212cff"/><rect x="990" y="370" width="10" height="10" fill="#3828ff"/><rect x="1000" y="370" width="10" height="10" fill="#5424ff"/><rect x="1010" y="370" width="10" height="10" fill="#731fff"/><rect x="1020" y="370" width="10" height="10" fill="#971bff"/><rect x="1030" y="370" width="10" height="10" fill="#c016ff"/><rect x="1040" y="370" width="10" height="10" fill="#ee12ff"/><rect x="1050" y="370" width="10" height="10" fill="#ff0be1"/><rect x="1060" y="370" width="10" height="10" fill="#ff06bc"/><rect x="1070" y="370" width="10" height="10" fill="#ff039e"/><rect x="1080" y="370" width="10" height="10" fill="#ff0187"/><rect x="1090" y="370" width="10" height="10" fill="#ff0073"/><rect x="1100" y="370" width="10" height="10" fill="#ff0064"/><rect x="1110" y="370" width="10" height="10" fill="#ff0056"/><rect x="1120" y="370" width="10" height="10" fill="#ff004b"/><rect x="1130" y="370" width="10" height="10" fill="#ff0042"/><rect x="1140" y="370" width="10" height="10" fill="#ff0039"/><rect x="1150" y="370" width="10" height="10" fill="#ff0032"/><rect x="1160" y="370" width="10" height="10" fill="#ff002c"/><rect x="1170" y="370" width="10" height="10" fill="#ff0026"/><rect x="1180" y="370" width="10" height="10" fill="#ff0022"/><rect x="1190" y="370" width="10" height="10" fill="#ff001d"/><rect x="1200" y="370" width="10" height="10" fill="#ff001a"/><rect x="1210" y="370" width="10" height="10" fill="#ff0016"/><rect x="1220" y="370" width="10" height="10" fill="#ff0013"/><rect x="1230" y="370" width="10" height="10" fill="#ff0011"/><rect x="1240" y="370" width="10" height="10" fill="#ff000e"/><rect x="1250" y="370" width="10" height="10" fill="#ff000c"/><rect x="1260" y="370" width="10" height="10" fill="#ff000a"/><rect x="1270" y="370" width="10" height="10" fill="#ff0009"/><rect x="1280" y="370" width="10" height="10" fill="#ff0007"/><rect x="1290" y="370" width="10" height="10" fill="#ff0006"/><rect x="1300" y="370" width="10" height="10" fill="#ff0005"/><rect x="1310" y="370" width="10" height="10" fill="#ff0004"/><rect x="1320" y="370" width="10" height="10" fill="#ff0003"/><rect x="1330" y="370" width="10" height="10" fill="#ff0002"/><rect x="830" y="380" width="10" height="10" fill="#0050ff"/><rect x="840" y="380" width="10" height="10" fill="#004eff"/><rect x="850" y="380" width="10" height="10" fill="#004bff"/><rect x="860" y="380" width="10" height="10" fill="#0048ff"/><rect x="870" y="380" width="10" height="10" fill="#0045ff"/><rect x="880" y="380" width="10" height="10" fill="#0042ff"/><rect x="890" y="380" width="10" height="10" fill="#003fff"/><rect x="900" y="380" width="10" height="10" fill="#003bff"/><rect x="910" y="380" width="10" height="10" fill="#0038ff"/><rect x="920" y="380" width="10" height="10" fill="#0035ff"/><rect x="930" y="380" width="10" height="10" fill="#0031ff"/><rect x="940" y="380" width="10" height="10" fill="#002eff"/><rect x="950" y="380" width="10" height="10" fill="#002aff"/><rect x="960" y="380" width="10" height="10" fill="#0526ff"/><rect x="970" y="380" width="10" height="10" fill="#1322ff"/><rect x="980" y="380" width="10" height="10" fill="#261eff"/><rect x="990" y="380" width="10" height="10" fill="#3d1aff"/><rect x="1000" y="380" width="10" height="10" fill="#5816ff"/><rect x="1010" y="380" width="10" height="10" fill="#7612ff"/><rect x="1020" y="380" width="10" height="10" fill="#990eff"/><rect x="1030" y="380" width="10" height="10" fill="#c00aff"/><rect x="1040" y="380" width="10" height="10" fill="#ec06ff"/><rect x="1050" y="380" width="10" height="10" fill="#ff03e4"/><rect x="1060" y="380" width="10" height="10" fill="#ff00c0"/><rect x="1070" y="380" width="10" height="10" fill="#ff00a3"/><rect x="1080" y="380" width="10" height="10" fill="#ff008b"/><rect x="1090" y="380" width="10" height="10" fill="#ff0078"/><rect x="1100" y="380" width="10" height="10" fill="#ff0068"/><rect x="1110" y="380" width="10" height="10" fill="#ff005b"/><rect x="1120" y="380" width="10" height="10" fill="#ff004f"/><rect x="1130" y="380" width="10" height="10" fill="#ff0046"/><rect x="1140" y="380" width="10" height="10" fill="#ff003d"/><rect x="1150" y="380" width="10" height="10" fill="#ff0036"/><rect x="1160" y="380" width="10" height="10" fill="#ff002f"/><rect x="1170" y="380" width="10" height="10" fill="#ff002a"/><rect x="1180" y="380" width="10" height="10" fill="#ff0025"/><rect x="1190" y="380" width="10" height="10" fill="#ff0020"/><rect x="1200" y="380" width="10" height="10" fill="#ff001d"/><rect x="1210" y="380" width="10" height="10" fill="#ff0019"/><rect x="1220" y="380" width="10" height="10" fill="#ff0016"/><rect x="1230" y="380" width="10" height="10" fill="#ff0013"/><rect x="1240" y="380" width="10" height="10" fill="#ff0011"/><rect x="1250" y="380" width="10" height="10" fill="#ff000e"/><rect x="1260" y="380" width="10" height="10" fill="#ff000c"/><rect x="1270" y="380" width="10" height="10" fill="#ff000b"/><rect x="1280" y="380" width="10" height="10" fill="#ff0009"/><rect x="1290" y="380" width="10" height="10" fill="#ff0007"/><rect x="1300" y="380" width="10" height="10" fill="#ff0006"/><rect x="1310" y="380" width="10" height="10" fill="#ff0005"/><rect x="1320" y="380" width="10" height="10" fill="#ff0004"/><rect x="1330" y="380" width="10" height="10" fill="#ff0003"/><rect x="830" y="390" width="10" height="10" fill="#0043ff"/><rect x="840" y="390" width="10" height="10" fill="#0041ff"/><rect x="850" y="390" width="10" height="10" fill="#003eff"/><rect x="860" y="390" width="10" height="10" fill="#003bff"/><rect x="870" y="390" width="10" height="10" fill="#0038ff"/><rect x="880" y="390" width="10" height="10" fill="#0035ff"/><rect x="890" y="390" width="10" height="10" fill="#0032ff"/><rect x="900" y="390" width="10" height="10" fill="#002fff"/><rect x="910" y="390" width="10" height="10" fill="#002bff"/><rect x="920" y="390" width="10" height="10" fill="#0028ff"/><rect x="930" y="390" width="10" height="10" fill="#0025ff"/><rect x="940" y="390" width="10" height="10" fill="#0021ff"/><rect x="950" y="390" width="10" height="10" fill="#001eff"/><rect x="960" y="390" width="10" height="10" fill="#091aff"/><rect x="970" y="390" width="10" height="10" fill="#1816ff"/><rect x="980" y="390" width="10" height="10" fill="#2b13ff"/><rect x="990" y="390" width="10" height="10" fill="#410fff"/><rect x="1000" y="390" width="10" height="10" fill="#5b0cff"/><rect x="1010" y="390" width="10" height="10" fill="#7908ff"/><rect x="1020" y="390" width="10" height="10" fill="#9b05ff"/><rect x="1030" y="390" width="10" height="10" fill="#c002ff"/><rect x="1040" y="390" width="10" height="10" fill="#ea00ff"/><rect x="1050" y="390" width="10" height="10" fill="#ff00e8"/><rect x="1060" y="390" width="10" height="10" fill="#ff00c4"/><rect x="1070" y="390" width="10" height="10" fill="#ff00a7"/><rect x="1080" y="390" width="10" height="10" fill="#ff0090"/><rect x="1090" y="390" width="10" height="10" fill="#ff007d"/><rect x="1100" y="390" width="10" height="10" fill="#ff006d"/><rect x="1110" y="390" width="10" height="10" fill="#ff005f"/><rect x="1120" y="390" width="10" height="10" fill="#ff0053"/><rect x="1130" y="390" width="10" height="10" fill="#ff0049"/><rect x="1140" y="390" width="10" height="10" fill="#ff0041"/><rect x="1150" y="390" width="10" height="10" fill="#ff0039"/><rect x="1160" y="390" width="10" height="10" fill="#ff0033"/><rect x="1170" y="390" width="10" height="10" fill="#ff002d"/><rect x="1180" y="390" width="10" height="10" fill="#ff0028"/><rect x="1190" y="390" width="10" height="10" fill="#ff0023"/><rect x="1200" y="390" width="10" height="10" fill="#ff001f"/><rect x="1210" y="390" width="10" height="10" fill="#ff001c"/><rect x="1220" y="390" width="10" height="10" fill="#ff0018"/><rect x="1230" y="390" width="10" height="10" fill="#ff0015"/><rect x="1240" y="390" width="10" height="10" fill="#ff0013"/><rect x="1250" y="390" width="10" height="10" fill="#ff0010"/><rect x="1260" y="390" width="10" height="10" fill="#ff000e"/><rect x="1270" y="390" width="10" height="10" fill="#ff000c"/><rect x="1280" y="390" width="10" height="10" fill="#ff000b"/><rect x="1290" y="390" width="10" height="10" fill="#ff0009"/><rect x="1300" y="390" width="10" height="10" fill="#ff0008"/><rect x="1310" y="390" width="10" height="10" fill="#ff0006"/><rect x="1320" y="390" width="10" height="10" fill="#ff0005"/><rect x="1330" y="390" width="10" height="10" fill="#ff0004"/><rect x="830" y="400" width="10" height="10" fill="#0038ff"/><rect x="840" y="400" width="10" height="10" fill="#0035ff"/><rect x="850" y="400" width="10" height="10" fill="#0032ff"/><rect x="860" y="400" width="10" height="10" fill="#002fff"/><rect x="870" y="400" width="10" height="10" fill="#002cff"/><rect x="880" y="400" width="10" height="10" fill="#0029ff"/><rect x="890" y="400" width="10" height="10" fill="#0026ff"/><rect x="900" y="400" width="10" height="10" fill="#0023ff"/><rect x="910" y="400" width="10" height="10" fill="#0020ff"/><rect x="920" y="400" width="10" height="10" fill="#001dff"/><rect x="930" y="400" width="10" height="10" fill="#001aff"/><rect x="940" y="400" width="10" height="10" fill="#0016ff"/><rect x="950" y="400" width="10" height="10" fill="#0213ff"/><rect x="960" y="400" width="10" height="10" fill="#0d10ff"/><rect x="970" y="400" width="10" height="10" fill="#1c0dff"/><rect x="980" y="400" width="10" height="10" fill="#2f09ff"/><rect x="990" y="400" width="10" height="10" fill="#4506ff"/><rect x="1000" y="400" width="10" height="10" fill="#5f04ff"/><rect x="1010" y="400" width="10" height="10" fill="#7c01ff"/><rect x="1020" y="400" width="10" height="10" fill="#9c00ff"/><rect x="1030" y="400" width="10" height="10" fill="#c000ff"/><rect x="1040" y="400" width="10" height="10" fill="#e800ff"/><rect x="1050" y="400" width="10" height="10" fill="#ff00eb"/><rect x="1060" y="400" width="10" height="10" fill="#ff00c8"/><rect x="1070" y="400" width="10" height="10" fill="#ff00ab"/><rect x="1080" y="400" width="10" height="10" fill="#ff0094"/><rect x="1090" y="400" width="10" height="10" fill="#ff0081"/><rect x="1100" y="400" width="10" height="10" fill="#ff0071"/><rect x="1110" y="400" width="10" height="10" fill="#ff0063"/><rect x="1120" y="400" width="10" height="10" fill="#ff0057"/><rect x="1130" y="400" width="10" height="10" fill="#ff004d"/><rect x="1140" y="400" width="10" height="10" fill="#ff0045"/><rect x="1150" y="400" width="10" height="10" fill="#ff003d"/><rect x="1160" y="400" width="10" height="10" fill="#ff0036"/><rect x="1170" y="400" width="10" height="10" fill="#ff0030"/><rect x="1180" y="400" width="10" height="10" fill="#ff002b"/><rect x="1190" y="400" width="10" height="10" fill="#ff0026"/><rect x="1200" y="400" width="10" height="10" fill="#ff0022"/><rect x="1210" y="400" width="10" height="10" fill="#ff001e"/><rect x="1220" y="400" width="10" height="10" fill="#ff001b"/><rect x="1230" y="400" width="10" height="10" fill="#ff0018"/><rect x="1240" y="400" width="10" height="10" fill="#ff0015"/><rect x="1250" y="400" width="10" height="10" fill="#ff0013"/><rect x="1260" y="400" width="10" height="10" fill="#ff0010"/><rect x="1270" y="400" width="10" height="10" fill="#ff000e"/><rect x="1280" y="400" width="10" height="10" fill="#ff000c"/><rect x="1290" y="400" width="10" height="10" fill="#ff000b"/><rect x="1300" y="400" width="10" height="10" fill="#ff0009"/><rect x="1310" y="400" width="10" height="10" fill="#ff0008"/><rect x="1320" y="400" width="10" height="10" fill="#ff0007"/><rect x="1330" y="400" width="10" height="10" fill="#ff0005"/><rect x="830" y="410" width="10" height="10" fill="#002dff"/><rect x="840" y="410" width="10" height="10" fill="#002bff"/><rect x="850" y="410" width="10" height="10" fill="#0028ff"/><rect x="860" y="410" width="10" height="10" fill="#0025ff"/><rect x="870" y="410" width="10" height="10" fill="#0022ff"/><rect x="880" y="410" width="10" height="10" fill="#001fff"/><rect x="890" y="410" width="10" height="10" fill="#001cff"/><rect x="900" y="410" width="10" height="10" fill="#0019ff"/><rect x="910" y="410" width="10" height="10" fill="#0016ff"/><rect x="920" y="410" width="10" height="10" fill="#0013ff"/><rect x="930" y="410" width="10" height="10" fill="#0010ff"/><rect x="940" y="410" width="10" height="10" fill="#000eff"/><rect x="950" y="410" width="10" height="10" fill="#050bff"/><rect x="960" y="410" width="10" height="10" fill="#1108ff"/><rect x="970" y="410" width="10" height="10" fill="#2005ff"/><rect x="980" y="410" width="10" height="10" fill="#3303ff"/><rect x="990" y="410" width="10" height="10" fill="#4901ff"/><rect x="1000" y="410" width="10" height="10" fill="#6200ff"/><rect x="1010" y="410" width="10" height="10" fill="#7e00ff"/><rect x="1020" y="410" width="10" height="10" fill="#9e00ff"/><rect x="1030" y="410" width="10" height="10" fill="#c100ff"/><rect x="1040" y="410" width="10" height="10" fill="#e700ff"/><rect x="1050" y="410" width="10" height="10" fill="#ff00ee"/><rect x="1060" y="410" width="10" height="10" fill="#ff00cb"/><rect x="1070" y="410" width="10" height="10" fill="#ff00af"/><rect x="1080" y="410" width="10" height="10" fill="#ff0098"/><rect x="1090" y="410" width="10" height="10" fill="#ff0085"/><rect x="1100" y="410" width="10" height="10" fill="#ff0075"/><rect x="1110" y="410" width="10" height="10" fill="#ff0067"/><rect x="1120" y="410" width="10" height="10" fill="#ff005b"/><rect x="1130" y="410" width="10" height="10" fill="#ff0051"/><rect x="1140" y="410" width="10" height="10" fill="#ff0048"/><rect x="1150" y="410" width="10" height="10" fill="#ff0040"/><rect x="1160" y="410" width="10" height="10" fill="#ff0039"/><rect x="1170" y="410" width="10" height="10" fill="#ff0033"/><rect x="1180" y="410" width="10" height="10" fill="#ff002e"/><rect x="1190" y="410" width="10" height="10" fill="#ff0029"/><rect x="1200" y="410" width="10" height="10" fill="#ff0025"/><rect x="1210" y="410" width="10" height="10" fill="#ff0021"/><rect x="1220" y="410" width="10" height="10" fill="#ff001d"/><rect x="1230" y="410" width="10" height="10" fill="#ff001a"/><rect x="1240" y="410" width="10" height="10" fill="#ff0017"/><rect x="1250" y="410" width="10" height="10" fill="#ff0015"/><rect x="1260" y="410" width="10" height="10" fill="#ff0012"/><rect x="1270" y="410" width="10" height="10" fill="#ff0010"/><rect x="1280" y="410" width="10" height="10" fill="#ff000e"/><rect x="1290" y="410" width="10" height="10" fill="#ff000c"/><rect x="1300" y="410" width="10" height="10" fill="#ff000b"/><rect x="1310" y="410" width="10" height="10" fill="#ff0009"/><rect x="1320" y="410" width="10" height="10" fill="#ff0008"/><rect x="1330" y="410" width="10" height="10" fill="#ff0007"/><rect x="830" y="420" width="10" height="10" fill="#0024ff"/><rect x="840" y="420" width="10" height="10" fill="#0021ff"/><rect x="850" y="420" width="10" height="10" fill="#001fff"/><rect x="860" y="420" width="10" height="10" fill="#001cff"/><rect x="870" y="420" width="10" height="10" fill="#0019ff"/><rect x="880" y="420" width="10" height="10" fill="#0016ff"/><rect x="890" y="420" width="10" height="10" fill="#0014ff"/><rect x="900" y="420" width="10" height="10" fill="#0011ff"/><rect x="910" y="420" width="10" height="10" fill="#000eff"/><rect x="920" y="420" width="10" height="10" fill="#000cff"/><rect x="930" y="420" width="10" height="10" fill="#0009ff"/><rect x="940" y="420" width="10" height="10" fill="#0006ff"/><rect x="950" y="420" width="10" height="10" fill="#0804ff"/><rect x="960" y="420" width="10" height="10" fill="#1502ff"/><rect x="970" y="420" width="10" height="10" fill="#2400ff"/><rect x="980" y="420" width="10" height="10" fill="#3700ff"/><rect x="990" y="420" width="10" height="10" fill="#4d00ff"/><rect x="1000" y="420" width="10" height="10" fill="#6500ff"/><rect x="1010" y="420" width="10" height="10" fill="#8100ff"/><rect x="1020" y="420" width="10" height="10" fill="#9f00ff"/><rect x="1030" y="420" width="10" height="10" fill="#c100ff"/><rect x="1040" y="420" width="10" height="10" fill="#e600ff"/><rect x="1050" y="420" width="10" height="10" fill="#ff00f1"/><rect x="1060" y="420" width="10" height="10" fill="#ff00cf"/><rect x="1070" y="420" width="10" height="10" fill="#ff00b3"/><rect x="1080" y="420" width="10" height="10" fill="#ff009c"/><rect x="1090" y="420" width="10" height="10" fill="#ff0089"/><rect x="1100" y="420" width="10" height="10" fill="#ff0079"/><rect x="1110" y="420" width="10" height="10" fill="#ff006b"/><rect x="1120" y="420" width="10" height="10" fill="#ff005f"/><rect x="1130" y="420" width="10" height="10" fill="#ff0055"/><rect x="1140" y="420" width="10" height="10" fill="#ff004c"/><rect x="1150" y="420" width="10" height="10" fill="#ff0044"/><rect x="1160" y="420" width="10" height="10" fill="#ff003d"/><rect x="1170" y="420" width="10" height="10" fill="#ff0036"/><rect x="1180" y="420" width="10" height="10" fill="#ff0031"/><rect x="1190" y="420" width="10" height="10" fill="#ff002c"/><rect x="1200" y="420" width="10" height="10" fill="#ff0027"/><rect x="1210" y="420" width="10" height="10" fill="#ff0023"/><rect x="1220" y="420" width="10" height="10" fill="#ff0020"/><rect x="1230" y="420" width="10" height="10" fill="#ff001d"/><rect x="1240" y="420" width="10" height="10" fill="#ff001a"/><rect x="1250" y="420" width="10" height="10" fill="#ff0017"/><rect x="1260" y="420" width="10" height="10" fill="#ff0014"/><rect x="1270" y="420" width="10" height="10" fill="#ff0012"/><rect x="1280" y="420" width="10" height="10" fill="#ff0010"/><rect x="1290" y="420" width="10" height="10" fill="#ff000e"/><rect x="1300" y="420" width="10" height="10" fill="#ff000c"/><rect x="1310" y="420" width="10" height="10" fill="#ff000b"/><rect x="1320" y="420" width="10" height="10" fill="#ff0009"/><rect x="1330" y="420" width="10" height="10" fill="#ff0008"/><rect x="830" y="430" width="10" height="10" fill="#001cff"/><rect x="840" y="430" width="10" height="10" fill="#0019ff"/><rect x="850" y="430" width="10" height="10" fill="#0017ff"/><rect x="860" y="430" width="10" height="10" fill="#0014ff"/><rect x="870" y="430" width="10" height="10" fill="#0011ff"/><rect x="880" y="430" width="10" height="10" fill="#000fff"/><rect x="890" y="430" width="10" height="10" fill="#000cff"/><rect x="900" y="430" width="10" height="10" fill="#000aff"/><rect x="910" y="430" width="10" height="10" fill="#0008ff"/><rect x="920" y="430" width="10" height="10" fill="#0005ff"/><rect x="930" y="430" width="10" height="10" fill="#0003ff"/><rect x="940" y="430" width="10" height="10" fill="#0201ff"/><rect x="950" y="430" width="10" height="10" fill="#0b00ff"/><rect x="960" y="430" width="10" height="10" fill="#1800ff"/><rect x="970" y="430" width="10" height="10" fill="#2800ff"/><rect x="980" y="430" width="10" height="10" fill="#3b00ff"/><rect x="990" y="430" width="10" height="10" fill="#5000ff"/><rect x="1000" y="430" width="10" height="10" fill="#6800ff"/><rect x="1010" y="430" width="10" height="10" fill="#8300ff"/><rect x="1020" y="430" width="10" height="10" fill="#a000ff"/><rect x="1030" y="430" width="10" height="10" fill="#c100ff"/><rect x="1040" y="430" width="10" height="10" fill="#e400ff"/><rect x="1050" y="430" width="10" height="10" fill="#ff00f3"/><rect x="1060" y="430" width="10" height="10" fill="#ff00d2"/><rect x="1070" y="430" width="10" height="10" fill="#ff00b7"/><rect x="1080" y="430" width="10" height="10" fill="#ff00a0"/><rect x="1090" y="430" width="10" height="10" fill="#ff008d"/><rect x="1100" y="430" width="10" height="10" fill="#ff007d"/><rect x="1110" y="430" width="10" height="10" fill="#ff006f"/><rect x="1120" y="430" width="10" height="10" fill="#ff0063"/><rect x="1130" y="430" width="10" height="10" fill="#ff0058"/><rect x="1140" y="430" width="10" height="10" fill="#ff004f"/><rect x="1150" y="430" width="10" height="10" fill="#ff0047"/><rect x="1160" y="430" width="10" height="10" fill="#ff0040"/><rect x="1170" y="430" width="10" height="10" fill="#ff003a"/><rect x="1180" y="430" width="10" height="10" fill="#ff0034"/><rect x="1190" y="430" width="10" height="10" fill="#ff002f"/><rect x="1200" y="430" width="10" height="10" fill="#ff002a"/><rect x="1210" y="430" width="10" height="10" fill="#ff0026"/><rect x="1220" y="430" width="10" height="10" fill="#ff0022"/><rect x="1230" y="430" width="10" height="10" fill="#ff001f"/><rect x="1240" y="430" width="10" height="10" fill="#ff001c"/><rect x="1250" y="430" width="10" height="10" fill="#ff0019"/><rect x="1260" y="430" width="10" height="10" fill="#ff0016"/><rect x="1270" y="430" width="10" height="10" fill="#ff0014"/><rect x="1280" y="430" width="10" height="10" fill="#ff0012"/><rect x="1290" y="430" width="10" height="10" fill="#ff0010"/><rect x="1300" y="430" width="10" height="10" fill="#ff000e"/><rect x="1310" y="430" width="10" height="10" fill="#ff000c"/><rect x="1320" y="430" width="10" height="10" fill="#ff000b"/><rect x="1330" y="430" width="10" height="10" fill="#ff000a"/><rect x="830" y="440" width="10" height="10" fill="#0014ff"/><rect x="840" y="440" width="10" height="10" fill="#0012ff"/><rect x="850" y="440" width="10" height="10" fill="#000fff"/><rect x="860" y="440" width="10" height="10" fill="#000dff"/><rect x="870" y="440" width="10" height="10" fill="#000bff"/><rect x="880" y="440" width="10" height="10" fill="#0009ff"/><rect x="890" y="440" width="10" height="10" fill="#0006ff"/><rect x="900" y="440" width="10" height="10" fill="#0004ff"/><rect x="910" y="440" width="10" height="10" fill="#0002ff"/><rect x="920" y="440" width="10" height="10" fill="#0001ff"/><rect x="930" y="440" width="10" height="10" fill="#0000ff"/><rect x="940" y="440" width="10" height="10" fill="#0400ff"/><rect x="950" y="440" width="10" height="10" fill="#0f00ff"/><rect x="960" y="440" width="10" height="10" fill="#1c00ff"/><rect x="970" y="440" width="10" height="10" fill="#2c00ff"/><rect x="980" y="440" width="10" height="10" fill="#3f00ff"/><rect x="990" y="440" width="10" height="10" fill="#5400ff"/><rect x="1000" y="440" width="10" height="10" fill="#6b00ff"/><rect x="1010" y="440" width="10" height="10" fill="#8500ff"/><rect x="1020" y="440" width="10" height="10" fill="#a200ff"/><rect x="1030" y="440" width="10" height="10" fill="#c100ff"/><rect x="1040" y="440" width="10" height="10" fill="#e300ff"/><rect x="1050" y="440" width="10" height="10" fill="#ff00f6"/><rect x="1060" y="440" width="10" height="10" fill="#ff00d5"/><rect x="1070" y="440" width="10" height="10" fill="#ff00ba"/><rect x="1080" y="440" width="10" height="10" fill="#ff00a4"/><rect x="1090" y="440" width="10" height="10" fill="#ff0091"/><rect x="1100" y="440" width="10" height="10" fill="#ff0080"/><rect x="1110" y="440" width="10" height="10" fill="#ff0072"/><rect x="1120" y="440" width="10" height="10" fill="#ff0066"/><rect x="1130" y="440" width="10" height="10" fill="#ff005c"/><rect x="1140" y="440" width="10" height="10" fill="#ff0052"/><rect x="1150" y="440" width="10" height="10" fill="#ff004a"/><rect x="1160" y="440" width="10" height="10" fill="#ff0043"/><rect x="1170" y="440" width="10" height="10" fill="#ff003d"/><rect x="1180" y="440" width="10" height="10" fill="#ff0037"/><rect x="1190" y="440" width="10" height="10" fill="#ff0031"/><rect x="1200" y="440" width="10" height="10" fill="#ff002d"/><rect x="1210" y="440" width="10" height="10" fill="#ff0029"/><rect x="1220" y="440" width="10" height="10" fill="#ff0025"/><rect x="1230" y="440" width="10" height="10" fill="#ff0021"/><rect x="1240" y="440" width="10" height="10" fill="#ff001e"/><rect x="1250" y="440" width="10" height="10" fill="#ff001b"/><rect x="1260" y="440" width="10" height="10" fill="#ff0018"/><rect x="1270" y="440" width="10" height="10" fill="#ff0016"/><rect x="1280" y="440" width="10" height="10" fill="#ff0014"/><rect x="1290" y="440" width="10" height="10" fill="#ff0012"/><rect x="1300" y="440" width="10" height="10" fill="#ff0010"/><rect x="1310" y="440" width="10" height="10" fill="#ff000e"/><rect x="1320" y="440" width="10" height="10" fill="#ff000d"/><rect x="1330" y="440" width="10" height="10" fill="#ff000b"/><rect x="830" y="450" width="10" height="10" fill="#000eff"/><rect x="840" y="450" width="10" height="10" fill="#000cff"/><rect x="850" y="450" width="10" height="10" fill="#0009ff"/><rect x="860" y="450" width="10" height="10" fill="#0007ff"/><rect x="870" y="450" width="10" height="10" fill="#0005ff"/><rect x="880" y="450" width="10" height="10" fill="#0003ff"/><rect x="890" y="450" width="10" height="10" fill="#0002ff"/><rect x="900" y="450" width="10" height="10" fill="#0000ff"/><rect x="910" y="450" width="10" height="10" fill="#0000ff"/><rect x="920" y="450" width="10" height="10" fill="#0000ff"/><rect x="930" y="450" width="10" height="10" fill="#0000ff"/><rect x="940" y="450" width="10" height="10" fill="#0700ff"/><rect x="950" y="450" width="10" height="10" fill="#1200ff"/><rect x="960" y="450" width="10" height="10" fill="#2000ff"/><rect x="970" y="450" width="10" height="10" fill="#3000ff"/><rect x="980" y="450" width="10" height="10" fill="#4200ff"/><rect x="990" y="450" width="10" height="10" fill="#5700ff"/><rect x="1000" y="450" width="10" height="10" fill="#6e00ff"/><rect x="1010" y="450" width="10" height="10" fill="#8700ff"/><rect x="1020" y="450" width="10" height="10" fill="#a300ff"/><rect x="1030" y="450" width="10" height="10" fill="#c100ff"/><rect x="1040" y="450" width="10" height="10" fill="#e200ff"/><rect x="1050" y="450" width="10" height="10" fill="#ff00f8"/><rect x="1060" y="450" width="10" height="10" fill="#ff00d8"/><rect x="1070" y="450" width="10" height="10" fill="#ff00bd"/><rect x="1080" y="450" width="10" height="10" fill="#ff00a7"/><rect x="1090" y="450" width="10" height="10" fill="#ff0094"/><rect x="1100" y="450" width="10" height="10" fill="#ff0084"/><rect x="1110" y="450" width="10" height="10" fill="#ff0076"/><rect x="1120" y="450" width="10" height="10" fill="#ff006a"/><rect x="1130" y="450" width="10" height="10" fill="#ff005f"/><rect x="1140" y="450" width="10" height="10" fill="#ff0056"/><rect x="1150" y="450" width="10" height="10" fill="#ff004d"/><rect x="1160" y="450" width="10" height="10" fill="#ff0046"/><rect x="1170" y="450" width="10" height="10" fill="#ff003f"/><rect x="1180" y="450" width="10" height="10" fill="#ff003a"/><rect x="1190" y="450" width="10" height="10" fill="#ff0034"/><rect x="1200" y="450" width="10" height="10" fill="#ff002f"/><rect x="1210" y="450" width="10" height="10" fill="#ff002b"/><rect x="1220" y="450" width="10" height="10" fill="#ff0027"/><rect x="1230" y="450" width="10" height="10" fill="#ff0024"/><rect x="1240" y="450" width="10" height="10" fill="#ff0020"/><rect x="1250" y="450" width="10" height="10" fill="#ff001d"/><rect x="1260" y="450" width="10" height="10" fill="#ff001a"/><rect x="1270" y="450" width="10" height="10" fill="#ff0018"/><rect x="1280" y="450" width="10" height="10" fill="#ff0016"/><rect x="1290" y="450" width="10" height="10" fill="#ff0013"/><rect x="1300" y="450" width="10" height="10" fill="#ff0012"/><rect x="1310" y="450" width="10" height="10" fill="#ff0010"/><rect x="1320" y="450" width="10" height="10" fill="#ff000e"/><rect x="1330" y="450" width="10" height="10" fill="#ff000d"/><rect x="830" y="460" width="10" height="10" fill="#0008ff"/><rect x="840" y="460" width="10" height="10" fill="#0006ff"/><rect x="850" y="460" width="10" height="10" fill="#0005ff"/><rect x="860" y="460" width="10" height="10" fill="#0003ff"/><rect x="870" y="460" width="10" height="10" fill="#0001ff"/><rect x="880" y="460" width="10" height="10" fill="#0000ff"/><rect x="890" y="460" width="10" height="10" fill="#0000ff"/><rect x="900" y="460" width="10" height="10" fill="#0000ff"/><rect x="910" y="460" width="10" height="10" fill="#0000ff"/><rect x="920" y="460" width="10" height="10" fill="#0000ff"/><rect x="930" y="460" width="10" height="10" fill="#0200ff"/><rect x="940" y="460" width="10" height="10" fill="#0a00ff"/><rect x="950" y="460" width="10" height="10" fill="#1500ff"/><rect x="960" y="460" width="10" height="10" fill="#2300ff"/><rect x="970" y="460" width="10" height="10" fill="#3300ff"/><rect x="980" y="460" width="10" height="10" fill="#4500ff"/><rect x="990" y="460" width="10" height="10" fill="#5a00ff"/><rect x="1000" y="460" width="10" height="10" fill="#7000ff"/><rect x="1010" y="460" width="10" height="10" fill="#8900ff"/><rect x="1020" y="460" width="10" height="10" fill="#a400ff"/><rect x="1030" y="460" width="10" height="10" fill="#c100ff"/><rect x="1040" y="460" width="10" height="10" fill="#e100ff"/><rect x="1050" y="460" width="10" height="10" fill="#ff00fa"/><rect x="1060" y="460" width="10" height="10" fill="#ff00db"/><rect x="1070" y="460" width="10" height="10" fill="#ff00c1"/><rect x="1080" y="460" width="10" height="10" fill="#ff00aa"/><rect x="1090" y="460" width="10" height="10" fill="#ff0098"/><rect x="1100" y="460" width="10" height="10" fill="#ff0087"/><rect x="1110" y="460" width="10" height="10" fill="#ff0079"/><rect x="1120" y="460" width="10" height="10" fill="#ff006d"/><rect x="1130" y="460" width="10" height="10" fill="#ff0062"/><rect x="1140" y="460" width="10" height="10" fill="#ff0059"/><rect x="1150" y="460" width="10" height="10" fill="#ff0051"/><rect x="1160" y="460" width="10" height="10" fill="#ff0049"/><rect x="1170" y="460" width="10" height="10" fill="#ff0042"/><rect x="1180" y="460" width="10" height="10" fill="#ff003c"/><rect x="1190" y="460" width="10" height="10" fill="#ff0037"/><rect x="1200" y="460" width="10" height="10" fill="#ff0032"/><rect x="1210" y="460" width="10" height="10" fill="#ff002e"/><rect x="1220" y="460" width="10" height="10" fill="#ff002a"/><rect x="1230" y="460" width="10" height="10" fill="#ff0026"/><rect x="1240" y="460" width="10" height="10" fill="#ff0022"/><rect x="1250" y="460" width="10" height="10" fill="#ff001f"/><rect x="1260" y="460" width="10" height="10" fill="#ff001d"/><rect x="1270" y="460" width="10" height="10" fill="#ff001a"/><rect x="1280" y="460" width="10" height="10" fill="#ff0018"/><rect x="1290" y="460" width="10" height="10" fill="#ff0015"/><rect x="1300" y="460" width="10" height="10" fill="#ff0013"/><rect x="1310" y="460" width="10" height="10" fill="#ff0011"/><rect x="1320" y="460" width="10" height="10" fill="#ff0010"/><rect x="1330" y="460" width="10" height="10" fill="#ff000e"/><rect x="830" y="470" width="10" height="10" fill="#0007ff"/><rect x="840" y="470" width="10" height="10" fill="#0005ff"/><rect x="850" y="470" width="10" height="10" fill="#0003ff"/><rect x="860" y="470" width="10" height="10" fill="#0002ff"/><rect x="870" y="470" width="10" height="10" fill="#0000ff"/><rect x="880" y="470" width="10" height="10" fill="#0000ff"/><rect x="890" y="470" width="10" height="10" fill="#0000ff"/><rect x="900" y="470" width="10" height="10" fill="#0000ff"/><rect x="910" y="470" width="10" height="10" fill="#0000ff"/><rect x="920" y="470" width="10" height="10" fill="#0000ff"/><rect x="930" y="470" width="10" height="10" fill="#0200ff"/><rect x="940" y="470" width="10" height="10" fill="#0b00ff"/><rect x="950" y="470" width="10" height="10" fill="#1600ff"/><rect x="960" y="470" width="10" height="10" fill="#2400ff"/><rect x="970" y="470" width="10" height="10" fill="#3400ff"/><rect x="980" y="470" width="10" height="10" fill="#4700ff"/><rect x="990" y="470" width="10" height="10" fill="#5b00ff"/><rect x="1000" y="470" width="10" height="10" fill="#7100ff"/><rect x="1010" y="470" width="10" height="10" fill="#8900ff"/><rect x="1020" y="470" width="10" height="10" fill="#a400ff"/><rect x="1030" y="470" width="10" height="10" fill="#c100ff"/><rect x="1040" y="470" width="10" height="10" fill="#e100ff"/><rect x="1050" y="470" width="10" height="10" fill="#ff00fb"/><rect x="1060" y="470" width="10" height="10" fill="#ff00dc"/><rect x="1070" y="470" width="10" height="10" fill="#ff00c2"/><rect x="1080" y="470" width="10" height="10" fill="#ff00ab"/><rect x="1090" y="470" width="10" height="10" fill="#ff0099"/><rect x="1100" y="470" width="10" height="10" fill="#ff0088"/><rect x="1110" y="470" width="10" height="10" fill="#ff007a"/><rect x="1120" y="470" width="10" height="10" fill="#ff006e"/><rect x="1130" y="470" width="10" height="10" fill="#ff0063"/><rect x="1140" y="470" width="10" height="10" fill="#ff005a"/><rect x="1150" y="470" width="10" height="10" fill="#ff0052"/><rect x="1160" y="470" width="10" height="10" fill="#ff004a"/><rect x="1170" y="470" width="10" height="10" fill="#ff0043"/><rect x="1180" y="470" width="10" height="10" fill="#ff003d"/><rect x="1190" y="470" width="10" height="10" fill="#ff0038"/><rect x="1200" y="470" width="10" height="10" fill="#ff0033"/><rect x="1210" y="470" width="10" height="10" fill="#ff002e"/><rect x="1220" y="470" width="10" height="10" fill="#ff002a"/><rect x="1230" y="470" width="10" height="10" fill="#ff0027"/><rect x="1240" y="470" width="10" height="10" fill="#ff0023"/><rect x="1250" y="470" width="10" height="10" fill="#ff0020"/><rect x="1260" y="470" width="10" height="10" fill="#ff001d"/><rect x="1270" y="470" width="10" height="10" fill="#ff001b"/><rect x="1280" y="470" width="10" height="10" fill="#ff0018"/><rect x="1290" y="470" width="10" height="10" fill="#ff0016"/><rect x="1300" y="470" width="10" height="10" fill="#ff0014"/><rect x="1310" y="470" width="10" height="10" fill="#ff0012"/><rect x="1320" y="470" width="10" height="10" fill="#ff0010"/><rect x="1330" y="470" width="10" height="10" fill="#ff000f"/><rect x="830" y="480" width="10" height="10" fill="#0007ff"/><rect x="840" y="480" width="10" height="10" fill="#0005ff"/><rect x="850" y="480" width="10" height="10" fill="#0003ff"/><rect x="860" y="480" width="10" height="10" fill="#0002ff"/><rect x="870" y="480" width="10" height="10" fill="#0000ff"/><rect x="880" y="480" width="10" height="10" fill="#0000ff"/><rect x="890" y="480" width="10" height="10" fill="#0000ff"/><rect x="900" y="480" width="10" height="10" fill="#0000ff"/><rect x="910" y="480" width="10" height="10" fill="#0000ff"/><rect x="920" y="480" width="10" height="10" fill="#0000ff"/><rect x="930" y="480" width="10" height="10" fill="#0200ff"/><rect x="940" y="480" width="10" height="10" fill="#0b00ff"/><rect x="950" y="480" width="10" height="10" fill="#1600ff"/><rect x="960" y="480" width="10" height="10" fill="#2400ff"/><rect x="970" y="480" width="10" height="10" fill="#3400ff"/><rect x="980" y="480" width="10" height="10" fill="#4700ff"/><rect x="990" y="480" width="10" height="10" fill="#5b00ff"/><rect x="1000" y="480" width="10" height="10" fill="#7100ff"/><rect x="1010" y="480" width="10" height="10" fill="#8900ff"/><rect x="1020" y="480" width="10" height="10" fill="#a400ff"/><rect x="1030" y="480" width="10" height="10" fill="#c100ff"/><rect x="1040" y="480" width="10" height="10" fill="#e100ff"/><rect x="1050" y="480" width="10" height="10" fill="#ff00fb"/><rect x="1060" y="480" width="10" height="10" fill="#ff00dc"/><rect x="1070" y="480" width="10" height="10" fill="#ff00c2"/><rect x="1080" y="480" width="10" height="10" fill="#ff00ab"/><rect x="1090" y="480" width="10" height="10" fill="#ff0099"/><rect x="1100" y="480" width="10" height="10" fill="#ff0088"/><rect x="1110" y="480" width="10" height="10" fill="#ff007a"/><rect x="1120" y="480" width="10" height="10" fill="#ff006e"/><rect x="1130" y="480" width="10" height="10" fill="#ff0063"/><rect x="1140" y="480" width="10" height="10" fill="#ff005a"/><rect x="1150" y="480" width="10" height="10" fill="#ff0052"/><rect x="1160" y="480" width="10" height="10" fill="#ff004a"/><rect x="1170" y="480" width="10" height="10" fill="#ff0043"/><rect x="1180" y="480" width="10" height="10" fill="#ff003d"/><rect x="1190" y="480" width="10" height="10" fill="#ff0038"/><rect x="1200" y="480" width="10" height="10" fill="#ff0033"/><rect x="1210" y="480" width="10" height="10" fill="#ff002e"/><rect x="1220" y="480" width="10" height="10" fill="#ff002a"/><rect x="1230" y="480" width="10" height="10" fill="#ff0027"/><rect x="1240" y="480" width="10" height="10" fill="#ff0023"/><rect x="1250" y="480" width="10" height="10" fill="#ff0020"/><rect x="1260" y="480" width="10" height="10" fill="#ff001d"/><rect x="1270" y="480" width="10" height="10" fill="#ff001b"/><rect x="1280" y="480" width="10" height="10" fill="#ff0018"/><rect x="1290" y="480" width="10" height="10" fill="#ff0016"/><rect x="1300" y="480" width="10" height="10" fill="#ff0014"/><rect x="1310" y="480" width="10" height="10" fill="#ff0012"/><rect x="1320" y="480" width="10" height="10" fill="#ff0010"/><rect x="1330" y="480" width="10" height="10" fill="#ff000f"/></g>
</defs>
<g clip-path="url(#clLocus)" shape-rendering="geometricPrecision"><use href="#cieGrid" filter="url(#fDim)"/></g>
<defs><radialGradient id="gShade" gradientUnits="userSpaceOnUse" cx="950" cy="410" r="370"><stop offset="0" stop-color="#000" stop-opacity="0"/><stop offset="0.2" stop-color="#000" stop-opacity="0.03"/><stop offset="1" stop-color="#000" stop-opacity="0.42"/></radialGradient></defs>
<path d="M954.7,470.9 L954.6,470.9 L954.6,470.9 L954.6,470.9 L954.6,470.9 L954.5,470.9 L954.5,470.9 L954.4,470.9 L954.4,471.0 L954.3,471.0 L954.3,471.0 L954.2,471.0 L954.2,471.0 L954.1,471.0 L954.0,471.0 L954.0,471.0 L953.9,471.0 L953.8,471.0 L953.7,471.0 L953.6,471.0 L953.5,471.0 L953.4,471.0 L953.3,470.9 L953.1,470.9 L952.9,470.8 L952.7,470.7 L952.5,470.6 L952.3,470.5 L952.0,470.3 L951.7,470.1 L951.3,469.9 L950.9,469.6 L950.5,469.3 L950.1,469.0 L949.6,468.6 L949.0,468.2 L948.4,467.8 L947.7,467.3 L947.0,466.8 L946.2,466.3 L945.4,465.7 L944.4,465.0 L943.4,464.2 L942.2,463.5 L941.1,462.7 L939.8,461.8 L938.4,460.8 L936.9,459.5 L935.2,458.0 L933.3,456.0 L931.2,453.7 L928.9,451.2 L926.6,448.5 L924.4,445.8 L922.4,443.3 L920.6,440.9 L919.1,438.6 L917.6,436.3 L916.2,433.8 L914.7,431.1 L913.0,428.1 L911.2,424.7 L909.3,421.2 L907.4,417.4 L905.4,413.3 L903.3,408.9 L901.2,404.1 L898.9,399.0 L896.5,393.6 L894.1,387.9 L891.6,381.8 L889.1,375.4 L886.6,368.5 L884.1,361.3 L881.6,353.6 L879.0,345.5 L876.5,337.1 L874.0,328.3 L871.5,319.2 L869.1,309.7 L866.6,299.8 L864.1,289.5 L861.7,278.9 L859.5,268.3 L857.4,257.7 L855.4,246.9 L853.5,235.9 L851.7,224.7 L850.1,213.6 L848.7,202.6 L847.5,191.9 L846.5,181.4 L845.7,170.9 L845.1,160.5 L844.7,150.3 L844.6,140.5 L844.7,131.0 L845.1,121.9 L845.8,112.9 L846.8,104.3 L848.0,96.1 L849.4,88.3 L851.2,81.1 L853.2,74.5 L855.6,68.3 L858.2,62.6 L861.1,57.4 L864.1,52.8 L867.3,48.8 L870.7,45.5 L874.3,42.9 L878.2,40.9 L882.1,39.3 L886.1,38.2 L890.2,37.4 L894.3,37.1 L898.6,37.4 L902.9,38.0 L907.2,39.0 L911.6,40.2 L916.0,41.4 L920.3,42.8 L924.7,44.4 L929.1,46.2 L933.5,48.1 L937.9,50.0 L942.1,52.0 L946.3,54.0 L950.5,56.0 L954.6,58.1 L958.7,60.3 L962.8,62.5 L966.8,64.7 L970.8,67.0 L974.8,69.3 L978.7,71.7 L982.7,74.1 L986.6,76.5 L990.5,79.0 L994.4,81.5 L998.4,84.1 L1002.3,86.7 L1006.1,89.3 L1010.0,92.0 L1013.9,94.7 L1017.8,97.4 L1021.6,100.2 L1025.5,102.9 L1029.3,105.8 L1033.2,108.6 L1037.0,111.4 L1040.9,114.3 L1044.7,117.2 L1048.6,120.1 L1052.4,123.0 L1056.2,125.9 L1060.1,128.9 L1063.9,131.9 L1067.8,134.8 L1071.7,137.8 L1075.5,140.9 L1079.4,143.9 L1083.2,146.9 L1087.1,149.9 L1090.9,153.0 L1094.7,156.0 L1098.6,159.0 L1102.4,162.1 L1106.2,165.1 L1110.0,168.2 L1113.9,171.2 L1117.7,174.3 L1121.5,177.3 L1125.3,180.4 L1129.1,183.4 L1132.9,186.4 L1136.6,189.4 L1140.4,192.5 L1144.1,195.5 L1147.8,198.5 L1151.5,201.4 L1155.2,204.4 L1158.8,207.4 L1162.5,210.3 L1166.1,213.2 L1169.7,216.1 L1173.3,219.0 L1176.8,221.9 L1180.3,224.7 L1183.8,227.5 L1187.3,230.3 L1190.7,233.1 L1194.1,235.8 L1197.5,238.6 L1200.8,241.2 L1204.1,243.9 L1207.4,246.5 L1210.6,249.1 L1213.8,251.6 L1216.9,254.2 L1220.0,256.6 L1223.0,259.1 L1225.9,261.5 L1228.8,263.8 L1231.7,266.1 L1234.4,268.4 L1237.1,270.5 L1239.7,272.6 L1242.3,274.7 L1244.8,276.7 L1247.2,278.7 L1249.7,280.6 L1252.0,282.5 L1254.4,284.4 L1256.6,286.2 L1258.8,288.0 L1260.9,289.7 L1262.9,291.3 L1264.7,292.7 L1266.4,294.1 L1268.2,295.5 L1270.1,297.1 L1272.3,298.8 L1274.8,300.9 L1277.7,303.2 L1280.7,305.6 L1283.6,308.0 L1286.4,310.3 L1288.9,312.3 L1291.1,314.0 L1293.0,315.6 L1294.8,317.0 L1296.4,318.3 L1298.0,319.6 L1299.5,320.8 L1300.9,321.9 L1302.2,323.0 L1303.5,324.0 L1304.6,324.9 L1305.7,325.8 L1306.7,326.6 L1307.6,327.3 L1308.4,328.0 L1309.2,328.6 L1309.9,329.2 L1310.6,329.7 L1311.2,330.2 L1311.7,330.6 L1312.2,331.0 L1312.6,331.4 L1313.0,331.7 L1313.4,332.0 L1313.8,332.3 L1314.2,332.6 L1314.6,332.9 L1315.0,333.3 L1315.4,333.6 L1315.7,333.8 L1316.0,334.1 L1316.2,334.3 L1316.4,334.4 L1316.5,334.5 L1316.6,334.6 L1316.7,334.7 L1316.8,334.7 Z" fill="url(#gShade)" shape-rendering="geometricPrecision"/>
<g clip-path="url(#clLocus)"><path d="M780,512.6 L1414.6,230.6 L1414.6,520 L780,520 Z" fill="#000" fill-opacity="0.22" shape-rendering="geometricPrecision"/></g>
<g clip-path="url(#clTri)" shape-rendering="geometricPrecision"><use href="#cieGrid" filter="url(#fBlur)"/></g>
<rect x="842.5" y="33.5" width="543" height="440" fill="none" stroke="#9c9c9c"/>
<text x="842.5" y="493" font-size="12" text-anchor="middle" >0</text>
<text x="838" y="479.0" font-size="12" text-anchor="end" >0</text>
<line x1="907.5" y1="474" x2="907.5" y2="479" stroke="#9c9c9c" stroke-width="1"/>
<text x="907.5" y="493" font-size="12" text-anchor="middle" >0,1</text>
<line x1="837" y1="421.5" x2="842" y2="421.5" stroke="#9c9c9c" stroke-width="1"/>
<text x="838" y="426.0" font-size="12" text-anchor="end" >0,1</text>
<line x1="971.5" y1="474" x2="971.5" y2="479" stroke="#9c9c9c" stroke-width="1"/>
<text x="971.5" y="493" font-size="12" text-anchor="middle" >0,2</text>
<line x1="837" y1="369.5" x2="842" y2="369.5" stroke="#9c9c9c" stroke-width="1"/>
<text x="838" y="374.0" font-size="12" text-anchor="end" >0,2</text>
<line x1="1036.5" y1="474" x2="1036.5" y2="479" stroke="#9c9c9c" stroke-width="1"/>
<text x="1036.5" y="493" font-size="12" text-anchor="middle" >0,3</text>
<line x1="837" y1="317.5" x2="842" y2="317.5" stroke="#9c9c9c" stroke-width="1"/>
<text x="838" y="322.0" font-size="12" text-anchor="end" >0,3</text>
<line x1="1101.5" y1="474" x2="1101.5" y2="479" stroke="#9c9c9c" stroke-width="1"/>
<text x="1101.5" y="493" font-size="12" text-anchor="middle" >0,4</text>
<line x1="837" y1="264.5" x2="842" y2="264.5" stroke="#9c9c9c" stroke-width="1"/>
<text x="838" y="269.0" font-size="12" text-anchor="end" >0,4</text>
<line x1="1165.5" y1="474" x2="1165.5" y2="479" stroke="#9c9c9c" stroke-width="1"/>
<text x="1165.5" y="493" font-size="12" text-anchor="middle" >0,5</text>
<line x1="837" y1="212.5" x2="842" y2="212.5" stroke="#9c9c9c" stroke-width="1"/>
<text x="838" y="217.0" font-size="12" text-anchor="end" >0,5</text>
<line x1="1230.5" y1="474" x2="1230.5" y2="479" stroke="#9c9c9c" stroke-width="1"/>
<text x="1230.5" y="493" font-size="12" text-anchor="middle" >0,6</text>
<line x1="837" y1="160.5" x2="842" y2="160.5" stroke="#9c9c9c" stroke-width="1"/>
<text x="838" y="165.0" font-size="12" text-anchor="end" >0,6</text>
<line x1="1294.5" y1="474" x2="1294.5" y2="479" stroke="#9c9c9c" stroke-width="1"/>
<text x="1294.5" y="493" font-size="12" text-anchor="middle" >0,7</text>
<line x1="837" y1="107.5" x2="842" y2="107.5" stroke="#9c9c9c" stroke-width="1"/>
<text x="838" y="112.0" font-size="12" text-anchor="end" >0,7</text>
<line x1="1359.5" y1="474" x2="1359.5" y2="479" stroke="#9c9c9c" stroke-width="1"/>
<text x="1359.5" y="493" font-size="12" text-anchor="middle" >0,8</text>
<line x1="837" y1="55.5" x2="842" y2="55.5" stroke="#9c9c9c" stroke-width="1"/>
<text x="838" y="60.0" font-size="12" text-anchor="end" >0,8</text>
<defs><clipPath id="clInset"><rect x="1231" y="34" width="155" height="161"/></clipPath>
<clipPath id="clITri"><path d="M897.6,-211.7 L2068.7,718.3 L380.9,1648.3 Z"/></clipPath>
<filter id="fDimI" x="-5%" y="-5%" width="110%" height="110%" color-interpolation-filters="sRGB"><feGaussianBlur stdDeviation="4"/><feColorMatrix type="matrix" values="0.6 0 0 0 0  0 0.6 0 0 0  0 0 0.6 0 0  0 0 0 1 0"/></filter>
<g id="insetGrid"><rect x="1219" y="22" width="6" height="6" fill="#99ff00"/><rect x="1225" y="22" width="6" height="6" fill="#9dff00"/><rect x="1231" y="22" width="6" height="6" fill="#a1ff00"/><rect x="1237" y="22" width="6" height="6" fill="#a5ff00"/><rect x="1243" y="22" width="6" height="6" fill="#a9ff00"/><rect x="1249" y="22" width="6" height="6" fill="#adff00"/><rect x="1255" y="22" width="6" height="6" fill="#b1ff00"/><rect x="1261" y="22" width="6" height="6" fill="#b5ff00"/><rect x="1267" y="22" width="6" height="6" fill="#b9ff00"/><rect x="1273" y="22" width="6" height="6" fill="#bdff00"/><rect x="1279" y="22" width="6" height="6" fill="#c1ff00"/><rect x="1285" y="22" width="6" height="6" fill="#c6ff00"/><rect x="1291" y="22" width="6" height="6" fill="#caff00"/><rect x="1297" y="22" width="6" height="6" fill="#ceff00"/><rect x="1303" y="22" width="6" height="6" fill="#d3ff00"/><rect x="1309" y="22" width="6" height="6" fill="#d7ff00"/><rect x="1315" y="22" width="6" height="6" fill="#dcff00"/><rect x="1321" y="22" width="6" height="6" fill="#e0ff00"/><rect x="1327" y="22" width="6" height="6" fill="#e5ff00"/><rect x="1333" y="22" width="6" height="6" fill="#e9ff00"/><rect x="1339" y="22" width="6" height="6" fill="#eeff00"/><rect x="1345" y="22" width="6" height="6" fill="#f3ff00"/><rect x="1351" y="22" width="6" height="6" fill="#f8ff00"/><rect x="1357" y="22" width="6" height="6" fill="#fdff00"/><rect x="1363" y="22" width="6" height="6" fill="#fffc00"/><rect x="1369" y="22" width="6" height="6" fill="#fff800"/><rect x="1375" y="22" width="6" height="6" fill="#fff300"/><rect x="1381" y="22" width="6" height="6" fill="#ffee00"/><rect x="1387" y="22" width="6" height="6" fill="#ffea00"/><rect x="1393" y="22" width="6" height="6" fill="#ffe600"/><rect x="1219" y="28" width="6" height="6" fill="#9bff00"/><rect x="1225" y="28" width="6" height="6" fill="#9fff00"/><rect x="1231" y="28" width="6" height="6" fill="#a3ff00"/><rect x="1237" y="28" width="6" height="6" fill="#a7ff00"/><rect x="1243" y="28" width="6" height="6" fill="#abff00"/><rect x="1249" y="28" width="6" height="6" fill="#afff00"/><rect x="1255" y="28" width="6" height="6" fill="#b3ff00"/><rect x="1261" y="28" width="6" height="6" fill="#b7ff00"/><rect x="1267" y="28" width="6" height="6" fill="#bbff00"/><rect x="1273" y="28" width="6" height="6" fill="#bfff00"/><rect x="1279" y="28" width="6" height="6" fill="#c4ff00"/><rect x="1285" y="28" width="6" height="6" fill="#c8ff00"/><rect x="1291" y="28" width="6" height="6" fill="#ccff00"/><rect x="1297" y="28" width="6" height="6" fill="#d1ff00"/><rect x="1303" y="28" width="6" height="6" fill="#d5ff00"/><rect x="1309" y="28" width="6" height="6" fill="#daff00"/><rect x="1315" y="28" width="6" height="6" fill="#deff00"/><rect x="1321" y="28" width="6" height="6" fill="#e3ff00"/><rect x="1327" y="28" width="6" height="6" fill="#e8ff00"/><rect x="1333" y="28" width="6" height="6" fill="#ecff00"/><rect x="1339" y="28" width="6" height="6" fill="#f1ff00"/><rect x="1345" y="28" width="6" height="6" fill="#f6ff00"/><rect x="1351" y="28" width="6" height="6" fill="#fbff00"/><rect x="1357" y="28" width="6" height="6" fill="#fffe00"/><rect x="1363" y="28" width="6" height="6" fill="#fff900"/><rect x="1369" y="28" width="6" height="6" fill="#fff500"/><rect x="1375" y="28" width="6" height="6" fill="#fff000"/><rect x="1381" y="28" width="6" height="6" fill="#ffec00"/><rect x="1387" y="28" width="6" height="6" fill="#ffe700"/><rect x="1393" y="28" width="6" height="6" fill="#ffe300"/><rect x="1219" y="34" width="6" height="6" fill="#9dff00"/><rect x="1225" y="34" width="6" height="6" fill="#a1ff00"/><rect x="1231" y="34" width="6" height="6" fill="#a5ff00"/><rect x="1237" y="34" width="6" height="6" fill="#a9ff00"/><rect x="1243" y="34" width="6" height="6" fill="#adff00"/><rect x="1249" y="34" width="6" height="6" fill="#b1ff00"/><rect x="1255" y="34" width="6" height="6" fill="#b5ff00"/><rect x="1261" y="34" width="6" height="6" fill="#b9ff00"/><rect x="1267" y="34" width="6" height="6" fill="#bdff00"/><rect x="1273" y="34" width="6" height="6" fill="#c2ff00"/><rect x="1279" y="34" width="6" height="6" fill="#c6ff00"/><rect x="1285" y="34" width="6" height="6" fill="#caff00"/><rect x="1291" y="34" width="6" height="6" fill="#cfff00"/><rect x="1297" y="34" width="6" height="6" fill="#d3ff00"/><rect x="1303" y="34" width="6" height="6" fill="#d8ff00"/><rect x="1309" y="34" width="6" height="6" fill="#dcff00"/><rect x="1315" y="34" width="6" height="6" fill="#e1ff00"/><rect x="1321" y="34" width="6" height="6" fill="#e6ff00"/><rect x="1327" y="34" width="6" height="6" fill="#eaff00"/><rect x="1333" y="34" width="6" height="6" fill="#efff00"/><rect x="1339" y="34" width="6" height="6" fill="#f4ff00"/><rect x="1345" y="34" width="6" height="6" fill="#f9ff00"/><rect x="1351" y="34" width="6" height="6" fill="#feff00"/><rect x="1357" y="34" width="6" height="6" fill="#fffb00"/><rect x="1363" y="34" width="6" height="6" fill="#fff700"/><rect x="1369" y="34" width="6" height="6" fill="#fff200"/><rect x="1375" y="34" width="6" height="6" fill="#ffed00"/><rect x="1381" y="34" width="6" height="6" fill="#ffe900"/><rect x="1387" y="34" width="6" height="6" fill="#ffe500"/><rect x="1393" y="34" width="6" height="6" fill="#ffe000"/><rect x="1219" y="40" width="6" height="6" fill="#9fff00"/><rect x="1225" y="40" width="6" height="6" fill="#a3ff00"/><rect x="1231" y="40" width="6" height="6" fill="#a7ff00"/><rect x="1237" y="40" width="6" height="6" fill="#abff00"/><rect x="1243" y="40" width="6" height="6" fill="#afff00"/><rect x="1249" y="40" width="6" height="6" fill="#b3ff00"/><rect x="1255" y="40" width="6" height="6" fill="#b7ff00"/><rect x="1261" y="40" width="6" height="6" fill="#bcff00"/><rect x="1267" y="40" width="6" height="6" fill="#c0ff00"/><rect x="1273" y="40" width="6" height="6" fill="#c4ff00"/><rect x="1279" y="40" width="6" height="6" fill="#c8ff00"/><rect x="1285" y="40" width="6" height="6" fill="#cdff00"/><rect x="1291" y="40" width="6" height="6" fill="#d1ff00"/><rect x="1297" y="40" width="6" height="6" fill="#d6ff00"/><rect x="1303" y="40" width="6" height="6" fill="#daff00"/><rect x="1309" y="40" width="6" height="6" fill="#dfff00"/><rect x="1315" y="40" width="6" height="6" fill="#e4ff00"/><rect x="1321" y="40" width="6" height="6" fill="#e8ff00"/><rect x="1327" y="40" width="6" height="6" fill="#edff00"/><rect x="1333" y="40" width="6" height="6" fill="#f2ff00"/><rect x="1339" y="40" width="6" height="6" fill="#f7ff00"/><rect x="1345" y="40" width="6" height="6" fill="#fcff00"/><rect x="1351" y="40" width="6" height="6" fill="#fffd00"/><rect x="1357" y="40" width="6" height="6" fill="#fff800"/><rect x="1363" y="40" width="6" height="6" fill="#fff400"/><rect x="1369" y="40" width="6" height="6" fill="#ffef00"/><rect x="1375" y="40" width="6" height="6" fill="#ffeb00"/><rect x="1381" y="40" width="6" height="6" fill="#ffe600"/><rect x="1387" y="40" width="6" height="6" fill="#ffe200"/><rect x="1393" y="40" width="6" height="6" fill="#ffde00"/><rect x="1219" y="46" width="6" height="6" fill="#a1ff00"/><rect x="1225" y="46" width="6" height="6" fill="#a5ff00"/><rect x="1231" y="46" width="6" height="6" fill="#a9ff00"/><rect x="1237" y="46" width="6" height="6" fill="#adff00"/><rect x="1243" y="46" width="6" height="6" fill="#b1ff00"/><rect x="1249" y="46" width="6" height="6" fill="#b5ff00"/><rect x="1255" y="46" width="6" height="6" fill="#baff00"/><rect x="1261" y="46" width="6" height="6" fill="#beff00"/><rect x="1267" y="46" width="6" height="6" fill="#c2ff00"/><rect x="1273" y="46" width="6" height="6" fill="#c7ff00"/><rect x="1279" y="46" width="6" height="6" fill="#cbff00"/><rect x="1285" y="46" width="6" height="6" fill="#cfff00"/><rect x="1291" y="46" width="6" height="6" fill="#d4ff00"/><rect x="1297" y="46" width="6" height="6" fill="#d8ff00"/><rect x="1303" y="46" width="6" height="6" fill="#ddff00"/><rect x="1309" y="46" width="6" height="6" fill="#e2ff00"/><rect x="1315" y="46" width="6" height="6" fill="#e6ff00"/><rect x="1321" y="46" width="6" height="6" fill="#ebff00"/><rect x="1327" y="46" width="6" height="6" fill="#f0ff00"/><rect x="1333" y="46" width="6" height="6" fill="#f5ff00"/><rect x="1339" y="46" width="6" height="6" fill="#faff00"/><rect x="1345" y="46" width="6" height="6" fill="#ffff00"/><rect x="1351" y="46" width="6" height="6" fill="#fffa00"/><rect x="1357" y="46" width="6" height="6" fill="#fff500"/><rect x="1363" y="46" width="6" height="6" fill="#fff100"/><rect x="1369" y="46" width="6" height="6" fill="#ffec00"/><rect x="1375" y="46" width="6" height="6" fill="#ffe800"/><rect x="1381" y="46" width="6" height="6" fill="#ffe300"/><rect x="1387" y="46" width="6" height="6" fill="#ffdf00"/><rect x="1393" y="46" width="6" height="6" fill="#ffdb00"/><rect x="1219" y="52" width="6" height="6" fill="#a3ff00"/><rect x="1225" y="52" width="6" height="6" fill="#a7ff00"/><rect x="1231" y="52" width="6" height="6" fill="#abff00"/><rect x="1237" y="52" width="6" height="6" fill="#afff00"/><rect x="1243" y="52" width="6" height="6" fill="#b4ff00"/><rect x="1249" y="52" width="6" height="6" fill="#b8ff00"/><rect x="1255" y="52" width="6" height="6" fill="#bcff00"/><rect x="1261" y="52" width="6" height="6" fill="#c0ff00"/><rect x="1267" y="52" width="6" height="6" fill="#c5ff00"/><rect x="1273" y="52" width="6" height="6" fill="#c9ff00"/><rect x="1279" y="52" width="6" height="6" fill="#cdff00"/><rect x="1285" y="52" width="6" height="6" fill="#d2ff00"/><rect x="1291" y="52" width="6" height="6" fill="#d6ff00"/><rect x="1297" y="52" width="6" height="6" fill="#dbff00"/><rect x="1303" y="52" width="6" height="6" fill="#e0ff00"/><rect x="1309" y="52" width="6" height="6" fill="#e4ff00"/><rect x="1315" y="52" width="6" height="6" fill="#e9ff00"/><rect x="1321" y="52" width="6" height="6" fill="#eeff00"/><rect x="1327" y="52" width="6" height="6" fill="#f3ff00"/><rect x="1333" y="52" width="6" height="6" fill="#f8ff00"/><rect x="1339" y="52" width="6" height="6" fill="#fdff00"/><rect x="1345" y="52" width="6" height="6" fill="#fffc00"/><rect x="1351" y="52" width="6" height="6" fill="#fff700"/><rect x="1357" y="52" width="6" height="6" fill="#fff300"/><rect x="1363" y="52" width="6" height="6" fill="#ffee00"/><rect x="1369" y="52" width="6" height="6" fill="#ffe900"/><rect x="1375" y="52" width="6" height="6" fill="#ffe500"/><rect x="1381" y="52" width="6" height="6" fill="#ffe100"/><rect x="1387" y="52" width="6" height="6" fill="#ffdd00"/><rect x="1393" y="52" width="6" height="6" fill="#ffd900"/><rect x="1219" y="58" width="6" height="6" fill="#a5ff00"/><rect x="1225" y="58" width="6" height="6" fill="#a9ff00"/><rect x="1231" y="58" width="6" height="6" fill="#aeff00"/><rect x="1237" y="58" width="6" height="6" fill="#b2ff00"/><rect x="1243" y="58" width="6" height="6" fill="#b6ff00"/><rect x="1249" y="58" width="6" height="6" fill="#baff00"/><rect x="1255" y="58" width="6" height="6" fill="#beff00"/><rect x="1261" y="58" width="6" height="6" fill="#c3ff00"/><rect x="1267" y="58" width="6" height="6" fill="#c7ff00"/><rect x="1273" y="58" width="6" height="6" fill="#cbff00"/><rect x="1279" y="58" width="6" height="6" fill="#d0ff00"/><rect x="1285" y="58" width="6" height="6" fill="#d5ff00"/><rect x="1291" y="58" width="6" height="6" fill="#d9ff00"/><rect x="1297" y="58" width="6" height="6" fill="#deff00"/><rect x="1303" y="58" width="6" height="6" fill="#e2ff00"/><rect x="1309" y="58" width="6" height="6" fill="#e7ff00"/><rect x="1315" y="58" width="6" height="6" fill="#ecff00"/><rect x="1321" y="58" width="6" height="6" fill="#f1ff00"/><rect x="1327" y="58" width="6" height="6" fill="#f6ff00"/><rect x="1333" y="58" width="6" height="6" fill="#fbff00"/><rect x="1339" y="58" width="6" height="6" fill="#fffe00"/><rect x="1345" y="58" width="6" height="6" fill="#fff900"/><rect x="1351" y="58" width="6" height="6" fill="#fff400"/><rect x="1357" y="58" width="6" height="6" fill="#fff000"/><rect x="1363" y="58" width="6" height="6" fill="#ffeb00"/><rect x="1369" y="58" width="6" height="6" fill="#ffe700"/><rect x="1375" y="58" width="6" height="6" fill="#ffe200"/><rect x="1381" y="58" width="6" height="6" fill="#ffde00"/><rect x="1387" y="58" width="6" height="6" fill="#ffda00"/><rect x="1393" y="58" width="6" height="6" fill="#ffd600"/><rect x="1219" y="64" width="6" height="6" fill="#a8ff01"/><rect x="1225" y="64" width="6" height="6" fill="#acff01"/><rect x="1231" y="64" width="6" height="6" fill="#b0ff00"/><rect x="1237" y="64" width="6" height="6" fill="#b4ff00"/><rect x="1243" y="64" width="6" height="6" fill="#b8ff00"/><rect x="1249" y="64" width="6" height="6" fill="#bcff00"/><rect x="1255" y="64" width="6" height="6" fill="#c1ff00"/><rect x="1261" y="64" width="6" height="6" fill="#c5ff00"/><rect x="1267" y="64" width="6" height="6" fill="#caff00"/><rect x="1273" y="64" width="6" height="6" fill="#ceff00"/><rect x="1279" y="64" width="6" height="6" fill="#d3ff00"/><rect x="1285" y="64" width="6" height="6" fill="#d7ff00"/><rect x="1291" y="64" width="6" height="6" fill="#dcff00"/><rect x="1297" y="64" width="6" height="6" fill="#e0ff00"/><rect x="1303" y="64" width="6" height="6" fill="#e5ff00"/><rect x="1309" y="64" width="6" height="6" fill="#eaff00"/><rect x="1315" y="64" width="6" height="6" fill="#efff00"/><rect x="1321" y="64" width="6" height="6" fill="#f4ff00"/><rect x="1327" y="64" width="6" height="6" fill="#f9ff00"/><rect x="1333" y="64" width="6" height="6" fill="#feff00"/><rect x="1339" y="64" width="6" height="6" fill="#fffb00"/><rect x="1345" y="64" width="6" height="6" fill="#fff600"/><rect x="1351" y="64" width="6" height="6" fill="#fff200"/><rect x="1357" y="64" width="6" height="6" fill="#ffed00"/><rect x="1363" y="64" width="6" height="6" fill="#ffe800"/><rect x="1369" y="64" width="6" height="6" fill="#ffe400"/><rect x="1375" y="64" width="6" height="6" fill="#ffe000"/><rect x="1381" y="64" width="6" height="6" fill="#ffdc00"/><rect x="1387" y="64" width="6" height="6" fill="#ffd800"/><rect x="1393" y="64" width="6" height="6" fill="#ffd400"/><rect x="1219" y="70" width="6" height="6" fill="#aaff01"/><rect x="1225" y="70" width="6" height="6" fill="#aeff01"/><rect x="1231" y="70" width="6" height="6" fill="#b2ff01"/><rect x="1237" y="70" width="6" height="6" fill="#b6ff00"/><rect x="1243" y="70" width="6" height="6" fill="#baff00"/><rect x="1249" y="70" width="6" height="6" fill="#bfff00"/><rect x="1255" y="70" width="6" height="6" fill="#c3ff00"/><rect x="1261" y="70" width="6" height="6" fill="#c8ff00"/><rect x="1267" y="70" width="6" height="6" fill="#ccff00"/><rect x="1273" y="70" width="6" height="6" fill="#d1ff00"/><rect x="1279" y="70" width="6" height="6" fill="#d5ff00"/><rect x="1285" y="70" width="6" height="6" fill="#daff00"/><rect x="1291" y="70" width="6" height="6" fill="#deff00"/><rect x="1297" y="70" width="6" height="6" fill="#e3ff00"/><rect x="1303" y="70" width="6" height="6" fill="#e8ff00"/><rect x="1309" y="70" width="6" height="6" fill="#edff00"/><rect x="1315" y="70" width="6" height="6" fill="#f2ff00"/><rect x="1321" y="70" width="6" height="6" fill="#f7ff00"/><rect x="1327" y="70" width="6" height="6" fill="#fcff00"/><rect x="1333" y="70" width="6" height="6" fill="#fffd00"/><rect x="1339" y="70" width="6" height="6" fill="#fff800"/><rect x="1345" y="70" width="6" height="6" fill="#fff300"/><rect x="1351" y="70" width="6" height="6" fill="#ffef00"/><rect x="1357" y="70" width="6" height="6" fill="#ffea00"/><rect x="1363" y="70" width="6" height="6" fill="#ffe600"/><rect x="1369" y="70" width="6" height="6" fill="#ffe100"/><rect x="1375" y="70" width="6" height="6" fill="#ffdd00"/><rect x="1381" y="70" width="6" height="6" fill="#ffd900"/><rect x="1387" y="70" width="6" height="6" fill="#ffd500"/><rect x="1393" y="70" width="6" height="6" fill="#ffd100"/><rect x="1219" y="76" width="6" height="6" fill="#acff01"/><rect x="1225" y="76" width="6" height="6" fill="#b0ff01"/><rect x="1231" y="76" width="6" height="6" fill="#b4ff01"/><rect x="1237" y="76" width="6" height="6" fill="#b9ff01"/><rect x="1243" y="76" width="6" height="6" fill="#bdff00"/><rect x="1249" y="76" width="6" height="6" fill="#c1ff00"/><rect x="1255" y="76" width="6" height="6" fill="#c6ff00"/><rect x="1261" y="76" width="6" height="6" fill="#caff00"/><rect x="1267" y="76" width="6" height="6" fill="#cfff00"/><rect x="1273" y="76" width="6" height="6" fill="#d3ff00"/><rect x="1279" y="76" width="6" height="6" fill="#d8ff00"/><rect x="1285" y="76" width="6" height="6" fill="#ddff00"/><rect x="1291" y="76" width="6" height="6" fill="#e1ff00"/><rect x="1297" y="76" width="6" height="6" fill="#e6ff00"/><rect x="1303" y="76" width="6" height="6" fill="#ebff00"/><rect x="1309" y="76" width="6" height="6" fill="#f0ff00"/><rect x="1315" y="76" width="6" height="6" fill="#f5ff00"/><rect x="1321" y="76" width="6" height="6" fill="#faff00"/><rect x="1327" y="76" width="6" height="6" fill="#ffff00"/><rect x="1333" y="76" width="6" height="6" fill="#fffa00"/><rect x="1339" y="76" width="6" height="6" fill="#fff500"/><rect x="1345" y="76" width="6" height="6" fill="#fff000"/><rect x="1351" y="76" width="6" height="6" fill="#ffec00"/><rect x="1357" y="76" width="6" height="6" fill="#ffe700"/><rect x="1363" y="76" width="6" height="6" fill="#ffe300"/><rect x="1369" y="76" width="6" height="6" fill="#ffdf00"/><rect x="1375" y="76" width="6" height="6" fill="#ffda00"/><rect x="1381" y="76" width="6" height="6" fill="#ffd600"/><rect x="1387" y="76" width="6" height="6" fill="#ffd200"/><rect x="1393" y="76" width="6" height="6" fill="#ffcf00"/><rect x="1219" y="82" width="6" height="6" fill="#aeff02"/><rect x="1225" y="82" width="6" height="6" fill="#b2ff01"/><rect x="1231" y="82" width="6" height="6" fill="#b7ff01"/><rect x="1237" y="82" width="6" height="6" fill="#bbff01"/><rect x="1243" y="82" width="6" height="6" fill="#bfff01"/><rect x="1249" y="82" width="6" height="6" fill="#c4ff00"/><rect x="1255" y="82" width="6" height="6" fill="#c8ff00"/><rect x="1261" y="82" width="6" height="6" fill="#cdff00"/><rect x="1267" y="82" width="6" height="6" fill="#d1ff00"/><rect x="1273" y="82" width="6" height="6" fill="#d6ff00"/><rect x="1279" y="82" width="6" height="6" fill="#dbff00"/><rect x="1285" y="82" width="6" height="6" fill="#dfff00"/><rect x="1291" y="82" width="6" height="6" fill="#e4ff00"/><rect x="1297" y="82" width="6" height="6" fill="#e9ff00"/><rect x="1303" y="82" width="6" height="6" fill="#eeff00"/><rect x="1309" y="82" width="6" height="6" fill="#f3ff00"/><rect x="1315" y="82" width="6" height="6" fill="#f8ff00"/><rect x="1321" y="82" width="6" height="6" fill="#fdff00"/><rect x="1327" y="82" width="6" height="6" fill="#fffc00"/><rect x="1333" y="82" width="6" height="6" fill="#fff700"/><rect x="1339" y="82" width="6" height="6" fill="#fff200"/><rect x="1345" y="82" width="6" height="6" fill="#ffee00"/><rect x="1351" y="82" width="6" height="6" fill="#ffe900"/><rect x="1357" y="82" width="6" height="6" fill="#ffe500"/><rect x="1363" y="82" width="6" height="6" fill="#ffe000"/><rect x="1369" y="82" width="6" height="6" fill="#ffdc00"/><rect x="1375" y="82" width="6" height="6" fill="#ffd800"/><rect x="1381" y="82" width="6" height="6" fill="#ffd400"/><rect x="1387" y="82" width="6" height="6" fill="#ffd000"/><rect x="1393" y="82" width="6" height="6" fill="#ffcc00"/><rect x="1219" y="88" width="6" height="6" fill="#b0ff02"/><rect x="1225" y="88" width="6" height="6" fill="#b5ff02"/><rect x="1231" y="88" width="6" height="6" fill="#b9ff02"/><rect x="1237" y="88" width="6" height="6" fill="#bdff01"/><rect x="1243" y="88" width="6" height="6" fill="#c2ff01"/><rect x="1249" y="88" width="6" height="6" fill="#c6ff01"/><rect x="1255" y="88" width="6" height="6" fill="#cbff01"/><rect x="1261" y="88" width="6" height="6" fill="#cfff00"/><rect x="1267" y="88" width="6" height="6" fill="#d4ff00"/><rect x="1273" y="88" width="6" height="6" fill="#d9ff00"/><rect x="1279" y="88" width="6" height="6" fill="#ddff00"/><rect x="1285" y="88" width="6" height="6" fill="#e2ff00"/><rect x="1291" y="88" width="6" height="6" fill="#e7ff00"/><rect x="1297" y="88" width="6" height="6" fill="#ecff00"/><rect x="1303" y="88" width="6" height="6" fill="#f1ff00"/><rect x="1309" y="88" width="6" height="6" fill="#f6ff00"/><rect x="1315" y="88" width="6" height="6" fill="#fbff00"/><rect x="1321" y="88" width="6" height="6" fill="#fffe00"/><rect x="1327" y="88" width="6" height="6" fill="#fff900"/><rect x="1333" y="88" width="6" height="6" fill="#fff400"/><rect x="1339" y="88" width="6" height="6" fill="#ffef00"/><rect x="1345" y="88" width="6" height="6" fill="#ffeb00"/><rect x="1351" y="88" width="6" height="6" fill="#ffe600"/><rect x="1357" y="88" width="6" height="6" fill="#ffe200"/><rect x="1363" y="88" width="6" height="6" fill="#ffde00"/><rect x="1369" y="88" width="6" height="6" fill="#ffd900"/><rect x="1375" y="88" width="6" height="6" fill="#ffd500"/><rect x="1381" y="88" width="6" height="6" fill="#ffd100"/><rect x="1387" y="88" width="6" height="6" fill="#ffcd00"/><rect x="1393" y="88" width="6" height="6" fill="#ffca00"/><rect x="1219" y="94" width="6" height="6" fill="#b3ff02"/><rect x="1225" y="94" width="6" height="6" fill="#b7ff02"/><rect x="1231" y="94" width="6" height="6" fill="#bbff02"/><rect x="1237" y="94" width="6" height="6" fill="#c0ff02"/><rect x="1243" y="94" width="6" height="6" fill="#c4ff01"/><rect x="1249" y="94" width="6" height="6" fill="#c9ff01"/><rect x="1255" y="94" width="6" height="6" fill="#cdff01"/><rect x="1261" y="94" width="6" height="6" fill="#d2ff01"/><rect x="1267" y="94" width="6" height="6" fill="#d7ff00"/><rect x="1273" y="94" width="6" height="6" fill="#dbff00"/><rect x="1279" y="94" width="6" height="6" fill="#e0ff00"/><rect x="1285" y="94" width="6" height="6" fill="#e5ff00"/><rect x="1291" y="94" width="6" height="6" fill="#eaff00"/><rect x="1297" y="94" width="6" height="6" fill="#efff00"/><rect x="1303" y="94" width="6" height="6" fill="#f4ff00"/><rect x="1309" y="94" width="6" height="6" fill="#f9ff00"/><rect x="1315" y="94" width="6" height="6" fill="#feff00"/><rect x="1321" y="94" width="6" height="6" fill="#fffb00"/><rect x="1327" y="94" width="6" height="6" fill="#fff600"/><rect x="1333" y="94" width="6" height="6" fill="#fff100"/><rect x="1339" y="94" width="6" height="6" fill="#ffec00"/><rect x="1345" y="94" width="6" height="6" fill="#ffe800"/><rect x="1351" y="94" width="6" height="6" fill="#ffe300"/><rect x="1357" y="94" width="6" height="6" fill="#ffdf00"/><rect x="1363" y="94" width="6" height="6" fill="#ffdb00"/><rect x="1369" y="94" width="6" height="6" fill="#ffd700"/><rect x="1375" y="94" width="6" height="6" fill="#ffd300"/><rect x="1381" y="94" width="6" height="6" fill="#ffcf00"/><rect x="1387" y="94" width="6" height="6" fill="#ffcb00"/><rect x="1393" y="94" width="6" height="6" fill="#ffc700"/><rect x="1219" y="100" width="6" height="6" fill="#b5ff03"/><rect x="1225" y="100" width="6" height="6" fill="#b9ff03"/><rect x="1231" y="100" width="6" height="6" fill="#beff02"/><rect x="1237" y="100" width="6" height="6" fill="#c2ff02"/><rect x="1243" y="100" width="6" height="6" fill="#c7ff02"/><rect x="1249" y="100" width="6" height="6" fill="#cbff01"/><rect x="1255" y="100" width="6" height="6" fill="#d0ff01"/><rect x="1261" y="100" width="6" height="6" fill="#d5ff01"/><rect x="1267" y="100" width="6" height="6" fill="#d9ff01"/><rect x="1273" y="100" width="6" height="6" fill="#deff00"/><rect x="1279" y="100" width="6" height="6" fill="#e3ff00"/><rect x="1285" y="100" width="6" height="6" fill="#e8ff00"/><rect x="1291" y="100" width="6" height="6" fill="#edff00"/><rect x="1297" y="100" width="6" height="6" fill="#f2ff00"/><rect x="1303" y="100" width="6" height="6" fill="#f7ff00"/><rect x="1309" y="100" width="6" height="6" fill="#fcff00"/><rect x="1315" y="100" width="6" height="6" fill="#fffd00"/><rect x="1321" y="100" width="6" height="6" fill="#fff800"/><rect x="1327" y="100" width="6" height="6" fill="#fff300"/><rect x="1333" y="100" width="6" height="6" fill="#ffee00"/><rect x="1339" y="100" width="6" height="6" fill="#ffea00"/><rect x="1345" y="100" width="6" height="6" fill="#ffe500"/><rect x="1351" y="100" width="6" height="6" fill="#ffe100"/><rect x="1357" y="100" width="6" height="6" fill="#ffdc00"/><rect x="1363" y="100" width="6" height="6" fill="#ffd800"/><rect x="1369" y="100" width="6" height="6" fill="#ffd400"/><rect x="1375" y="100" width="6" height="6" fill="#ffd000"/><rect x="1381" y="100" width="6" height="6" fill="#ffcc00"/><rect x="1387" y="100" width="6" height="6" fill="#ffc900"/><rect x="1393" y="100" width="6" height="6" fill="#ffc500"/><rect x="1219" y="106" width="6" height="6" fill="#b7ff03"/><rect x="1225" y="106" width="6" height="6" fill="#bcff03"/><rect x="1231" y="106" width="6" height="6" fill="#c0ff03"/><rect x="1237" y="106" width="6" height="6" fill="#c5ff02"/><rect x="1243" y="106" width="6" height="6" fill="#c9ff02"/><rect x="1249" y="106" width="6" height="6" fill="#ceff02"/><rect x="1255" y="106" width="6" height="6" fill="#d2ff02"/><rect x="1261" y="106" width="6" height="6" fill="#d7ff01"/><rect x="1267" y="106" width="6" height="6" fill="#dcff01"/><rect x="1273" y="106" width="6" height="6" fill="#e1ff01"/><rect x="1279" y="106" width="6" height="6" fill="#e6ff01"/><rect x="1285" y="106" width="6" height="6" fill="#ebff00"/><rect x="1291" y="106" width="6" height="6" fill="#f0ff00"/><rect x="1297" y="106" width="6" height="6" fill="#f5ff00"/><rect x="1303" y="106" width="6" height="6" fill="#faff00"/><rect x="1309" y="106" width="6" height="6" fill="#ffff00"/><rect x="1315" y="106" width="6" height="6" fill="#fffa00"/><rect x="1321" y="106" width="6" height="6" fill="#fff500"/><rect x="1327" y="106" width="6" height="6" fill="#fff000"/><rect x="1333" y="106" width="6" height="6" fill="#ffeb00"/><rect x="1339" y="106" width="6" height="6" fill="#ffe700"/><rect x="1345" y="106" width="6" height="6" fill="#ffe200"/><rect x="1351" y="106" width="6" height="6" fill="#ffde00"/><rect x="1357" y="106" width="6" height="6" fill="#ffda00"/><rect x="1363" y="106" width="6" height="6" fill="#ffd600"/><rect x="1369" y="106" width="6" height="6" fill="#ffd200"/><rect x="1375" y="106" width="6" height="6" fill="#ffce00"/><rect x="1381" y="106" width="6" height="6" fill="#ffca00"/><rect x="1387" y="106" width="6" height="6" fill="#ffc600"/><rect x="1393" y="106" width="6" height="6" fill="#ffc300"/><rect x="1219" y="112" width="6" height="6" fill="#baff04"/><rect x="1225" y="112" width="6" height="6" fill="#beff03"/><rect x="1231" y="112" width="6" height="6" fill="#c3ff03"/><rect x="1237" y="112" width="6" height="6" fill="#c7ff03"/><rect x="1243" y="112" width="6" height="6" fill="#ccff03"/><rect x="1249" y="112" width="6" height="6" fill="#d0ff02"/><rect x="1255" y="112" width="6" height="6" fill="#d5ff02"/><rect x="1261" y="112" width="6" height="6" fill="#daff02"/><rect x="1267" y="112" width="6" height="6" fill="#dfff01"/><rect x="1273" y="112" width="6" height="6" fill="#e4ff01"/><rect x="1279" y="112" width="6" height="6" fill="#e9ff01"/><rect x="1285" y="112" width="6" height="6" fill="#eeff01"/><rect x="1291" y="112" width="6" height="6" fill="#f3ff00"/><rect x="1297" y="112" width="6" height="6" fill="#f8ff00"/><rect x="1303" y="112" width="6" height="6" fill="#fdff00"/><rect x="1309" y="112" width="6" height="6" fill="#fffc00"/><rect x="1315" y="112" width="6" height="6" fill="#fff700"/><rect x="1321" y="112" width="6" height="6" fill="#fff200"/><rect x="1327" y="112" width="6" height="6" fill="#ffed00"/><rect x="1333" y="112" width="6" height="6" fill="#ffe800"/><rect x="1339" y="112" width="6" height="6" fill="#ffe400"/><rect x="1345" y="112" width="6" height="6" fill="#ffe000"/><rect x="1351" y="112" width="6" height="6" fill="#ffdb00"/><rect x="1357" y="112" width="6" height="6" fill="#ffd700"/><rect x="1363" y="112" width="6" height="6" fill="#ffd300"/><rect x="1369" y="112" width="6" height="6" fill="#ffcf00"/><rect x="1375" y="112" width="6" height="6" fill="#ffcb00"/><rect x="1381" y="112" width="6" height="6" fill="#ffc700"/><rect x="1387" y="112" width="6" height="6" fill="#ffc400"/><rect x="1393" y="112" width="6" height="6" fill="#ffc000"/><rect x="1219" y="118" width="6" height="6" fill="#bcff04"/><rect x="1225" y="118" width="6" height="6" fill="#c1ff04"/><rect x="1231" y="118" width="6" height="6" fill="#c5ff04"/><rect x="1237" y="118" width="6" height="6" fill="#caff03"/><rect x="1243" y="118" width="6" height="6" fill="#ceff03"/><rect x="1249" y="118" width="6" height="6" fill="#d3ff03"/><rect x="1255" y="118" width="6" height="6" fill="#d8ff02"/><rect x="1261" y="118" width="6" height="6" fill="#ddff02"/><rect x="1267" y="118" width="6" height="6" fill="#e2ff02"/><rect x="1273" y="118" width="6" height="6" fill="#e7ff01"/><rect x="1279" y="118" width="6" height="6" fill="#ecff01"/><rect x="1285" y="118" width="6" height="6" fill="#f1ff01"/><rect x="1291" y="118" width="6" height="6" fill="#f6ff01"/><rect x="1297" y="118" width="6" height="6" fill="#fbff00"/><rect x="1303" y="118" width="6" height="6" fill="#fffe00"/><rect x="1309" y="118" width="6" height="6" fill="#fff900"/><rect x="1315" y="118" width="6" height="6" fill="#fff400"/><rect x="1321" y="118" width="6" height="6" fill="#ffef00"/><rect x="1327" y="118" width="6" height="6" fill="#ffea00"/><rect x="1333" y="118" width="6" height="6" fill="#ffe600"/><rect x="1339" y="118" width="6" height="6" fill="#ffe100"/><rect x="1345" y="118" width="6" height="6" fill="#ffdd00"/><rect x="1351" y="118" width="6" height="6" fill="#ffd900"/><rect x="1357" y="118" width="6" height="6" fill="#ffd400"/><rect x="1363" y="118" width="6" height="6" fill="#ffd000"/><rect x="1369" y="118" width="6" height="6" fill="#ffcd00"/><rect x="1375" y="118" width="6" height="6" fill="#ffc900"/><rect x="1381" y="118" width="6" height="6" fill="#ffc500"/><rect x="1387" y="118" width="6" height="6" fill="#ffc100"/><rect x="1393" y="118" width="6" height="6" fill="#ffbe00"/><rect x="1219" y="124" width="6" height="6" fill="#bfff05"/><rect x="1225" y="124" width="6" height="6" fill="#c3ff04"/><rect x="1231" y="124" width="6" height="6" fill="#c8ff04"/><rect x="1237" y="124" width="6" height="6" fill="#ccff04"/><rect x="1243" y="124" width="6" height="6" fill="#d1ff03"/><rect x="1249" y="124" width="6" height="6" fill="#d6ff03"/><rect x="1255" y="124" width="6" height="6" fill="#dbff03"/><rect x="1261" y="124" width="6" height="6" fill="#e0ff02"/><rect x="1267" y="124" width="6" height="6" fill="#e4ff02"/><rect x="1273" y="124" width="6" height="6" fill="#e9ff02"/><rect x="1279" y="124" width="6" height="6" fill="#efff02"/><rect x="1285" y="124" width="6" height="6" fill="#f4ff01"/><rect x="1291" y="124" width="6" height="6" fill="#f9ff01"/><rect x="1297" y="124" width="6" height="6" fill="#feff01"/><rect x="1303" y="124" width="6" height="6" fill="#fffb00"/><rect x="1309" y="124" width="6" height="6" fill="#fff600"/><rect x="1315" y="124" width="6" height="6" fill="#fff100"/><rect x="1321" y="124" width="6" height="6" fill="#ffec00"/><rect x="1327" y="124" width="6" height="6" fill="#ffe700"/><rect x="1333" y="124" width="6" height="6" fill="#ffe300"/><rect x="1339" y="124" width="6" height="6" fill="#ffde00"/><rect x="1345" y="124" width="6" height="6" fill="#ffda00"/><rect x="1351" y="124" width="6" height="6" fill="#ffd600"/><rect x="1357" y="124" width="6" height="6" fill="#ffd200"/><rect x="1363" y="124" width="6" height="6" fill="#ffce00"/><rect x="1369" y="124" width="6" height="6" fill="#ffca00"/><rect x="1375" y="124" width="6" height="6" fill="#ffc600"/><rect x="1381" y="124" width="6" height="6" fill="#ffc300"/><rect x="1387" y="124" width="6" height="6" fill="#ffbf00"/><rect x="1393" y="124" width="6" height="6" fill="#ffbc00"/><rect x="1219" y="130" width="6" height="6" fill="#c1ff05"/><rect x="1225" y="130" width="6" height="6" fill="#c6ff05"/><rect x="1231" y="130" width="6" height="6" fill="#caff05"/><rect x="1237" y="130" width="6" height="6" fill="#cfff04"/><rect x="1243" y="130" width="6" height="6" fill="#d4ff04"/><rect x="1249" y="130" width="6" height="6" fill="#d9ff04"/><rect x="1255" y="130" width="6" height="6" fill="#ddff03"/><rect x="1261" y="130" width="6" height="6" fill="#e2ff03"/><rect x="1267" y="130" width="6" height="6" fill="#e7ff03"/><rect x="1273" y="130" width="6" height="6" fill="#ecff02"/><rect x="1279" y="130" width="6" height="6" fill="#f2ff02"/><rect x="1285" y="130" width="6" height="6" fill="#f7ff02"/><rect x="1291" y="130" width="6" height="6" fill="#fcff01"/><rect x="1297" y="130" width="6" height="6" fill="#fffd01"/><rect x="1303" y="130" width="6" height="6" fill="#fff801"/><rect x="1309" y="130" width="6" height="6" fill="#fff301"/><rect x="1315" y="130" width="6" height="6" fill="#ffee00"/><rect x="1321" y="130" width="6" height="6" fill="#ffe900"/><rect x="1327" y="130" width="6" height="6" fill="#ffe400"/><rect x="1333" y="130" width="6" height="6" fill="#ffe000"/><rect x="1339" y="130" width="6" height="6" fill="#ffdc00"/><rect x="1345" y="130" width="6" height="6" fill="#ffd700"/><rect x="1351" y="130" width="6" height="6" fill="#ffd300"/><rect x="1357" y="130" width="6" height="6" fill="#ffcf00"/><rect x="1363" y="130" width="6" height="6" fill="#ffcb00"/><rect x="1369" y="130" width="6" height="6" fill="#ffc800"/><rect x="1375" y="130" width="6" height="6" fill="#ffc400"/><rect x="1381" y="130" width="6" height="6" fill="#ffc000"/><rect x="1387" y="130" width="6" height="6" fill="#ffbd00"/><rect x="1393" y="130" width="6" height="6" fill="#ffb900"/><rect x="1219" y="136" width="6" height="6" fill="#c4ff06"/><rect x="1225" y="136" width="6" height="6" fill="#c8ff05"/><rect x="1231" y="136" width="6" height="6" fill="#cdff05"/><rect x="1237" y="136" width="6" height="6" fill="#d2ff05"/><rect x="1243" y="136" width="6" height="6" fill="#d7ff04"/><rect x="1249" y="136" width="6" height="6" fill="#dbff04"/><rect x="1255" y="136" width="6" height="6" fill="#e0ff04"/><rect x="1261" y="136" width="6" height="6" fill="#e5ff03"/><rect x="1267" y="136" width="6" height="6" fill="#eaff03"/><rect x="1273" y="136" width="6" height="6" fill="#efff03"/><rect x="1279" y="136" width="6" height="6" fill="#f5ff02"/><rect x="1285" y="136" width="6" height="6" fill="#faff02"/><rect x="1291" y="136" width="6" height="6" fill="#ffff02"/><rect x="1297" y="136" width="6" height="6" fill="#fffa01"/><rect x="1303" y="136" width="6" height="6" fill="#fff501"/><rect x="1309" y="136" width="6" height="6" fill="#fff001"/><rect x="1315" y="136" width="6" height="6" fill="#ffeb01"/><rect x="1321" y="136" width="6" height="6" fill="#ffe600"/><rect x="1327" y="136" width="6" height="6" fill="#ffe200"/><rect x="1333" y="136" width="6" height="6" fill="#ffdd00"/><rect x="1339" y="136" width="6" height="6" fill="#ffd900"/><rect x="1345" y="136" width="6" height="6" fill="#ffd500"/><rect x="1351" y="136" width="6" height="6" fill="#ffd100"/><rect x="1357" y="136" width="6" height="6" fill="#ffcd00"/><rect x="1363" y="136" width="6" height="6" fill="#ffc900"/><rect x="1369" y="136" width="6" height="6" fill="#ffc500"/><rect x="1375" y="136" width="6" height="6" fill="#ffc100"/><rect x="1381" y="136" width="6" height="6" fill="#ffbe00"/><rect x="1387" y="136" width="6" height="6" fill="#ffba00"/><rect x="1393" y="136" width="6" height="6" fill="#ffb700"/><rect x="1219" y="142" width="6" height="6" fill="#c6ff06"/><rect x="1225" y="142" width="6" height="6" fill="#cbff06"/><rect x="1231" y="142" width="6" height="6" fill="#d0ff06"/><rect x="1237" y="142" width="6" height="6" fill="#d5ff05"/><rect x="1243" y="142" width="6" height="6" fill="#d9ff05"/><rect x="1249" y="142" width="6" height="6" fill="#deff05"/><rect x="1255" y="142" width="6" height="6" fill="#e3ff04"/><rect x="1261" y="142" width="6" height="6" fill="#e8ff04"/><rect x="1267" y="142" width="6" height="6" fill="#edff03"/><rect x="1273" y="142" width="6" height="6" fill="#f3ff03"/><rect x="1279" y="142" width="6" height="6" fill="#f8ff03"/><rect x="1285" y="142" width="6" height="6" fill="#fdff02"/><rect x="1291" y="142" width="6" height="6" fill="#fffc02"/><rect x="1297" y="142" width="6" height="6" fill="#fff702"/><rect x="1303" y="142" width="6" height="6" fill="#fff201"/><rect x="1309" y="142" width="6" height="6" fill="#ffed01"/><rect x="1315" y="142" width="6" height="6" fill="#ffe801"/><rect x="1321" y="142" width="6" height="6" fill="#ffe301"/><rect x="1327" y="142" width="6" height="6" fill="#ffdf00"/><rect x="1333" y="142" width="6" height="6" fill="#ffda00"/><rect x="1339" y="142" width="6" height="6" fill="#ffd600"/><rect x="1345" y="142" width="6" height="6" fill="#ffd200"/><rect x="1351" y="142" width="6" height="6" fill="#ffce00"/><rect x="1357" y="142" width="6" height="6" fill="#ffca00"/><rect x="1363" y="142" width="6" height="6" fill="#ffc600"/><rect x="1369" y="142" width="6" height="6" fill="#ffc300"/><rect x="1375" y="142" width="6" height="6" fill="#ffbf00"/><rect x="1381" y="142" width="6" height="6" fill="#ffbc00"/><rect x="1387" y="142" width="6" height="6" fill="#ffb800"/><rect x="1393" y="142" width="6" height="6" fill="#ffb500"/><rect x="1219" y="148" width="6" height="6" fill="#c9ff07"/><rect x="1225" y="148" width="6" height="6" fill="#ceff07"/><rect x="1231" y="148" width="6" height="6" fill="#d2ff06"/><rect x="1237" y="148" width="6" height="6" fill="#d7ff06"/><rect x="1243" y="148" width="6" height="6" fill="#dcff05"/><rect x="1249" y="148" width="6" height="6" fill="#e1ff05"/><rect x="1255" y="148" width="6" height="6" fill="#e6ff05"/><rect x="1261" y="148" width="6" height="6" fill="#ebff04"/><rect x="1267" y="148" width="6" height="6" fill="#f0ff04"/><rect x="1273" y="148" width="6" height="6" fill="#f6ff04"/><rect x="1279" y="148" width="6" height="6" fill="#fbff03"/><rect x="1285" y="148" width="6" height="6" fill="#fffe03"/><rect x="1291" y="148" width="6" height="6" fill="#fff902"/><rect x="1297" y="148" width="6" height="6" fill="#fff302"/><rect x="1303" y="148" width="6" height="6" fill="#ffee02"/><rect x="1309" y="148" width="6" height="6" fill="#ffea01"/><rect x="1315" y="148" width="6" height="6" fill="#ffe501"/><rect x="1321" y="148" width="6" height="6" fill="#ffe001"/><rect x="1327" y="148" width="6" height="6" fill="#ffdc01"/><rect x="1333" y="148" width="6" height="6" fill="#ffd800"/><rect x="1339" y="148" width="6" height="6" fill="#ffd400"/><rect x="1345" y="148" width="6" height="6" fill="#ffd000"/><rect x="1351" y="148" width="6" height="6" fill="#ffcc00"/><rect x="1357" y="148" width="6" height="6" fill="#ffc800"/><rect x="1363" y="148" width="6" height="6" fill="#ffc400"/><rect x="1369" y="148" width="6" height="6" fill="#ffc000"/><rect x="1375" y="148" width="6" height="6" fill="#ffbd00"/><rect x="1381" y="148" width="6" height="6" fill="#ffb900"/><rect x="1387" y="148" width="6" height="6" fill="#ffb600"/><rect x="1393" y="148" width="6" height="6" fill="#ffb300"/><rect x="1219" y="154" width="6" height="6" fill="#ccff08"/><rect x="1225" y="154" width="6" height="6" fill="#d0ff07"/><rect x="1231" y="154" width="6" height="6" fill="#d5ff07"/><rect x="1237" y="154" width="6" height="6" fill="#daff06"/><rect x="1243" y="154" width="6" height="6" fill="#dfff06"/><rect x="1249" y="154" width="6" height="6" fill="#e4ff06"/><rect x="1255" y="154" width="6" height="6" fill="#e9ff05"/><rect x="1261" y="154" width="6" height="6" fill="#eeff05"/><rect x="1267" y="154" width="6" height="6" fill="#f4ff04"/><rect x="1273" y="154" width="6" height="6" fill="#f9ff04"/><rect x="1279" y="154" width="6" height="6" fill="#feff04"/><rect x="1285" y="154" width="6" height="6" fill="#fffb03"/><rect x="1291" y="154" width="6" height="6" fill="#fff503"/><rect x="1297" y="154" width="6" height="6" fill="#fff003"/><rect x="1303" y="154" width="6" height="6" fill="#ffec02"/><rect x="1309" y="154" width="6" height="6" fill="#ffe702"/><rect x="1315" y="154" width="6" height="6" fill="#ffe202"/><rect x="1321" y="154" width="6" height="6" fill="#ffde01"/><rect x="1327" y="154" width="6" height="6" fill="#ffd901"/><rect x="1333" y="154" width="6" height="6" fill="#ffd501"/><rect x="1339" y="154" width="6" height="6" fill="#ffd100"/><rect x="1345" y="154" width="6" height="6" fill="#ffcd00"/><rect x="1351" y="154" width="6" height="6" fill="#ffc900"/><rect x="1357" y="154" width="6" height="6" fill="#ffc500"/><rect x="1363" y="154" width="6" height="6" fill="#ffc200"/><rect x="1369" y="154" width="6" height="6" fill="#ffbe00"/><rect x="1375" y="154" width="6" height="6" fill="#ffba00"/><rect x="1381" y="154" width="6" height="6" fill="#ffb700"/><rect x="1387" y="154" width="6" height="6" fill="#ffb400"/><rect x="1393" y="154" width="6" height="6" fill="#ffb000"/><rect x="1219" y="160" width="6" height="6" fill="#ceff08"/><rect x="1225" y="160" width="6" height="6" fill="#d3ff08"/><rect x="1231" y="160" width="6" height="6" fill="#d8ff07"/><rect x="1237" y="160" width="6" height="6" fill="#ddff07"/><rect x="1243" y="160" width="6" height="6" fill="#e2ff07"/><rect x="1249" y="160" width="6" height="6" fill="#e7ff06"/><rect x="1255" y="160" width="6" height="6" fill="#ecff06"/><rect x="1261" y="160" width="6" height="6" fill="#f1ff05"/><rect x="1267" y="160" width="6" height="6" fill="#f7ff05"/><rect x="1273" y="160" width="6" height="6" fill="#fcff05"/><rect x="1279" y="160" width="6" height="6" fill="#fffd04"/><rect x="1285" y="160" width="6" height="6" fill="#fff704"/><rect x="1291" y="160" width="6" height="6" fill="#fff203"/><rect x="1297" y="160" width="6" height="6" fill="#ffed03"/><rect x="1303" y="160" width="6" height="6" fill="#ffe903"/><rect x="1309" y="160" width="6" height="6" fill="#ffe402"/><rect x="1315" y="160" width="6" height="6" fill="#ffdf02"/><rect x="1321" y="160" width="6" height="6" fill="#ffdb02"/><rect x="1327" y="160" width="6" height="6" fill="#ffd701"/><rect x="1333" y="160" width="6" height="6" fill="#ffd201"/><rect x="1339" y="160" width="6" height="6" fill="#ffce01"/><rect x="1345" y="160" width="6" height="6" fill="#ffca01"/><rect x="1351" y="160" width="6" height="6" fill="#ffc700"/><rect x="1357" y="160" width="6" height="6" fill="#ffc300"/><rect x="1363" y="160" width="6" height="6" fill="#ffbf00"/><rect x="1369" y="160" width="6" height="6" fill="#ffbc00"/><rect x="1375" y="160" width="6" height="6" fill="#ffb800"/><rect x="1381" y="160" width="6" height="6" fill="#ffb500"/><rect x="1387" y="160" width="6" height="6" fill="#ffb100"/><rect x="1393" y="160" width="6" height="6" fill="#ffae00"/><rect x="1219" y="166" width="6" height="6" fill="#d1ff09"/><rect x="1225" y="166" width="6" height="6" fill="#d6ff08"/><rect x="1231" y="166" width="6" height="6" fill="#dbff08"/><rect x="1237" y="166" width="6" height="6" fill="#e0ff08"/><rect x="1243" y="166" width="6" height="6" fill="#e5ff07"/><rect x="1249" y="166" width="6" height="6" fill="#eaff07"/><rect x="1255" y="166" width="6" height="6" fill="#efff06"/><rect x="1261" y="166" width="6" height="6" fill="#f5ff06"/><rect x="1267" y="166" width="6" height="6" fill="#faff06"/><rect x="1273" y="166" width="6" height="6" fill="#ffff05"/><rect x="1279" y="166" width="6" height="6" fill="#fff905"/><rect x="1285" y="166" width="6" height="6" fill="#fff404"/><rect x="1291" y="166" width="6" height="6" fill="#ffef04"/><rect x="1297" y="166" width="6" height="6" fill="#ffea03"/><rect x="1303" y="166" width="6" height="6" fill="#ffe603"/><rect x="1309" y="166" width="6" height="6" fill="#ffe103"/><rect x="1315" y="166" width="6" height="6" fill="#ffdd02"/><rect x="1321" y="166" width="6" height="6" fill="#ffd802"/><rect x="1327" y="166" width="6" height="6" fill="#ffd402"/><rect x="1333" y="166" width="6" height="6" fill="#ffd001"/><rect x="1339" y="166" width="6" height="6" fill="#ffcc01"/><rect x="1345" y="166" width="6" height="6" fill="#ffc801"/><rect x="1351" y="166" width="6" height="6" fill="#ffc401"/><rect x="1357" y="166" width="6" height="6" fill="#ffc000"/><rect x="1363" y="166" width="6" height="6" fill="#ffbd00"/><rect x="1369" y="166" width="6" height="6" fill="#ffb900"/><rect x="1375" y="166" width="6" height="6" fill="#ffb600"/><rect x="1381" y="166" width="6" height="6" fill="#ffb200"/><rect x="1387" y="166" width="6" height="6" fill="#ffaf00"/><rect x="1393" y="166" width="6" height="6" fill="#ffac00"/><rect x="1219" y="172" width="6" height="6" fill="#d4ff0a"/><rect x="1225" y="172" width="6" height="6" fill="#d9ff09"/><rect x="1231" y="172" width="6" height="6" fill="#deff09"/><rect x="1237" y="172" width="6" height="6" fill="#e3ff08"/><rect x="1243" y="172" width="6" height="6" fill="#e8ff08"/><rect x="1249" y="172" width="6" height="6" fill="#edff07"/><rect x="1255" y="172" width="6" height="6" fill="#f2ff07"/><rect x="1261" y="172" width="6" height="6" fill="#f8ff07"/><rect x="1267" y="172" width="6" height="6" fill="#fdff06"/><rect x="1273" y="172" width="6" height="6" fill="#fffb06"/><rect x="1279" y="172" width="6" height="6" fill="#fff605"/><rect x="1285" y="172" width="6" height="6" fill="#fff105"/><rect x="1291" y="172" width="6" height="6" fill="#ffec04"/><rect x="1297" y="172" width="6" height="6" fill="#ffe704"/><rect x="1303" y="172" width="6" height="6" fill="#ffe303"/><rect x="1309" y="172" width="6" height="6" fill="#ffde03"/><rect x="1315" y="172" width="6" height="6" fill="#ffda03"/><rect x="1321" y="172" width="6" height="6" fill="#ffd502"/><rect x="1327" y="172" width="6" height="6" fill="#ffd102"/><rect x="1333" y="172" width="6" height="6" fill="#ffcd02"/><rect x="1339" y="172" width="6" height="6" fill="#ffc901"/><rect x="1345" y="172" width="6" height="6" fill="#ffc501"/><rect x="1351" y="172" width="6" height="6" fill="#ffc201"/><rect x="1357" y="172" width="6" height="6" fill="#ffbe01"/><rect x="1363" y="172" width="6" height="6" fill="#ffba00"/><rect x="1369" y="172" width="6" height="6" fill="#ffb700"/><rect x="1375" y="172" width="6" height="6" fill="#ffb400"/><rect x="1381" y="172" width="6" height="6" fill="#ffb000"/><rect x="1387" y="172" width="6" height="6" fill="#ffad00"/><rect x="1393" y="172" width="6" height="6" fill="#ffaa00"/><rect x="1219" y="178" width="6" height="6" fill="#d7ff0a"/><rect x="1225" y="178" width="6" height="6" fill="#dcff0a"/><rect x="1231" y="178" width="6" height="6" fill="#e1ff09"/><rect x="1237" y="178" width="6" height="6" fill="#e6ff09"/><rect x="1243" y="178" width="6" height="6" fill="#ebff09"/><rect x="1249" y="178" width="6" height="6" fill="#f0ff08"/><rect x="1255" y="178" width="6" height="6" fill="#f6ff08"/><rect x="1261" y="178" width="6" height="6" fill="#fbff07"/><rect x="1267" y="178" width="6" height="6" fill="#fffe07"/><rect x="1273" y="178" width="6" height="6" fill="#fff806"/><rect x="1279" y="178" width="6" height="6" fill="#fff306"/><rect x="1285" y="178" width="6" height="6" fill="#ffee05"/><rect x="1291" y="178" width="6" height="6" fill="#ffe905"/><rect x="1297" y="178" width="6" height="6" fill="#ffe404"/><rect x="1303" y="178" width="6" height="6" fill="#ffe004"/><rect x="1309" y="178" width="6" height="6" fill="#ffdb03"/><rect x="1315" y="178" width="6" height="6" fill="#ffd703"/><rect x="1321" y="178" width="6" height="6" fill="#ffd303"/><rect x="1327" y="178" width="6" height="6" fill="#ffcf02"/><rect x="1333" y="178" width="6" height="6" fill="#ffcb02"/><rect x="1339" y="178" width="6" height="6" fill="#ffc702"/><rect x="1345" y="178" width="6" height="6" fill="#ffc301"/><rect x="1351" y="178" width="6" height="6" fill="#ffbf01"/><rect x="1357" y="178" width="6" height="6" fill="#ffbc01"/><rect x="1363" y="178" width="6" height="6" fill="#ffb801"/><rect x="1369" y="178" width="6" height="6" fill="#ffb500"/><rect x="1375" y="178" width="6" height="6" fill="#ffb100"/><rect x="1381" y="178" width="6" height="6" fill="#ffae00"/><rect x="1387" y="178" width="6" height="6" fill="#ffab00"/><rect x="1393" y="178" width="6" height="6" fill="#ffa800"/><rect x="1219" y="184" width="6" height="6" fill="#d9ff0b"/><rect x="1225" y="184" width="6" height="6" fill="#dfff0b"/><rect x="1231" y="184" width="6" height="6" fill="#e4ff0a"/><rect x="1237" y="184" width="6" height="6" fill="#e9ff0a"/><rect x="1243" y="184" width="6" height="6" fill="#eeff09"/><rect x="1249" y="184" width="6" height="6" fill="#f3ff09"/><rect x="1255" y="184" width="6" height="6" fill="#f9ff08"/><rect x="1261" y="184" width="6" height="6" fill="#feff08"/><rect x="1267" y="184" width="6" height="6" fill="#fffa07"/><rect x="1273" y="184" width="6" height="6" fill="#fff507"/><rect x="1279" y="184" width="6" height="6" fill="#fff006"/><rect x="1285" y="184" width="6" height="6" fill="#ffeb06"/><rect x="1291" y="184" width="6" height="6" fill="#ffe605"/><rect x="1297" y="184" width="6" height="6" fill="#ffe205"/><rect x="1303" y="184" width="6" height="6" fill="#ffdd04"/><rect x="1309" y="184" width="6" height="6" fill="#ffd904"/><rect x="1315" y="184" width="6" height="6" fill="#ffd403"/><rect x="1321" y="184" width="6" height="6" fill="#ffd003"/><rect x="1327" y="184" width="6" height="6" fill="#ffcc03"/><rect x="1333" y="184" width="6" height="6" fill="#ffc802"/><rect x="1339" y="184" width="6" height="6" fill="#ffc402"/><rect x="1345" y="184" width="6" height="6" fill="#ffc002"/><rect x="1351" y="184" width="6" height="6" fill="#ffbd01"/><rect x="1357" y="184" width="6" height="6" fill="#ffb901"/><rect x="1363" y="184" width="6" height="6" fill="#ffb601"/><rect x="1369" y="184" width="6" height="6" fill="#ffb201"/><rect x="1375" y="184" width="6" height="6" fill="#ffaf00"/><rect x="1381" y="184" width="6" height="6" fill="#ffac00"/><rect x="1387" y="184" width="6" height="6" fill="#ffa900"/><rect x="1393" y="184" width="6" height="6" fill="#ffa600"/><rect x="1219" y="190" width="6" height="6" fill="#dcff0c"/><rect x="1225" y="190" width="6" height="6" fill="#e2ff0b"/><rect x="1231" y="190" width="6" height="6" fill="#e7ff0b"/><rect x="1237" y="190" width="6" height="6" fill="#ecff0a"/><rect x="1243" y="190" width="6" height="6" fill="#f1ff0a"/><rect x="1249" y="190" width="6" height="6" fill="#f7ff09"/><rect x="1255" y="190" width="6" height="6" fill="#fcff09"/><rect x="1261" y="190" width="6" height="6" fill="#fffc08"/><rect x="1267" y="190" width="6" height="6" fill="#fff708"/><rect x="1273" y="190" width="6" height="6" fill="#fff207"/><rect x="1279" y="190" width="6" height="6" fill="#ffed07"/><rect x="1285" y="190" width="6" height="6" fill="#ffe806"/><rect x="1291" y="190" width="6" height="6" fill="#ffe306"/><rect x="1297" y="190" width="6" height="6" fill="#ffdf05"/><rect x="1303" y="190" width="6" height="6" fill="#ffda05"/><rect x="1309" y="190" width="6" height="6" fill="#ffd604"/><rect x="1315" y="190" width="6" height="6" fill="#ffd204"/><rect x="1321" y="190" width="6" height="6" fill="#ffcd03"/><rect x="1327" y="190" width="6" height="6" fill="#ffc903"/><rect x="1333" y="190" width="6" height="6" fill="#ffc503"/><rect x="1339" y="190" width="6" height="6" fill="#ffc202"/><rect x="1345" y="190" width="6" height="6" fill="#ffbe02"/><rect x="1351" y="190" width="6" height="6" fill="#ffba02"/><rect x="1357" y="190" width="6" height="6" fill="#ffb701"/><rect x="1363" y="190" width="6" height="6" fill="#ffb301"/><rect x="1369" y="190" width="6" height="6" fill="#ffb001"/><rect x="1375" y="190" width="6" height="6" fill="#ffad01"/><rect x="1381" y="190" width="6" height="6" fill="#ffaa01"/><rect x="1387" y="190" width="6" height="6" fill="#ffa700"/><rect x="1393" y="190" width="6" height="6" fill="#ffa400"/><rect x="1219" y="196" width="6" height="6" fill="#dfff0c"/><rect x="1225" y="196" width="6" height="6" fill="#e5ff0c"/><rect x="1231" y="196" width="6" height="6" fill="#eaff0c"/><rect x="1237" y="196" width="6" height="6" fill="#efff0b"/><rect x="1243" y="196" width="6" height="6" fill="#f4ff0b"/><rect x="1249" y="196" width="6" height="6" fill="#faff0a"/><rect x="1255" y="196" width="6" height="6" fill="#ffff0a"/><rect x="1261" y="196" width="6" height="6" fill="#fff909"/><rect x="1267" y="196" width="6" height="6" fill="#fff408"/><rect x="1273" y="196" width="6" height="6" fill="#ffef08"/><rect x="1279" y="196" width="6" height="6" fill="#ffea07"/><rect x="1285" y="196" width="6" height="6" fill="#ffe507"/><rect x="1291" y="196" width="6" height="6" fill="#ffe006"/><rect x="1297" y="196" width="6" height="6" fill="#ffdc06"/><rect x="1303" y="196" width="6" height="6" fill="#ffd705"/><rect x="1309" y="196" width="6" height="6" fill="#ffd305"/><rect x="1315" y="196" width="6" height="6" fill="#ffcf04"/><rect x="1321" y="196" width="6" height="6" fill="#ffcb04"/><rect x="1327" y="196" width="6" height="6" fill="#ffc703"/><rect x="1333" y="196" width="6" height="6" fill="#ffc303"/><rect x="1339" y="196" width="6" height="6" fill="#ffbf03"/><rect x="1345" y="196" width="6" height="6" fill="#ffbc02"/><rect x="1351" y="196" width="6" height="6" fill="#ffb802"/><rect x="1357" y="196" width="6" height="6" fill="#ffb502"/><rect x="1363" y="196" width="6" height="6" fill="#ffb102"/><rect x="1369" y="196" width="6" height="6" fill="#ffae01"/><rect x="1375" y="196" width="6" height="6" fill="#ffab01"/><rect x="1381" y="196" width="6" height="6" fill="#ffa801"/><rect x="1387" y="196" width="6" height="6" fill="#ffa401"/><rect x="1393" y="196" width="6" height="6" fill="#ffa100"/><rect x="1219" y="202" width="6" height="6" fill="#e2ff0d"/><rect x="1225" y="202" width="6" height="6" fill="#e8ff0d"/><rect x="1231" y="202" width="6" height="6" fill="#edff0c"/><rect x="1237" y="202" width="6" height="6" fill="#f2ff0c"/><rect x="1243" y="202" width="6" height="6" fill="#f8ff0b"/><rect x="1249" y="202" width="6" height="6" fill="#fdff0b"/><rect x="1255" y="202" width="6" height="6" fill="#fffb0a"/><rect x="1261" y="202" width="6" height="6" fill="#fff60a"/><rect x="1267" y="202" width="6" height="6" fill="#fff109"/><rect x="1273" y="202" width="6" height="6" fill="#ffec08"/><rect x="1279" y="202" width="6" height="6" fill="#ffe708"/><rect x="1285" y="202" width="6" height="6" fill="#ffe207"/><rect x="1291" y="202" width="6" height="6" fill="#ffdd07"/><rect x="1297" y="202" width="6" height="6" fill="#ffd906"/><rect x="1303" y="202" width="6" height="6" fill="#ffd506"/><rect x="1309" y="202" width="6" height="6" fill="#ffd005"/><rect x="1315" y="202" width="6" height="6" fill="#ffcc05"/><rect x="1321" y="202" width="6" height="6" fill="#ffc804"/><rect x="1327" y="202" width="6" height="6" fill="#ffc404"/><rect x="1333" y="202" width="6" height="6" fill="#ffc004"/><rect x="1339" y="202" width="6" height="6" fill="#ffbd03"/><rect x="1345" y="202" width="6" height="6" fill="#ffb903"/><rect x="1351" y="202" width="6" height="6" fill="#ffb602"/><rect x="1357" y="202" width="6" height="6" fill="#ffb202"/><rect x="1363" y="202" width="6" height="6" fill="#ffaf02"/><rect x="1369" y="202" width="6" height="6" fill="#ffac02"/><rect x="1375" y="202" width="6" height="6" fill="#ffa801"/><rect x="1381" y="202" width="6" height="6" fill="#ffa501"/><rect x="1387" y="202" width="6" height="6" fill="#ffa201"/><rect x="1393" y="202" width="6" height="6" fill="#ff9f01"/></g></defs>
<g clip-path="url(#clInset)"><g shape-rendering="geometricPrecision"><use href="#insetGrid" filter="url(#fDimI)"/></g><g clip-path="url(#clITri)"><use href="#insetGrid" filter="url(#fBlur)"/></g></g>
<rect x="1231.75" y="34.75" width="153.5" height="159.5" fill="none" stroke="#8a8a8a" stroke-width="1.5"/>
<rect x="1301.5" y="107.5" width="13" height="13" fill="none" stroke="#ffffff" stroke-width="1.3"/>
<g shape-rendering="geometricPrecision">
<rect x="1030.5" y="153.5" width="12" height="12" fill="none" stroke="#ffffff" stroke-width="1.5"/>
<rect x="1032.5" y="184.5" width="12" height="12" fill="none" stroke="#ffffff" stroke-width="1.5"/>
<rect x="1033.5" y="211.5" width="12" height="12" fill="none" stroke="#ffffff" stroke-width="1.5"/>
<rect x="1034.5" y="239.5" width="12" height="12" fill="none" stroke="#ffffff" stroke-width="1.5"/>
<rect x="1037.5" y="266.5" width="12" height="12" fill="none" stroke="#ffffff" stroke-width="1.5"/>
<rect x="1107.5" y="202.5" width="12" height="12" fill="none" stroke="#ffffff" stroke-width="1.5"/>
<rect x="1092.5" y="223.5" width="12" height="12" fill="none" stroke="#ffffff" stroke-width="1.5"/>
<rect x="1080.5" y="239.5" width="12" height="12" fill="none" stroke="#ffffff" stroke-width="1.5"/>
<rect x="1067.5" y="257.5" width="12" height="12" fill="none" stroke="#ffffff" stroke-width="1.5"/>
<rect x="1051.5" y="276.5" width="12" height="12" fill="none" stroke="#ffffff" stroke-width="1.5"/>
<rect x="933.5" y="436.5" width="12" height="12" fill="none" stroke="#ffffff" stroke-width="1.5"/>
<rect x="956.5" y="405.5" width="12" height="12" fill="none" stroke="#ffffff" stroke-width="1.5"/>
<rect x="976.5" y="378.5" width="12" height="12" fill="none" stroke="#ffffff" stroke-width="1.5"/>
<rect x="996.5" y="352.5" width="12" height="12" fill="none" stroke="#ffffff" stroke-width="1.5"/>
<rect x="1017.5" y="323.5" width="12" height="12" fill="none" stroke="#ffffff" stroke-width="1.5"/>
<rect x="1043.5" y="386.5" width="12" height="12" fill="none" stroke="#ffffff" stroke-width="1.5"/>
<rect x="1042.5" y="366.5" width="12" height="12" fill="none" stroke="#ffffff" stroke-width="1.5"/>
<rect x="1041.5" y="349.5" width="12" height="12" fill="none" stroke="#ffffff" stroke-width="1.5"/>
<rect x="1040.5" y="333.5" width="12" height="12" fill="none" stroke="#ffffff" stroke-width="1.5"/>
<rect x="1039.5" y="314.5" width="12" height="12" fill="none" stroke="#ffffff" stroke-width="1.5"/>
<rect x="1250.5" y="295.5" width="12" height="12" fill="none" stroke="#ffffff" stroke-width="1.5"/>
<rect x="1203.5" y="295.5" width="12" height="12" fill="none" stroke="#ffffff" stroke-width="1.5"/>
<rect x="1161.5" y="295.5" width="12" height="12" fill="none" stroke="#ffffff" stroke-width="1.5"/>
<rect x="1123.5" y="295.5" width="12" height="12" fill="none" stroke="#ffffff" stroke-width="1.5"/>
<rect x="1079.5" y="295.5" width="12" height="12" fill="none" stroke="#ffffff" stroke-width="1.5"/>
<rect x="980.5" y="295.5" width="12" height="12" fill="none" stroke="#ffffff" stroke-width="1.5"/>
<rect x="992.5" y="295.5" width="12" height="12" fill="none" stroke="#ffffff" stroke-width="1.5"/>
<rect x="1004.5" y="295.5" width="12" height="12" fill="none" stroke="#ffffff" stroke-width="1.5"/>
<rect x="1015.5" y="295.5" width="12" height="12" fill="none" stroke="#ffffff" stroke-width="1.5"/>
<rect x="1026.5" y="295.5" width="12" height="12" fill="none" stroke="#ffffff" stroke-width="1.5"/>
<circle cx="1048.2" cy="188.2" r="4.6" fill="#3c9c3c" stroke="#000" stroke-width="1"/>
<circle cx="1048.5" cy="208.5" r="4.6" fill="#55a555" stroke="#000" stroke-width="1"/>
<circle cx="1047.2" cy="230.5" r="4.6" fill="#68a868" stroke="#000" stroke-width="1"/>
<circle cx="1047.2" cy="253.3" r="4.6" fill="#80ab80" stroke="#000" stroke-width="1"/>
<circle cx="1044.9" cy="276.9" r="4.6" fill="#98b098" stroke="#000" stroke-width="1"/>
<circle cx="1106.4" cy="226.4" r="4.6" fill="#aaa838" stroke="#000" stroke-width="1"/>
<circle cx="1095.1" cy="239.2" r="4.6" fill="#aeab50" stroke="#000" stroke-width="1"/>
<circle cx="1083.3" cy="252.3" r="4.6" fill="#b2b068" stroke="#000" stroke-width="1"/>
<circle cx="1071.5" cy="267.2" r="4.6" fill="#b4b280" stroke="#000" stroke-width="1"/>
<circle cx="1057.4" cy="282.6" r="4.6" fill="#b6b498" stroke="#000" stroke-width="1"/>
<circle cx="943.3" cy="418.7" r="4.6" fill="#101090" stroke="#000" stroke-width="1"/>
<circle cx="963.8" cy="394.1" r="4.6" fill="#4545a0" stroke="#000" stroke-width="1"/>
<circle cx="984.4" cy="369.5" r="4.6" fill="#6060a8" stroke="#000" stroke-width="1"/>
<circle cx="1003.3" cy="346.9" r="4.6" fill="#7c7cb0" stroke="#000" stroke-width="1"/>
<circle cx="1024.1" cy="323.1" r="4.6" fill="#9494b0" stroke="#000" stroke-width="1"/>
<circle cx="1042.3" cy="372.8" r="4.6" fill="#b000b0" stroke="#000" stroke-width="1"/>
<circle cx="1042.3" cy="358.7" r="4.6" fill="#b050b0" stroke="#000" stroke-width="1"/>
<circle cx="1042.3" cy="343.3" r="4.6" fill="#b070b0" stroke="#000" stroke-width="1"/>
<circle cx="1042.3" cy="330.3" r="4.6" fill="#b08ab0" stroke="#000" stroke-width="1"/>
<circle cx="1043.3" cy="314.6" r="4.6" fill="#b0a0b0" stroke="#000" stroke-width="1"/>
<circle cx="1204.3" cy="294.9" r="4.6" fill="#c80000" stroke="#000" stroke-width="1"/>
<circle cx="1178.3" cy="294.9" r="4.6" fill="#c04040" stroke="#000" stroke-width="1"/>
<circle cx="1145.5" cy="295.7" r="4.6" fill="#c05858" stroke="#000" stroke-width="1"/>
<circle cx="1114.4" cy="295.7" r="4.6" fill="#b87070" stroke="#000" stroke-width="1"/>
<circle cx="1077.8" cy="298.4" r="4.6" fill="#b48c8c" stroke="#000" stroke-width="1"/>
<circle cx="996.9" cy="300.8" r="4.6" fill="#20b0b8" stroke="#000" stroke-width="1"/>
<circle cx="1006.7" cy="300.8" r="4.6" fill="#50b0b4" stroke="#000" stroke-width="1"/>
<circle cx="1015.4" cy="300.8" r="4.6" fill="#6ab4b4" stroke="#000" stroke-width="1"/>
<circle cx="1025.1" cy="299.2" r="4.6" fill="#8cbaba" stroke="#000" stroke-width="1"/>
<circle cx="1034.4" cy="299.2" r="4.6" fill="#a0b8b8" stroke="#000" stroke-width="1"/>
<rect x="1038.5" y="294.5" width="12" height="12" fill="none" stroke="#000000" stroke-width="1.5"/>
<circle cx="1043.6" cy="300.8" r="4.6" fill="#ffffff" stroke="#000" stroke-width="1"/>
</g>
<defs><clipPath id="clTab"><rect x="830" y="512" width="537" height="171"/></clipPath></defs>
<rect x="814" y="512" width="553" height="14" fill="#2b2b2b" />
<rect x="814" y="526" width="553" height="13" fill="#151515" />
<rect x="814" y="512" width="16" height="27" fill="#000000" />
<rect x="830" y="539.0" width="537" height="24.8" fill="#454545" />
<rect x="814" y="539.0" width="16" height="24.8" fill="#262626" />
<line x1="814" y1="539.5" x2="830" y2="539.5" stroke="#1e1e1e" stroke-width="1"/>
<rect x="830" y="563.5" width="537" height="24.8" fill="#808080" />
<rect x="814" y="563.5" width="16" height="24.8" fill="#262626" />
<line x1="814" y1="564.0" x2="830" y2="564.0" stroke="#1e1e1e" stroke-width="1"/>
<rect x="830" y="588.0" width="537" height="24.8" fill="#454545" />
<rect x="814" y="588.0" width="16" height="24.8" fill="#262626" />
<line x1="814" y1="588.5" x2="830" y2="588.5" stroke="#1e1e1e" stroke-width="1"/>
<rect x="830" y="612.5" width="537" height="24.8" fill="#808080" />
<rect x="814" y="612.5" width="16" height="24.8" fill="#262626" />
<line x1="814" y1="613.0" x2="830" y2="613.0" stroke="#1e1e1e" stroke-width="1"/>
<rect x="830" y="637.0" width="537" height="24.8" fill="#454545" />
<rect x="814" y="637.0" width="16" height="24.8" fill="#262626" />
<line x1="814" y1="637.5" x2="830" y2="637.5" stroke="#1e1e1e" stroke-width="1"/>
<rect x="830" y="661.5" width="537" height="21.8" fill="#808080" />
<rect x="814" y="661.5" width="16" height="21.8" fill="#262626" />
<line x1="814" y1="662.0" x2="830" y2="662.0" stroke="#1e1e1e" stroke-width="1"/>
<g clip-path="url(#clTab)">
<text x="972" y="530.9" font-size="14" font-weight="bold" fill="#ffffff" textLength="33.6" lengthAdjust="spacingAndGlyphs">20%</text>
<text x="1062.8" y="530.9" font-size="14" font-weight="bold" fill="#ffffff" textLength="33.6" lengthAdjust="spacingAndGlyphs">40%</text>
<text x="1153.5" y="530.9" font-size="14" font-weight="bold" fill="#ffffff" textLength="33.6" lengthAdjust="spacingAndGlyphs">60%</text>
<text x="1244.3" y="530.9" font-size="14" font-weight="bold" fill="#ffffff" textLength="33.6" lengthAdjust="spacingAndGlyphs">80%</text>
<text x="1335" y="530.9" font-size="14" font-weight="bold" fill="#ffffff" textLength="44.5" lengthAdjust="spacingAndGlyphs">100%</text>
<text x="835.5" y="557.2" font-size="15.5" fill="#f4f4f4" textLength="67" lengthAdjust="spacingAndGlyphs">x: CIE31</text>
<text x="972" y="557.2" font-size="15.5" fill="#f4f4f4" textLength="56.6" lengthAdjust="spacingAndGlyphs">0,3345</text>
<text x="1062.8" y="557.2" font-size="15.5" fill="#f4f4f4" textLength="56.6" lengthAdjust="spacingAndGlyphs">0,3547</text>
<text x="1153.5" y="557.2" font-size="15.5" fill="#f4f4f4" textLength="56.6" lengthAdjust="spacingAndGlyphs">0,3746</text>
<text x="1244.3" y="557.2" font-size="15.5" fill="#f4f4f4" textLength="56.6" lengthAdjust="spacingAndGlyphs">0,3919</text>
<text x="1335" y="557.2" font-size="15.5" fill="#f4f4f4" textLength="56.6" lengthAdjust="spacingAndGlyphs">0,4088</text>
<text x="835.5" y="581.7" font-size="15.5" fill="#f4f4f4" textLength="67.6" lengthAdjust="spacingAndGlyphs">y: CIE31</text>
<text x="972" y="581.7" font-size="15.5" fill="#f4f4f4" textLength="56.6" lengthAdjust="spacingAndGlyphs">0,3625</text>
<text x="1062.8" y="581.7" font-size="15.5" fill="#f4f4f4" textLength="56.6" lengthAdjust="spacingAndGlyphs">0,3922</text>
<text x="1153.5" y="581.7" font-size="15.5" fill="#f4f4f4" textLength="56.6" lengthAdjust="spacingAndGlyphs">0,4214</text>
<text x="1244.3" y="581.7" font-size="15.5" fill="#f4f4f4" textLength="56.6" lengthAdjust="spacingAndGlyphs">0,4470</text>
<text x="1335" y="581.7" font-size="15.5" fill="#f4f4f4" textLength="56.6" lengthAdjust="spacingAndGlyphs">0,4726</text>
<text x="835.5" y="606.2" font-size="15.5" fill="#f4f4f4" textLength="11" lengthAdjust="spacingAndGlyphs">Y</text>
<text x="972" y="606.2" font-size="15.5" fill="#f4f4f4" textLength="77.2" lengthAdjust="spacingAndGlyphs">139,5083</text>
<text x="1062.8" y="606.2" font-size="15.5" fill="#f4f4f4" textLength="77.2" lengthAdjust="spacingAndGlyphs">135,6101</text>
<text x="1153.5" y="606.2" font-size="15.5" fill="#f4f4f4" textLength="77.2" lengthAdjust="spacingAndGlyphs">132,5161</text>
<text x="1244.3" y="606.2" font-size="15.5" fill="#f4f4f4" textLength="77.2" lengthAdjust="spacingAndGlyphs">130,2280</text>
<text x="1335" y="606.2" font-size="15.5" fill="#f4f4f4" textLength="77.2" lengthAdjust="spacingAndGlyphs">127,8670</text>
<text x="835.5" y="630.7" font-size="15.5" fill="#f4f4f4" textLength="122.4" lengthAdjust="spacingAndGlyphs">Target x:CIE31</text>
<text x="972" y="630.7" font-size="15.5" fill="#f4f4f4" textLength="56.6" lengthAdjust="spacingAndGlyphs">0,3344</text>
<text x="1062.8" y="630.7" font-size="15.5" fill="#f4f4f4" textLength="56.6" lengthAdjust="spacingAndGlyphs">0,3564</text>
<text x="1153.5" y="630.7" font-size="15.5" fill="#f4f4f4" textLength="56.6" lengthAdjust="spacingAndGlyphs">0,3773</text>
<text x="1244.3" y="630.7" font-size="15.5" fill="#f4f4f4" textLength="56.6" lengthAdjust="spacingAndGlyphs">0,3969</text>
<text x="1335" y="630.7" font-size="15.5" fill="#f4f4f4" textLength="56.6" lengthAdjust="spacingAndGlyphs">0,4193</text>
<text x="835.5" y="655.2" font-size="15.5" fill="#f4f4f4" textLength="123.5" lengthAdjust="spacingAndGlyphs">Target y:CIE31</text>
<text x="972" y="655.2" font-size="15.5" fill="#f4f4f4" textLength="56.6" lengthAdjust="spacingAndGlyphs">0,3648</text>
<text x="1062.8" y="655.2" font-size="15.5" fill="#f4f4f4" textLength="56.6" lengthAdjust="spacingAndGlyphs">0,4013</text>
<text x="1153.5" y="655.2" font-size="15.5" fill="#f4f4f4" textLength="56.6" lengthAdjust="spacingAndGlyphs">0,4358</text>
<text x="1244.3" y="655.2" font-size="15.5" fill="#f4f4f4" textLength="56.6" lengthAdjust="spacingAndGlyphs">0,4682</text>
<text x="1335" y="655.2" font-size="15.5" fill="#f4f4f4" textLength="56.6" lengthAdjust="spacingAndGlyphs">0,5053</text>
<text x="835.5" y="679.7" font-size="15.5" fill="#f4f4f4" textLength="72.7" lengthAdjust="spacingAndGlyphs">Target Y</text>
<text x="972" y="679.7" font-size="15.5" fill="#f4f4f4" textLength="77.2" lengthAdjust="spacingAndGlyphs">142,1429</text>
<text x="1062.8" y="679.7" font-size="15.5" fill="#f4f4f4" textLength="77.2" lengthAdjust="spacingAndGlyphs">139,6478</text>
<text x="1153.5" y="679.7" font-size="15.5" fill="#f4f4f4" textLength="77.2" lengthAdjust="spacingAndGlyphs">137,7308</text>
<text x="1244.3" y="679.7" font-size="15.5" fill="#f4f4f4" textLength="77.2" lengthAdjust="spacingAndGlyphs">136,2262</text>
<text x="1335" y="679.7" font-size="15.5" fill="#f4f4f4" textLength="77.2" lengthAdjust="spacingAndGlyphs">134,8500</text>
</g>
<rect x="1367" y="539" width="21" height="145" fill="#333333" />
<rect x="1367.5" y="540.5" width="19" height="142" rx="3" fill="#505050" stroke="#5a5a5a"/>
<rect x="1369.5" y="541.5" width="15" height="12" rx="2" fill="#686868" stroke="#707070"/>
<path d="M1372,550 L1377,545.5 L1382,550 Z" fill="#3a3a3a"/>
<rect x="1370" y="557" width="14" height="92" rx="6" fill="#3c3c3c"/>
<rect x="1369.5" y="668.5" width="15" height="12" rx="2" fill="#686868" stroke="#707070"/>
<path d="M1372,672 L1377,676.5 L1382,672 Z" fill="#3a3a3a"/>
<rect x="830" y="683" width="537" height="17" fill="#3a3a3a" />
<rect x="830.5" y="683.5" width="536" height="15" rx="3" fill="#474747" stroke="#505050"/>
<rect x="832.5" y="684.5" width="15" height="13" rx="2" fill="#686868" stroke="#707070"/>
<path d="M836.5,691 L843,686.5 L843,695.5 Z" fill="#3a3a3a"/>
<rect x="852" y="685" width="450" height="12" rx="6" fill="#3a3a3a"/>
<rect x="1350.5" y="684.5" width="15" height="13" rx="2" fill="#686868" stroke="#707070"/>
<path d="M1361.5,691 L1355,686.5 L1355,695.5 Z" fill="#3a3a3a"/>
<rect x="1392" y="0" width="3" height="702" fill="#2a2a2a" />
</svg></body></html>
